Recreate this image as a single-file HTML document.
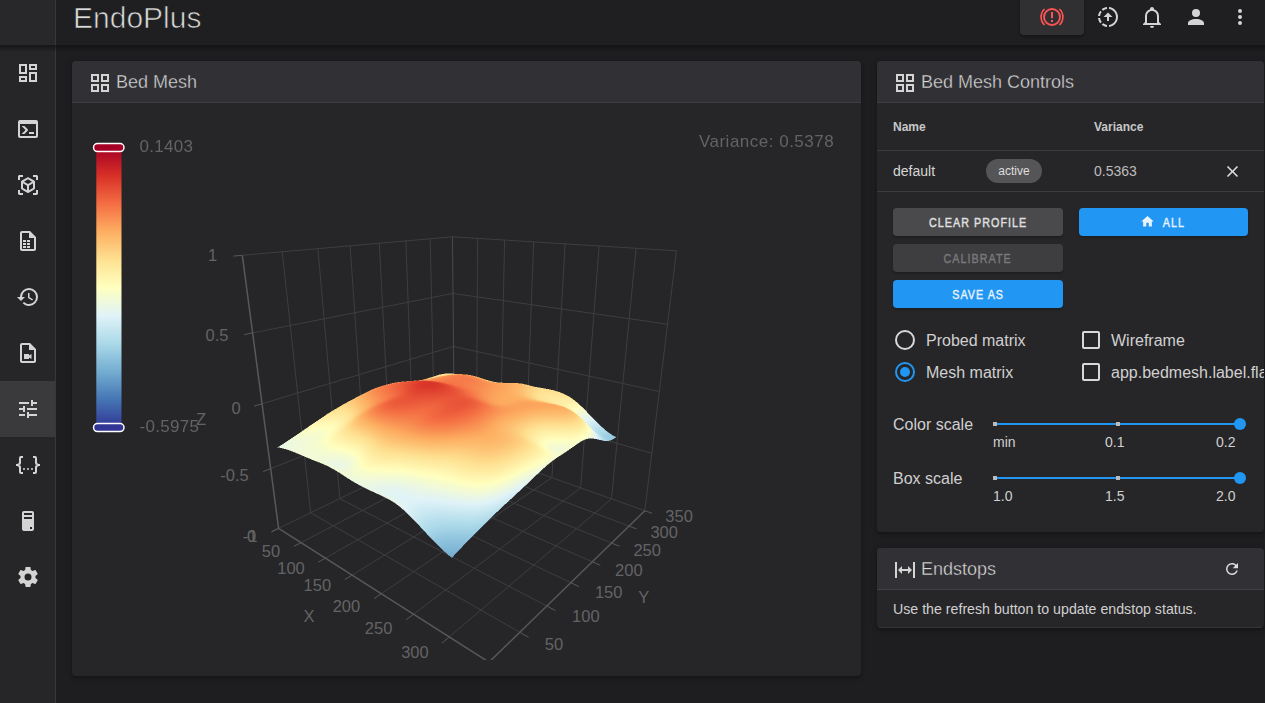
<!DOCTYPE html>
<html><head><meta charset="utf-8">
<style>
*{box-sizing:border-box;margin:0;padding:0}
html,body{width:1265px;height:703px;overflow:hidden;background:#1e1e20;font-family:"Liberation Sans",sans-serif;color:#d4d4d4}
.abs{position:absolute}
.ic{position:absolute;display:block}
#drawer{position:absolute;left:0;top:0;width:56px;height:703px;background:#262628;border-right:1px solid #38383b}
#drawertop{position:absolute;left:0;top:0;width:55px;height:45px;background:#28282a}
#appbar{position:absolute;left:56px;top:0;width:1209px;height:45px;background:#1f1f21}
#shadow{position:absolute;left:0;top:45px;width:1265px;height:7px;background:linear-gradient(rgba(16,16,18,.75),rgba(16,16,18,0))}
#active{position:absolute;left:0;top:381px;width:55px;height:56px;background:#3a3a3c}
.title{position:absolute;left:73px;top:1px;font-size:30px;line-height:34px;color:#dadada;letter-spacing:0px;-webkit-text-stroke:0.7px #1f1f21}
.estop{position:absolute;left:1020px;top:-6px;width:64px;height:41px;border-radius:4px;background:#303033;box-shadow:0 2px 3px rgba(0,0,0,.3)}
.card{position:absolute;background:#262628;border-radius:4px;overflow:hidden;box-shadow:0 2px 3px rgba(0,0,0,.25),0 1px 6px rgba(0,0,0,.15)}
.chead{position:absolute;left:0;top:0;right:0;height:42px;background:#313135;border-bottom:1px solid #404044}
.htxt{position:absolute;font-size:18px;line-height:20px;color:#dadada;-webkit-text-stroke:0.35px #313135}
.t12b{font-size:12px;font-weight:bold;color:#c8c8c8}
.btn{position:absolute;height:28px;border-radius:4px;font-size:12.5px;font-weight:normal;-webkit-text-stroke:0.4px currentColor;letter-spacing:0;text-align:center;line-height:28px;box-shadow:0 2px 2px rgba(0,0,0,.2)}
.btn span{display:inline-block;transform:scaleX(0.86);letter-spacing:1.2px;margin-top:1px}
.lbl16{position:absolute;font-size:16px;line-height:18px;color:#d0d0d0}
.lbl14{position:absolute;font-size:14px;line-height:16px;color:#d0d0d0}
.radio{position:absolute;width:20px;height:20px;border-radius:50%;border:2px solid #d8d8d8}
.cb{position:absolute;width:18px;height:18px;border-radius:2px;border:2px solid #d8d8d8}
.track{position:absolute;height:2px;background:#2196f3}
.tick{position:absolute;width:4px;height:4px;background:#bbb}
.thumb{position:absolute;width:12px;height:12px;border-radius:50%;background:#2196f3}
</style></head><body>
<div id="drawer"></div>
<div id="drawertop"></div>
<div id="appbar"></div>
<div id="shadow"></div>
<div id="active"></div>
<svg class="ic" style="left:16.0px;top:61.0px;width:24px;height:24px" viewBox="0 0 24 24"><path fill="#d4d4d4" d="M19,5V7H15V5H19M9,5V11H5V5H9M19,13V19H15V13H19M9,17V19H5V17H9M21,3H13V9H21V3M11,3H3V13H11V3M21,11H13V21H21V11M11,15H3V21H11V15Z"/></svg><svg class="ic" style="left:16.0px;top:117.0px;width:24px;height:24px" viewBox="0 0 24 24"><path fill="#d4d4d4" d="M20,19V7H4V19H20M20,3A2,2 0 0,1 22,5V19A2,2 0 0,1 20,21H4A2,2 0 0,1 2,19V5A2,2 0 0,1 4,3H20M13,17V15H18V17H13M9.58,13L5.57,9H8.4L11.7,12.3C12.09,12.69 12.09,13.33 11.7,13.72L8.42,17H5.59L9.58,13Z"/></svg><svg class="ic" style="left:16.0px;top:173.0px;width:24px;height:24px" viewBox="0 0 24 24"><path fill="#d4d4d4" d="M17,22V20H20V17H22V20.5C22,20.89 21.84,21.24 21.54,21.54C21.24,21.84 20.89,22 20.5,22H17M7,22H3.5C3.11,22 2.76,21.84 2.46,21.54C2.16,21.24 2,20.89 2,20.5V17H4V20H7V22M17,2H20.5C20.89,2 21.24,2.16 21.54,2.46C21.84,2.76 22,3.11 22,3.5V7H20V4H17V2M7,2V4H4V7H2V3.5C2,3.11 2.16,2.76 2.46,2.46C2.76,2.16 3.11,2 3.5,2H7M13,17.25L17,14.95V10.36L13,12.66V17.25M12,10.92L16,8.63L12,6.28L8,8.63L12,10.92M7,14.95L11,17.25V12.66L7,10.36V14.95M18.23,7.59C18.73,7.91 19,8.34 19,8.91V15.23C19,15.8 18.73,16.23 18.23,16.55L12.75,19.73C12.25,20.05 11.75,20.05 11.25,19.73L5.77,16.55C5.27,16.23 5,15.8 5,15.23V8.91C5,8.34 5.27,7.91 5.77,7.59L11.25,4.41C11.5,4.28 11.75,4.22 12,4.22C12.25,4.22 12.5,4.28 12.75,4.41L18.23,7.59Z"/></svg><svg class="ic" style="left:16.0px;top:229.0px;width:24px;height:24px" viewBox="0 0 24 24"><path fill="#d4d4d4" d="M14 2H6C4.89 2 4 2.89 4 4V20C4 21.11 4.89 22 6 22H18C19.11 22 20 21.11 20 20V8L14 2M18 20H6V4H13V9H18V20M7 11H10V13H7V11M11 11H14V13H11V11M7 14H10V16H7V14M11 14H14V16H11V14M7 17H10V19H7V17M11 17H14V19H11V17Z"/></svg><svg class="ic" style="left:16.0px;top:285.0px;width:24px;height:24px" viewBox="0 0 24 24"><path fill="#d4d4d4" d="M13.5,8H12V13L16.28,15.54L17,14.33L13.5,12.25V8M13,3A9,9 0 0,0 4,12H1L4.96,16.03L9,12H6A7,7 0 0,1 13,5A7,7 0 0,1 20,12A7,7 0 0,1 13,19C11.07,19 9.32,18.21 8.06,16.94L6.64,18.36C8.27,20 10.5,21 13,21A9,9 0 0,0 22,12A9,9 0 0,0 13,3"/></svg><svg class="ic" style="left:16.0px;top:341.0px;width:24px;height:24px" viewBox="0 0 24 24"><path fill="#d4d4d4" d="M14,2H6A2,2 0 0,0 4,4V20A2,2 0 0,0 6,22H18A2,2 0 0,0 20,20V8L14,2M18,20H6V4H13V9H18V20ZM8,13H13V14.5L15.5,13V18L13,16.5V18H8Z"/></svg><svg class="ic" style="left:16.0px;top:397.0px;width:24px;height:24px" viewBox="0 0 24 24"><path fill="#d4d4d4" d="M3,17V19H9V17H3M3,5V7H13V5H3M13,21V19H21V17H13V15H11V21H13M7,9V11H3V13H7V15H9V9H7M21,13V11H11V13H21M15,9H17V7H21V5H17V3H15V9Z"/></svg><svg class="ic" style="left:16.0px;top:453.0px;width:24px;height:24px" viewBox="0 0 24 24"><path fill="#d4d4d4" d="M5,3H7V5H5V10A2,2 0 0,1 3,12A2,2 0 0,1 5,14V19H7V21H5C3.93,20.73 3,20.1 3,19V15A2,2 0 0,0 1,13H0V11H1A2,2 0 0,0 3,9V5A2,2 0 0,1 5,3M19,3A2,2 0 0,1 21,5V9A2,2 0 0,0 23,11H24V13H23A2,2 0 0,0 21,15V19A2,2 0 0,1 19,21H17V19H19V14A2,2 0 0,1 21,12A2,2 0 0,1 19,10V5H17V3H19M12,15A1,1 0 0,1 13,16A1,1 0 0,1 12,17A1,1 0 0,1 11,16A1,1 0 0,1 12,15M8,15A1,1 0 0,1 9,16A1,1 0 0,1 8,17A1,1 0 0,1 7,16A1,1 0 0,1 8,15M16,15A1,1 0 0,1 17,16A1,1 0 0,1 16,17A1,1 0 0,1 15,16A1,1 0 0,1 16,15Z"/></svg><svg class="ic" style="left:16.0px;top:509.0px;width:24px;height:24px" viewBox="0 0 24 24"><path fill="#d4d4d4" d="M8,2H16A2,2 0 0,1 18,4V20A2,2 0 0,1 16,22H8A2,2 0 0,1 6,20V4A2,2 0 0,1 8,2M8,4V6H16V4H8M16,8H8V10H16V8M16,18H14V20H16V18Z"/></svg><svg class="ic" style="left:16.0px;top:565.0px;width:24px;height:24px" viewBox="0 0 24 24"><path fill="#d4d4d4" d="M12,15.5A3.5,3.5 0 0,1 8.5,12A3.5,3.5 0 0,1 12,8.5A3.5,3.5 0 0,1 15.5,12A3.5,3.5 0 0,1 12,15.5M19.43,12.97C19.47,12.65 19.5,12.33 19.5,12C19.5,11.67 19.47,11.34 19.43,11L21.54,9.37C21.73,9.22 21.78,8.95 21.66,8.73L19.66,5.27C19.54,5.05 19.27,4.96 19.05,5.05L16.56,6.05C16.04,5.66 15.5,5.32 14.87,5.07L14.5,2.42C14.46,2.18 14.25,2 14,2H10C9.75,2 9.54,2.18 9.5,2.42L9.13,5.07C8.5,5.32 7.96,5.66 7.44,6.05L4.95,5.05C4.73,4.96 4.46,5.05 4.34,5.27L2.34,8.73C2.21,8.95 2.27,9.22 2.46,9.37L4.57,11C4.53,11.34 4.5,11.67 4.5,12C4.5,12.33 4.53,12.65 4.57,12.97L2.46,14.63C2.27,14.78 2.21,15.05 2.34,15.27L4.34,18.73C4.46,18.95 4.73,19.03 4.95,18.95L7.44,17.94C7.96,18.34 8.5,18.68 9.13,18.93L9.5,21.58C9.54,21.82 9.75,22 10,22H14C14.25,22 14.46,21.82 14.5,21.58L14.87,18.93C15.5,18.67 16.04,18.34 16.56,17.94L19.05,18.95C19.27,19.03 19.54,18.95 19.66,18.73L21.66,15.27C21.78,15.05 21.73,14.78 21.54,14.63L19.43,12.97Z"/></svg>
<div class="title">EndoPlus</div>
<div class="estop"></div>
<svg class="ic" style="left:1040px;top:5px;width:24px;height:24px" viewBox="0 0 24 24"><g fill="none" stroke="#ff5252"><circle cx="12" cy="12" r="8" stroke-width="1.9"/><path stroke-width="1.7" d="M4.6 4A10.9 10.9 0 0 0 4.6 20M19.4 4A10.9 10.9 0 0 1 19.4 20"/></g><path fill="#ff5252" d="M11 7h2v6.3h-2zM11 15h2v2h-2z"/></svg>
<svg class="ic" style="left:1096px;top:5px;width:24px;height:24px" viewBox="0 0 24 24"><path fill="#d4d4d4" d="M13,2.03V4.05C17.39,4.59 20.5,8.58 19.96,12.97C19.5,16.61 16.64,19.5 13,19.93V21.93C18.5,21.38 22.5,16.5 21.95,11C21.5,6.25 17.73,2.5 13,2.03M11,2.06C9.05,2.25 7.19,3 5.67,4.26L7.1,5.74C8.22,4.84 9.57,4.26 11,4.06V2.06M4.26,5.67C3,7.19 2.25,9.04 2.05,11H4.05C4.24,9.58 4.8,8.23 5.69,7.1L4.26,5.67M2.06,13C2.26,14.96 3.03,16.81 4.27,18.33L5.69,16.9C4.81,15.77 4.24,14.42 4.06,13H2.06M7.1,18.37L5.67,19.74C7.18,21 9.04,21.79 11,22V20C9.58,19.82 8.24,19.25 7.1,18.37M12,7.5L7.5,12H11V16H13V12H16.5L12,7.5Z"/></svg>
<svg class="ic" style="left:1140.0px;top:5.0px;width:24px;height:24px" viewBox="0 0 24 24"><path fill="#d4d4d4" d="M10 21H14C14 22.1 13.1 23 12 23S10 22.1 10 21M21 19V20H3V19L5 17V11C5 7.9 7 5.2 10 4.3V4C10 2.9 10.9 2 12 2S14 2.9 14 4V4.3C17 5.2 19 7.9 19 11V17L21 19M17 11C17 8.2 14.8 6 12 6S7 8.2 7 11V18H17V11Z"/></svg>
<svg class="ic" style="left:1184.0px;top:5.0px;width:24px;height:24px" viewBox="0 0 24 24"><path fill="#d4d4d4" d="M12,4A4,4 0 0,1 16,8A4,4 0 0,1 12,12A4,4 0 0,1 8,8A4,4 0 0,1 12,4M12,14C16.42,14 20,15.79 20,18V20H4V18C4,15.79 7.58,14 12,14Z"/></svg>
<svg class="ic" style="left:1228.0px;top:5.0px;width:24px;height:24px" viewBox="0 0 24 24"><path fill="#d4d4d4" d="M12,16A2,2 0 0,1 14,18A2,2 0 0,1 12,20A2,2 0 0,1 10,18A2,2 0 0,1 12,16M12,10A2,2 0 0,1 14,12A2,2 0 0,1 12,14A2,2 0 0,1 10,12A2,2 0 0,1 12,10M12,4A2,2 0 0,1 14,6A2,2 0 0,1 12,8A2,2 0 0,1 10,6A2,2 0 0,1 12,4Z"/></svg>

<div class="card" style="left:72px;top:61px;width:789px;height:615px">
  <div class="chead"></div>
  <svg class="ic" style="left:16.0px;top:10.0px;width:24px;height:24px" viewBox="0 0 24 24"><path fill="#d4d4d4" d="M3 11H11V3H3M5 5H9V9H5M13 21H21V13H13M15 15H19V19H15M3 21H11V13H3M5 15H9V19H5M13 3V11H21V3M19 9H15V5H19Z"/></svg>
  <div class="htxt" style="left:44px;top:11px">Bed Mesh</div>
  <div class="abs" style="left:0;top:42px;width:789px;height:557px;overflow:hidden"><svg width="789" height="557" style="position:absolute;left:0;top:0;font-family:'Liberation Sans',sans-serif">
<line x1="229" y1="439.6" x2="404.5" y2="347.8" stroke="#3e3e41" stroke-width="1"/>
<line x1="238.7" y1="409.8" x2="447.8" y2="529.3" stroke="#3e3e41" stroke-width="1"/>
<line x1="238.7" y1="409.8" x2="210.2" y2="148.8" stroke="#3e3e41" stroke-width="1"/>
<line x1="404.5" y1="347.8" x2="405.6" y2="135.3" stroke="#3e3e41" stroke-width="1"/>
<line x1="253.4" y1="455.1" x2="428" y2="356.2" stroke="#3e3e41" stroke-width="1"/>
<line x1="267.9" y1="395.6" x2="474.8" y2="503" stroke="#3e3e41" stroke-width="1"/>
<line x1="267.9" y1="395.6" x2="245.9" y2="145.7" stroke="#3e3e41" stroke-width="1"/>
<line x1="428" y1="356.2" x2="432.6" y2="137" stroke="#3e3e41" stroke-width="1"/>
<line x1="280.1" y1="472.1" x2="453.1" y2="365.1" stroke="#3e3e41" stroke-width="1"/>
<line x1="294.7" y1="382.6" x2="498.8" y2="479.7" stroke="#3e3e41" stroke-width="1"/>
<line x1="294.7" y1="382.6" x2="278.1" y2="142.8" stroke="#3e3e41" stroke-width="1"/>
<line x1="453.1" y1="365.1" x2="461.7" y2="138.9" stroke="#3e3e41" stroke-width="1"/>
<line x1="309.3" y1="490.7" x2="479.9" y2="374.6" stroke="#3e3e41" stroke-width="1"/>
<line x1="319.3" y1="370.6" x2="520.3" y2="458.8" stroke="#3e3e41" stroke-width="1"/>
<line x1="319.3" y1="370.6" x2="307.3" y2="140.2" stroke="#3e3e41" stroke-width="1"/>
<line x1="479.9" y1="374.6" x2="493.1" y2="140.8" stroke="#3e3e41" stroke-width="1"/>
<line x1="341.6" y1="511.2" x2="508.6" y2="384.9" stroke="#3e3e41" stroke-width="1"/>
<line x1="342" y1="359.6" x2="539.5" y2="440" stroke="#3e3e41" stroke-width="1"/>
<line x1="342" y1="359.6" x2="333.9" y2="137.9" stroke="#3e3e41" stroke-width="1"/>
<line x1="508.6" y1="384.9" x2="527.1" y2="143" stroke="#3e3e41" stroke-width="1"/>
<line x1="377.3" y1="533.9" x2="539.5" y2="395.9" stroke="#3e3e41" stroke-width="1"/>
<line x1="363" y1="349.4" x2="557" y2="423.1" stroke="#3e3e41" stroke-width="1"/>
<line x1="363" y1="349.4" x2="358.2" y2="135.7" stroke="#3e3e41" stroke-width="1"/>
<line x1="539.5" y1="395.9" x2="564.1" y2="145.3" stroke="#3e3e41" stroke-width="1"/>
<line x1="198.7" y1="365.6" x2="382" y2="293.2" stroke="#3e3e41" stroke-width="1"/>
<line x1="382" y1="293.2" x2="579.8" y2="350.4" stroke="#3e3e41" stroke-width="1"/>
<line x1="190.1" y1="300.7" x2="381.5" y2="243.4" stroke="#3e3e41" stroke-width="1"/>
<line x1="381.5" y1="243.4" x2="587.3" y2="288.5" stroke="#3e3e41" stroke-width="1"/>
<line x1="180.6" y1="229.9" x2="381" y2="190.4" stroke="#3e3e41" stroke-width="1"/>
<line x1="381" y1="190.4" x2="595.5" y2="221.2" stroke="#3e3e41" stroke-width="1"/>
<line x1="170.3" y1="152.3" x2="380.5" y2="133.8" stroke="#3e3e41" stroke-width="1"/>
<line x1="380.5" y1="133.8" x2="604.5" y2="147.8" stroke="#3e3e41" stroke-width="1"/>
<line x1="382.4" y1="340" x2="380.5" y2="133.8" stroke="#4a4a4d" stroke-width="1"/>
<line x1="572.8" y1="407.7" x2="604.5" y2="147.8" stroke="#3e3e41" stroke-width="1"/>
<line x1="206.6" y1="425.3" x2="382.4" y2="340" stroke="#3e3e41" stroke-width="1"/>
<line x1="382.4" y1="340" x2="572.8" y2="407.7" stroke="#3e3e41" stroke-width="1"/>
<line x1="206.6" y1="425.3" x2="417" y2="559.2" stroke="#58585b" stroke-width="1.5"/>
<line x1="417" y1="559.2" x2="572.8" y2="407.7" stroke="#58585b" stroke-width="1.5"/>
<line x1="206.6" y1="425.3" x2="170.3" y2="152.3" stroke="#58585b" stroke-width="1.5"/>
<line x1="206.6" y1="425.3" x2="199.5" y2="428.8" stroke="#58585b" stroke-width="1"/>
<line x1="417" y1="559.2" x2="426" y2="564.9" stroke="#58585b" stroke-width="1"/>
<line x1="229" y1="439.6" x2="221.8" y2="443.4" stroke="#58585b" stroke-width="1"/>
<line x1="447.8" y1="529.3" x2="456.5" y2="534.3" stroke="#58585b" stroke-width="1"/>
<line x1="253.4" y1="455.1" x2="246.2" y2="459.2" stroke="#58585b" stroke-width="1"/>
<line x1="474.8" y1="503" x2="483.3" y2="507.4" stroke="#58585b" stroke-width="1"/>
<line x1="280.1" y1="472.1" x2="272.8" y2="476.6" stroke="#58585b" stroke-width="1"/>
<line x1="498.8" y1="479.7" x2="507" y2="483.6" stroke="#58585b" stroke-width="1"/>
<line x1="309.3" y1="490.7" x2="302.1" y2="495.6" stroke="#58585b" stroke-width="1"/>
<line x1="520.3" y1="458.8" x2="528.3" y2="462.3" stroke="#58585b" stroke-width="1"/>
<line x1="341.6" y1="511.2" x2="334.3" y2="516.6" stroke="#58585b" stroke-width="1"/>
<line x1="539.5" y1="440" x2="547.3" y2="443.2" stroke="#58585b" stroke-width="1"/>
<line x1="377.3" y1="533.9" x2="370.1" y2="540" stroke="#58585b" stroke-width="1"/>
<line x1="557" y1="423.1" x2="564.5" y2="425.9" stroke="#58585b" stroke-width="1"/>
<line x1="417" y1="559.2" x2="410.1" y2="566" stroke="#58585b" stroke-width="1"/>
<line x1="572.8" y1="407.7" x2="580.1" y2="410.3" stroke="#58585b" stroke-width="1"/>
<line x1="206.6" y1="425.3" x2="199.5" y2="428.8" stroke="#58585b" stroke-width="1"/>
<line x1="198.7" y1="365.6" x2="191.2" y2="368.6" stroke="#58585b" stroke-width="1"/>
<line x1="190.1" y1="300.7" x2="182.1" y2="303.1" stroke="#58585b" stroke-width="1"/>
<line x1="180.6" y1="229.9" x2="172.2" y2="231.6" stroke="#58585b" stroke-width="1"/>
<line x1="170.3" y1="152.3" x2="161.4" y2="153.1" stroke="#58585b" stroke-width="1"/>
<text x="198.9" y="447.8" font-size="16.5" text-anchor="middle" dominant-baseline="central" fill="#636365">50</text>
<text x="219" y="464.7" font-size="16.5" text-anchor="middle" dominant-baseline="central" fill="#636365">100</text>
<text x="245.3" y="482.2" font-size="16.5" text-anchor="middle" dominant-baseline="central" fill="#636365">150</text>
<text x="274.4" y="502.7" font-size="16.5" text-anchor="middle" dominant-baseline="central" fill="#636365">200</text>
<text x="306.6" y="524.5" font-size="16.5" text-anchor="middle" dominant-baseline="central" fill="#636365">250</text>
<text x="342.9" y="549" font-size="16.5" text-anchor="middle" dominant-baseline="central" fill="#636365">300</text>
<text x="236.9" y="513.1" font-size="16.5" text-anchor="middle" dominant-baseline="central" fill="#636365">X</text>
<text x="179.5" y="432.5" font-size="16.5" text-anchor="middle" dominant-baseline="central" fill="#636365">0</text>
<text x="607.1" y="413.1" font-size="16.5" text-anchor="middle" dominant-baseline="central" fill="#636365">350</text>
<text x="592.2" y="429.3" font-size="16.5" text-anchor="middle" dominant-baseline="central" fill="#636365">300</text>
<text x="575.2" y="446.7" font-size="16.5" text-anchor="middle" dominant-baseline="central" fill="#636365">250</text>
<text x="556.8" y="466.6" font-size="16.5" text-anchor="middle" dominant-baseline="central" fill="#636365">200</text>
<text x="536.7" y="488.5" font-size="16.5" text-anchor="middle" dominant-baseline="central" fill="#636365">150</text>
<text x="513.8" y="513.4" font-size="16.5" text-anchor="middle" dominant-baseline="central" fill="#636365">100</text>
<text x="481.9" y="541.3" font-size="16.5" text-anchor="middle" dominant-baseline="central" fill="#636365">50</text>
<text x="571.8" y="493.5" font-size="16.5" text-anchor="middle" dominant-baseline="central" fill="#636365">Y</text>
<text x="140.5" y="152" font-size="16.5" text-anchor="middle" dominant-baseline="central" fill="#636365">1</text>
<text x="145" y="231.5" font-size="16.5" text-anchor="middle" dominant-baseline="central" fill="#636365">0.5</text>
<text x="164" y="304.5" font-size="16.5" text-anchor="middle" dominant-baseline="central" fill="#636365">0</text>
<text x="162.5" y="371.5" font-size="16.5" text-anchor="middle" dominant-baseline="central" fill="#636365">-0.5</text>
<text x="178" y="432.5" font-size="16.5" text-anchor="middle" dominant-baseline="central" fill="#636365">-1</text>
<text x="129" y="316" font-size="16.5" text-anchor="middle" dominant-baseline="central" fill="#636365">Z</text>
<g id="fallback"><polygon points="381.3,271.2 385.6,271 390.2,272 385.8,273.2" fill="#fffab7" stroke="#fffab7" stroke-width="0.8"/>
<polygon points="385.6,271 390.1,271.2 394.6,271.8 390.2,272" fill="#fff4ae" stroke="#fff4ae" stroke-width="0.8"/>
<polygon points="376.6,270.5 381,270.8 385.6,271 381.3,271.2" fill="#feefa7" stroke="#feefa7" stroke-width="0.8"/>
<polygon points="390.1,271.2 394.6,271.8 399.1,272.4 394.6,271.8" fill="#fff0a9" stroke="#fff0a9" stroke-width="0.8"/>
<polygon points="381,270.8 385.5,271.1 390.1,271.2 385.6,271" fill="#feeba1" stroke="#feeba1" stroke-width="0.8"/>
<polygon points="371.9,270.8 376.3,271.2 381,270.8 376.6,270.5" fill="#fee89d" stroke="#fee89d" stroke-width="0.8"/>
<polygon points="394.6,271.8 399.2,272.7 403.7,273.6 399.1,272.4" fill="#feefa7" stroke="#feefa7" stroke-width="0.8"/>
<polygon points="385.5,271.1 390,271.5 394.6,271.8 390.1,271.2" fill="#fee89c" stroke="#fee89c" stroke-width="0.8"/>
<polygon points="399.2,272.7 403.8,273.8 408.3,275.1 403.7,273.6" fill="#feefa7" stroke="#feefa7" stroke-width="0.8"/>
<polygon points="376.3,271.2 380.8,271.4 385.5,271.1 381,270.8" fill="#fee598" stroke="#fee598" stroke-width="0.8"/>
<polygon points="367.1,271.8 371.6,272.1 376.3,271.2 371.9,270.8" fill="#fee497" stroke="#fee497" stroke-width="0.8"/>
<polygon points="390,271.5 394.6,272.1 399.2,272.7 394.6,271.8" fill="#fee699" stroke="#fee699" stroke-width="0.8"/>
<polygon points="403.8,273.8 408.5,275.1 412.9,276.7 408.3,275.1" fill="#fff0a8" stroke="#fff0a8" stroke-width="0.8"/>
<polygon points="380.8,271.4 385.4,271.5 390,271.5 385.5,271.1" fill="#fee292" stroke="#fee292" stroke-width="0.8"/>
<polygon points="371.6,272.1 376,272.1 380.8,271.4 376.3,271.2" fill="#fee191" stroke="#fee191" stroke-width="0.8"/>
<polygon points="394.6,272.1 399.3,272.8 403.8,273.8 399.2,272.7" fill="#fee597" stroke="#fee597" stroke-width="0.8"/>
<polygon points="362.3,273.3 366.7,273.3 371.6,272.1 367.1,271.8" fill="#fee294" stroke="#fee294" stroke-width="0.8"/>
<polygon points="408.5,275.1 413.3,276.5 417.7,278 412.9,276.7" fill="#fff1a9" stroke="#fff1a9" stroke-width="0.8"/>
<polygon points="385.4,271.5 390,271.7 394.6,272.1 390,271.5" fill="#fedd8d" stroke="#fedd8d" stroke-width="0.8"/>
<polygon points="399.3,272.8 404,273.7 408.5,275.1 403.8,273.8" fill="#fee496" stroke="#fee496" stroke-width="0.8"/>
<polygon points="376,272.1 380.6,271.8 385.4,271.5 380.8,271.4" fill="#feda8a" stroke="#feda8a" stroke-width="0.8"/>
<polygon points="413.3,276.5 418.1,278 422.5,279 417.7,278" fill="#fff1a9" stroke="#fff1a9" stroke-width="0.8"/>
<polygon points="366.7,273.3 371.2,272.9 376,272.1 371.6,272.1" fill="#fedc8c" stroke="#fedc8c" stroke-width="0.8"/>
<polygon points="390,271.7 394.6,272 399.3,272.8 394.6,272.1" fill="#fed889" stroke="#fed889" stroke-width="0.8"/>
<polygon points="357.3,274.9 361.7,274.6 366.7,273.3 362.3,273.3" fill="#fee192" stroke="#fee192" stroke-width="0.8"/>
<polygon points="404,273.7 408.8,275 413.3,276.5 408.5,275.1" fill="#fee496" stroke="#fee496" stroke-width="0.8"/>
<polygon points="380.6,271.8 385.2,271.6 390,271.7 385.4,271.5" fill="#fed283" stroke="#fed283" stroke-width="0.8"/>
<polygon points="418.1,278 423,279.3 427.3,279.5 422.5,279" fill="#fff0a8" stroke="#fff0a8" stroke-width="0.8"/>
<polygon points="371.2,272.9 375.7,272.4 380.6,271.8 376,272.1" fill="#fed384" stroke="#fed384" stroke-width="0.8"/>
<polygon points="394.6,272 399.4,272.6 404,273.7 399.3,272.8" fill="#fed585" stroke="#fed585" stroke-width="0.8"/>
<polygon points="361.7,274.6 366.2,273.9 371.2,272.9 366.7,273.3" fill="#fed889" stroke="#fed889" stroke-width="0.8"/>
<polygon points="408.8,275 413.6,276.6 418.1,278 413.3,276.5" fill="#fee597" stroke="#fee597" stroke-width="0.8"/>
<polygon points="352.3,276.4 356.7,275.8 361.7,274.6 357.3,274.9" fill="#fee090" stroke="#fee090" stroke-width="0.8"/>
<polygon points="385.2,271.6 389.9,271.5 394.6,272 390,271.7" fill="#fecb7c" stroke="#fecb7c" stroke-width="0.8"/>
<polygon points="423,279.3 427.9,280.4 432.3,279.8 427.3,279.5" fill="#feeea6" stroke="#feeea6" stroke-width="0.8"/>
<polygon points="375.7,272.4 380.4,271.8 385.2,271.6 380.6,271.8" fill="#fec97a" stroke="#fec97a" stroke-width="0.8"/>
<polygon points="399.4,272.6 404.2,273.6 408.8,275 404,273.7" fill="#fed384" stroke="#fed384" stroke-width="0.8"/>
<polygon points="413.6,276.6 418.5,278.4 423,279.3 418.1,278" fill="#fee699" stroke="#fee699" stroke-width="0.8"/>
<polygon points="366.2,273.9 370.8,273.1 375.7,272.4 371.2,272.9" fill="#fecd7e" stroke="#fecd7e" stroke-width="0.8"/>
<polygon points="356.7,275.8 361.2,274.9 366.2,273.9 361.7,274.6" fill="#fed585" stroke="#fed585" stroke-width="0.8"/>
<polygon points="389.9,271.5 394.7,271.7 399.4,272.6 394.6,272" fill="#fdc577" stroke="#fdc577" stroke-width="0.8"/>
<polygon points="427.9,280.4 433,281 437.3,280.1 432.3,279.8" fill="#feeca2" stroke="#feeca2" stroke-width="0.8"/>
<polygon points="347.1,277.4 351.5,276.7 356.7,275.8 352.3,276.4" fill="#fedc8c" stroke="#fedc8c" stroke-width="0.8"/>
<polygon points="404.2,273.6 409.1,275.1 413.6,276.6 408.8,275" fill="#fed485" stroke="#fed485" stroke-width="0.8"/>
<polygon points="380.4,271.8 385,271.4 389.9,271.5 385.2,271.6" fill="#fdc072" stroke="#fdc072" stroke-width="0.8"/>
<polygon points="418.5,278.4 423.5,279.9 427.9,280.4 423,279.3" fill="#fee79a" stroke="#fee79a" stroke-width="0.8"/>
<polygon points="370.8,273.1 375.4,272.3 380.4,271.8 375.7,272.4" fill="#fdc173" stroke="#fdc173" stroke-width="0.8"/>
<polygon points="394.7,271.7 399.5,272.4 404.2,273.6 399.4,272.6" fill="#fdc173" stroke="#fdc173" stroke-width="0.8"/>
<polygon points="433,281 438.1,281.1 442.4,280.6 437.3,280.1" fill="#fee89d" stroke="#fee89d" stroke-width="0.8"/>
<polygon points="361.2,274.9 365.7,274 370.8,273.1 366.2,273.9" fill="#fec87a" stroke="#fec87a" stroke-width="0.8"/>
<polygon points="409.1,275.1 414,277 418.5,278.4 413.6,276.6" fill="#fed787" stroke="#fed787" stroke-width="0.8"/>
<polygon points="351.5,276.7 356,275.9 361.2,274.9 356.7,275.8" fill="#fed081" stroke="#fed081" stroke-width="0.8"/>
<polygon points="385,271.4 389.8,271.2 394.7,271.7 389.9,271.5" fill="#fdb86a" stroke="#fdb86a" stroke-width="0.8"/>
<polygon points="423.5,279.9 428.5,280.9 433,281 427.9,280.4" fill="#fee699" stroke="#fee699" stroke-width="0.8"/>
<polygon points="341.8,277.9 346.2,277.4 351.5,276.7 347.1,277.4" fill="#fed687" stroke="#fed687" stroke-width="0.8"/>
<polygon points="375.4,272.3 380.1,271.6 385,271.4 380.4,271.8" fill="#fdb669" stroke="#fdb669" stroke-width="0.8"/>
<polygon points="399.5,272.4 404.4,273.7 409.1,275.1 404.2,273.6" fill="#fdc173" stroke="#fdc173" stroke-width="0.8"/>
<polygon points="438.1,281.1 443.3,280.9 447.5,281.4 442.4,280.6" fill="#fee597" stroke="#fee597" stroke-width="0.8"/>
<polygon points="414,277 419,278.8 423.5,279.9 418.5,278.4" fill="#feda8a" stroke="#feda8a" stroke-width="0.8"/>
<polygon points="365.7,274 370.3,273.1 375.4,272.3 370.8,273.1" fill="#fdbb6d" stroke="#fdbb6d" stroke-width="0.8"/>
<polygon points="356,275.9 360.6,275 365.7,274 361.2,274.9" fill="#fdc375" stroke="#fdc375" stroke-width="0.8"/>
<polygon points="389.8,271.2 394.7,271.6 399.5,272.4 394.7,271.7" fill="#fdb265" stroke="#fdb265" stroke-width="0.8"/>
<polygon points="428.5,280.9 433.7,280.9 438.1,281.1 433,281" fill="#fee294" stroke="#fee294" stroke-width="0.8"/>
<polygon points="346.2,277.4 350.7,276.8 356,275.9 351.5,276.7" fill="#fecb7c" stroke="#fecb7c" stroke-width="0.8"/>
<polygon points="404.4,273.7 409.3,275.5 414,277 409.1,275.1" fill="#fdc375" stroke="#fdc375" stroke-width="0.8"/>
<polygon points="380.1,271.6 384.9,271.2 389.8,271.2 385,271.4" fill="#fdac60" stroke="#fdac60" stroke-width="0.8"/>
<polygon points="419,278.8 424,280.1 428.5,280.9 423.5,279.9" fill="#feda8b" stroke="#feda8b" stroke-width="0.8"/>
<polygon points="336.4,278.2 340.8,277.9 346.2,277.4 341.8,277.9" fill="#fece7f" stroke="#fece7f" stroke-width="0.8"/>
<polygon points="443.3,280.9 448.5,280.8 452.8,282.3 447.5,281.4" fill="#fee192" stroke="#fee192" stroke-width="0.8"/>
<polygon points="370.3,273.1 375.1,272.3 380.1,271.6 375.4,272.3" fill="#fdaf62" stroke="#fdaf62" stroke-width="0.8"/>
<polygon points="394.7,271.6 399.6,272.6 404.4,273.7 399.5,272.4" fill="#fdaf62" stroke="#fdaf62" stroke-width="0.8"/>
<polygon points="433.7,280.9 438.9,280.4 443.3,280.9 438.1,281.1" fill="#fedb8b" stroke="#fedb8b" stroke-width="0.8"/>
<polygon points="360.6,275 365.2,274.2 370.3,273.1 365.7,274" fill="#fdb669" stroke="#fdb669" stroke-width="0.8"/>
<polygon points="409.3,275.5 414.3,277.4 419,278.8 414,277" fill="#fdc778" stroke="#fdc778" stroke-width="0.8"/>
<polygon points="350.7,276.8 355.3,276.1 360.6,275 356,275.9" fill="#fdbe70" stroke="#fdbe70" stroke-width="0.8"/>
<polygon points="384.9,271.2 389.7,271.3 394.7,271.6 389.8,271.2" fill="#fba25c" stroke="#fba25c" stroke-width="0.8"/>
<polygon points="424,280.1 429.2,280.3 433.7,280.9 428.5,280.9" fill="#fed687" stroke="#fed687" stroke-width="0.8"/>
<polygon points="448.5,280.8 453.9,281.5 458,283.2 452.8,282.3" fill="#fede8e" stroke="#fede8e" stroke-width="0.8"/>
<polygon points="340.8,277.9 345.4,277.5 350.7,276.8 346.2,277.4" fill="#fdc475" stroke="#fdc475" stroke-width="0.8"/>
<polygon points="399.6,272.6 404.6,274.2 409.3,275.5 404.4,273.7" fill="#fdb163" stroke="#fdb163" stroke-width="0.8"/>
<polygon points="375.1,272.3 379.8,271.8 384.9,271.2 380.1,271.6" fill="#fba15b" stroke="#fba15b" stroke-width="0.8"/>
<polygon points="330.9,278.6 335.3,278.4 340.8,277.9 336.4,278.2" fill="#fdc677" stroke="#fdc677" stroke-width="0.8"/>
<polygon points="414.3,277.4 419.4,278.9 424,280.1 419,278.8" fill="#fec97a" stroke="#fec97a" stroke-width="0.8"/>
<polygon points="438.9,280.4 444.2,280.1 448.5,280.8 443.3,280.9" fill="#fed283" stroke="#fed283" stroke-width="0.8"/>
<polygon points="365.2,274.2 369.9,273.5 375.1,272.3 370.3,273.1" fill="#fca95f" stroke="#fca95f" stroke-width="0.8"/>
<polygon points="355.3,276.1 359.9,275.4 365.2,274.2 360.6,275" fill="#fdb265" stroke="#fdb265" stroke-width="0.8"/>
<polygon points="389.7,271.3 394.7,272 399.6,272.6 394.7,271.6" fill="#fb9d59" stroke="#fb9d59" stroke-width="0.8"/>
<polygon points="453.9,281.5 459.3,283.2 463.4,284 458,283.2" fill="#fedc8c" stroke="#fedc8c" stroke-width="0.8"/>
<polygon points="429.2,280.3 434.4,280 438.9,280.4 433.7,280.9" fill="#fece7f" stroke="#fece7f" stroke-width="0.8"/>
<polygon points="345.4,277.5 349.9,277.1 355.3,276.1 350.7,276.8" fill="#fdb96b" stroke="#fdb96b" stroke-width="0.8"/>
<polygon points="404.6,274.2 409.6,276 414.3,277.4 409.3,275.5" fill="#fdb366" stroke="#fdb366" stroke-width="0.8"/>
<polygon points="379.8,271.8 384.7,271.7 389.7,271.3 384.9,271.2" fill="#fa9656" stroke="#fa9656" stroke-width="0.8"/>
<polygon points="419.4,278.9 424.6,279.6 429.2,280.3 424,280.1" fill="#fdc678" stroke="#fdc678" stroke-width="0.8"/>
<polygon points="335.3,278.4 339.9,278.1 345.4,277.5 340.8,277.9" fill="#fdbc6f" stroke="#fdbc6f" stroke-width="0.8"/>
<polygon points="444.2,280.1 449.6,280.8 453.9,281.5 448.5,280.8" fill="#fecb7d" stroke="#fecb7d" stroke-width="0.8"/>
<polygon points="369.9,273.5 374.7,273 379.8,271.8 375.1,272.3" fill="#fa9a58" stroke="#fa9a58" stroke-width="0.8"/>
<polygon points="325.3,279.2 329.7,279 335.3,278.4 330.9,278.6" fill="#fdbe70" stroke="#fdbe70" stroke-width="0.8"/>
<polygon points="394.7,272 399.7,273.3 404.6,274.2 399.6,272.6" fill="#fa9c59" stroke="#fa9c59" stroke-width="0.8"/>
<polygon points="459.3,283.2 464.7,285.7 468.9,284.8 463.4,284" fill="#fedc8d" stroke="#fedc8d" stroke-width="0.8"/>
<polygon points="359.9,275.4 364.7,274.9 369.9,273.5 365.2,274.2" fill="#fca45d" stroke="#fca45d" stroke-width="0.8"/>
<polygon points="434.4,280 439.8,279.9 444.2,280.1 438.9,280.4" fill="#fdc476" stroke="#fdc476" stroke-width="0.8"/>
<polygon points="409.6,276 414.7,277.7 419.4,278.9 414.3,277.4" fill="#fdb668" stroke="#fdb668" stroke-width="0.8"/>
<polygon points="349.9,277.1 354.6,276.7 359.9,275.4 355.3,276.1" fill="#fdae61" stroke="#fdae61" stroke-width="0.8"/>
<polygon points="384.7,271.7 389.7,272.1 394.7,272 389.7,271.3" fill="#f98e52" stroke="#f98e52" stroke-width="0.8"/>
<polygon points="424.6,279.6 429.9,279.8 434.4,280 429.2,280.3" fill="#fdc072" stroke="#fdc072" stroke-width="0.8"/>
<polygon points="449.6,280.8 455,283 459.3,283.2 453.9,281.5" fill="#fecb7d" stroke="#fecb7d" stroke-width="0.8"/>
<polygon points="339.9,278.1 344.4,277.9 349.9,277.1 345.4,277.5" fill="#fdb365" stroke="#fdb365" stroke-width="0.8"/>
<polygon points="399.7,273.3 404.8,275 409.6,276 404.6,274.2" fill="#fb9e5a" stroke="#fb9e5a" stroke-width="0.8"/>
<polygon points="374.7,273 379.6,272.9 384.7,271.7 379.8,271.8" fill="#f98e52" stroke="#f98e52" stroke-width="0.8"/>
<polygon points="464.7,285.7 470.1,288.4 474.4,285.8 468.9,284.8" fill="#fedf8f" stroke="#fedf8f" stroke-width="0.8"/>
<polygon points="329.7,279 334.2,278.7 339.9,278.1 335.3,278.4" fill="#fdb567" stroke="#fdb567" stroke-width="0.8"/>
<polygon points="414.7,277.7 419.9,278.9 424.6,279.6 419.4,278.9" fill="#fdb668" stroke="#fdb668" stroke-width="0.8"/>
<polygon points="364.7,274.9 369.5,274.6 374.7,273 369.9,273.5" fill="#fa9756" stroke="#fa9756" stroke-width="0.8"/>
<polygon points="439.8,279.9 445.2,280.8 449.6,280.8 444.2,280.1" fill="#fdbe70" stroke="#fdbe70" stroke-width="0.8"/>
<polygon points="319.5,280.3 324,279.8 329.7,279 325.3,279.2" fill="#fdb86a" stroke="#fdb86a" stroke-width="0.8"/>
<polygon points="354.6,276.7 359.3,276.4 364.7,274.9 359.9,275.4" fill="#fba15b" stroke="#fba15b" stroke-width="0.8"/>
<polygon points="455,283 460.4,286.4 464.7,285.7 459.3,283.2" fill="#fed283" stroke="#fed283" stroke-width="0.8"/>
<polygon points="389.7,272.1 394.7,273.2 399.7,273.3 394.7,272" fill="#f88b51" stroke="#f88b51" stroke-width="0.8"/>
<polygon points="429.9,279.8 435.2,280.2 439.8,279.9 434.4,280" fill="#fdb86b" stroke="#fdb86b" stroke-width="0.8"/>
<polygon points="344.4,277.9 349.1,277.7 354.6,276.7 349.9,277.1" fill="#fca85e" stroke="#fca85e" stroke-width="0.8"/>
<polygon points="404.8,275 409.9,276.8 414.7,277.7 409.6,276" fill="#fba15b" stroke="#fba15b" stroke-width="0.8"/>
<polygon points="470.1,288.4 475.7,290.9 480,286.9 474.4,285.8" fill="#fee191" stroke="#fee191" stroke-width="0.8"/>
<polygon points="379.6,272.9 384.6,273.2 389.7,272.1 384.7,271.7" fill="#f7864e" stroke="#f7864e" stroke-width="0.8"/>
<polygon points="334.2,278.7 338.8,278.4 344.4,277.9 339.9,278.1" fill="#fdab5f" stroke="#fdab5f" stroke-width="0.8"/>
<polygon points="445.2,280.8 450.6,283.3 455,283 449.6,280.8" fill="#fdbf71" stroke="#fdbf71" stroke-width="0.8"/>
<polygon points="419.9,278.9 425.2,279.8 429.9,279.8 424.6,279.6" fill="#fdb265" stroke="#fdb265" stroke-width="0.8"/>
<polygon points="369.5,274.6 374.4,274.6 379.6,272.9 374.7,273" fill="#f88b51" stroke="#f88b51" stroke-width="0.8"/>
<polygon points="460.4,286.4 465.8,290 470.1,288.4 464.7,285.7" fill="#fedc8c" stroke="#fedc8c" stroke-width="0.8"/>
<polygon points="394.7,273.2 399.8,274.6 404.8,275 399.7,273.3" fill="#f88c51" stroke="#f88c51" stroke-width="0.8"/>
<polygon points="324,279.8 328.5,279.3 334.2,278.7 329.7,279" fill="#fdad61" stroke="#fdad61" stroke-width="0.8"/>
<polygon points="359.3,276.4 364.1,276.3 369.5,274.6 364.7,274.9" fill="#f99555" stroke="#f99555" stroke-width="0.8"/>
<polygon points="435.2,280.2 440.6,281.4 445.2,280.8 439.8,279.9" fill="#fdb466" stroke="#fdb466" stroke-width="0.8"/>
<polygon points="409.9,276.8 415.1,278.5 419.9,278.9 414.7,277.7" fill="#fca35c" stroke="#fca35c" stroke-width="0.8"/>
<polygon points="475.7,290.9 481.3,292.9 485.6,288.5 480,286.9" fill="#fee293" stroke="#fee293" stroke-width="0.8"/>
<polygon points="313.7,281.8 318.1,280.9 324,279.8 319.5,280.3" fill="#fdb366" stroke="#fdb366" stroke-width="0.8"/>
<polygon points="349.1,277.7 353.9,277.5 359.3,276.4 354.6,276.7" fill="#fa9c59" stroke="#fa9c59" stroke-width="0.8"/>
<polygon points="384.6,273.2 389.6,274.1 394.7,273.2 389.7,272.1" fill="#f7814c" stroke="#f7814c" stroke-width="0.8"/>
<polygon points="450.6,283.3 456,287 460.4,286.4 455,283" fill="#fec87a" stroke="#fec87a" stroke-width="0.8"/>
<polygon points="465.8,290 471.4,293.2 475.7,290.9 470.1,288.4" fill="#fee395" stroke="#fee395" stroke-width="0.8"/>
<polygon points="425.2,279.8 430.5,280.9 435.2,280.2 429.9,279.8" fill="#fdae61" stroke="#fdae61" stroke-width="0.8"/>
<polygon points="338.8,278.4 343.5,278.1 349.1,277.7 344.4,277.9" fill="#fb9f5a" stroke="#fb9f5a" stroke-width="0.8"/>
<polygon points="374.4,274.6 379.3,275 384.6,273.2 379.6,272.9" fill="#f7834d" stroke="#f7834d" stroke-width="0.8"/>
<polygon points="399.8,274.6 405,276.5 409.9,276.8 404.8,275" fill="#f98e52" stroke="#f98e52" stroke-width="0.8"/>
<polygon points="328.5,279.3 333.1,278.8 338.8,278.4 334.2,278.7" fill="#fba05b" stroke="#fba05b" stroke-width="0.8"/>
<polygon points="364.1,276.3 369,276.5 374.4,274.6 369.5,274.6" fill="#f88a51" stroke="#f88a51" stroke-width="0.8"/>
<polygon points="440.6,281.4 446,284 450.6,283.3 445.2,280.8" fill="#fdb669" stroke="#fdb669" stroke-width="0.8"/>
<polygon points="481.3,292.9 487.1,295 491.3,290.6 485.6,288.5" fill="#fee496" stroke="#fee496" stroke-width="0.8"/>
<polygon points="415.1,278.5 420.4,280.2 425.2,279.8 419.9,278.9" fill="#fca45c" stroke="#fca45c" stroke-width="0.8"/>
<polygon points="456,287 461.5,290.9 465.8,290 460.4,286.4" fill="#fed586" stroke="#fed586" stroke-width="0.8"/>
<polygon points="318.1,280.9 322.6,280.1 328.5,279.3 324,279.8" fill="#fca55d" stroke="#fca55d" stroke-width="0.8"/>
<polygon points="389.6,274.1 394.7,275.4 399.8,274.6 394.7,273.2" fill="#f7804c" stroke="#f7804c" stroke-width="0.8"/>
<polygon points="353.9,277.5 358.7,277.6 364.1,276.3 359.3,276.4" fill="#f99154" stroke="#f99154" stroke-width="0.8"/>
<polygon points="471.4,293.2 477,295.5 481.3,292.9 475.7,290.9" fill="#fee79a" stroke="#fee79a" stroke-width="0.8"/>
<polygon points="430.5,280.9 436,282.6 440.6,281.4 435.2,280.2" fill="#fdac60" stroke="#fdac60" stroke-width="0.8"/>
<polygon points="307.8,283.8 312.2,282.3 318.1,280.9 313.7,281.8" fill="#fdb163" stroke="#fdb163" stroke-width="0.8"/>
<polygon points="405,276.5 410.2,278.6 415.1,278.5 409.9,276.8" fill="#f99254" stroke="#f99254" stroke-width="0.8"/>
<polygon points="343.5,278.1 348.2,278 353.9,277.5 349.1,277.7" fill="#f99355" stroke="#f99355" stroke-width="0.8"/>
<polygon points="379.3,275 384.4,275.9 389.6,274.1 384.6,273.2" fill="#f67d4b" stroke="#f67d4b" stroke-width="0.8"/>
<polygon points="446,284 451.5,287.6 456,287 450.6,283.3" fill="#fdc072" stroke="#fdc072" stroke-width="0.8"/>
<polygon points="461.5,290.9 467.1,294.3 471.4,293.2 465.8,290" fill="#fee191" stroke="#fee191" stroke-width="0.8"/>
<polygon points="487.1,295 492.8,297.6 497.1,293.6 491.3,290.6" fill="#fee89c" stroke="#fee89c" stroke-width="0.8"/>
<polygon points="420.4,280.2 425.8,281.9 430.5,280.9 425.2,279.8" fill="#fca45c" stroke="#fca45c" stroke-width="0.8"/>
<polygon points="369,276.5 374,277 379.3,275 374.4,274.6" fill="#f7824d" stroke="#f7824d" stroke-width="0.8"/>
<polygon points="333.1,278.8 337.7,278.3 343.5,278.1 338.8,278.4" fill="#f99355" stroke="#f99355" stroke-width="0.8"/>
<polygon points="394.7,275.4 399.9,277.2 405,276.5 399.8,274.6" fill="#f7824d" stroke="#f7824d" stroke-width="0.8"/>
<polygon points="477,295.5 482.8,297.5 487.1,295 481.3,292.9" fill="#fee99e" stroke="#fee99e" stroke-width="0.8"/>
<polygon points="358.7,277.6 363.6,277.8 369,276.5 364.1,276.3" fill="#f8884f" stroke="#f8884f" stroke-width="0.8"/>
<polygon points="322.6,280.1 327.2,279.3 333.1,278.8 328.5,279.3" fill="#fa9656" stroke="#fa9656" stroke-width="0.8"/>
<polygon points="436,282.6 441.4,285.1 446,284 440.6,281.4" fill="#fdb063" stroke="#fdb063" stroke-width="0.8"/>
<polygon points="410.2,278.6 415.5,280.8 420.4,280.2 415.1,278.5" fill="#fa9756" stroke="#fa9756" stroke-width="0.8"/>
<polygon points="451.5,287.6 457.1,291.3 461.5,290.9 456,287" fill="#fecd7e" stroke="#fecd7e" stroke-width="0.8"/>
<polygon points="384.4,275.9 389.5,277.1 394.7,275.4 389.6,274.1" fill="#f67c4a" stroke="#f67c4a" stroke-width="0.8"/>
<polygon points="492.8,297.6 498.6,301.4 502.8,297.6 497.1,293.6" fill="#feeea6" stroke="#feeea6" stroke-width="0.8"/>
<polygon points="312.2,282.3 316.7,281.2 322.6,280.1 318.1,280.9" fill="#fb9f5a" stroke="#fb9f5a" stroke-width="0.8"/>
<polygon points="467.1,294.3 472.7,296.7 477,295.5 471.4,293.2" fill="#fee699" stroke="#fee699" stroke-width="0.8"/>
<polygon points="348.2,278 353.1,278 358.7,277.6 353.9,277.5" fill="#f88950" stroke="#f88950" stroke-width="0.8"/>
<polygon points="301.8,286.1 306.1,284.2 312.2,282.3 307.8,283.8" fill="#fdb063" stroke="#fdb063" stroke-width="0.8"/>
<polygon points="425.8,281.9 431.2,284 436,282.6 430.5,280.9" fill="#fca65d" stroke="#fca65d" stroke-width="0.8"/>
<polygon points="374,277 379.1,277.8 384.4,275.9 379.3,275" fill="#f67d4b" stroke="#f67d4b" stroke-width="0.8"/>
<polygon points="399.9,277.2 405.2,279.4 410.2,278.6 405,276.5" fill="#f8874f" stroke="#f8874f" stroke-width="0.8"/>
<polygon points="482.8,297.5 488.6,299.9 492.8,297.6 487.1,295" fill="#feeca2" stroke="#feeca2" stroke-width="0.8"/>
<polygon points="337.7,278.3 342.5,278 348.2,278 343.5,278.1" fill="#f8874f" stroke="#f8874f" stroke-width="0.8"/>
<polygon points="441.4,285.1 446.9,288.2 451.5,287.6 446,284" fill="#fdb96b" stroke="#fdb96b" stroke-width="0.8"/>
<polygon points="457.1,291.3 462.7,294.5 467.1,294.3 461.5,290.9" fill="#fed98a" stroke="#fed98a" stroke-width="0.8"/>
<polygon points="498.6,301.4 504.4,306.3 508.5,302.6 502.8,297.6" fill="#fff9b5" stroke="#fff9b5" stroke-width="0.8"/>
<polygon points="363.6,277.8 368.6,278.4 374,277 369,276.5" fill="#f7804c" stroke="#f7804c" stroke-width="0.8"/>
<polygon points="415.5,280.8 420.9,283.2 425.8,281.9 420.4,280.2" fill="#fa9b58" stroke="#fa9b58" stroke-width="0.8"/>
<polygon points="327.2,279.3 331.9,278.7 337.7,278.3 333.1,278.8" fill="#f8884f" stroke="#f8884f" stroke-width="0.8"/>
<polygon points="472.7,296.7 478.5,298.7 482.8,297.5 477,295.5" fill="#fee89d" stroke="#fee89d" stroke-width="0.8"/>
<polygon points="389.5,277.1 394.7,278.8 399.9,277.2 394.7,275.4" fill="#f67d4a" stroke="#f67d4a" stroke-width="0.8"/>
<polygon points="353.1,278 358,278.1 363.6,277.8 358.7,277.6" fill="#f77f4c" stroke="#f77f4c" stroke-width="0.8"/>
<polygon points="431.2,284 436.7,286.5 441.4,285.1 436,282.6" fill="#fdac60" stroke="#fdac60" stroke-width="0.8"/>
<polygon points="316.7,281.2 321.2,280.2 327.2,279.3 322.6,280.1" fill="#f98e52" stroke="#f98e52" stroke-width="0.8"/>
<polygon points="488.6,299.9 494.5,303.2 498.6,301.4 492.8,297.6" fill="#fff1aa" stroke="#fff1aa" stroke-width="0.8"/>
<polygon points="405.2,279.4 410.5,281.9 415.5,280.8 410.2,278.6" fill="#f88d52" stroke="#f88d52" stroke-width="0.8"/>
<polygon points="379.1,277.8 384.2,279 389.5,277.1 384.4,275.9" fill="#f67b49" stroke="#f67b49" stroke-width="0.8"/>
<polygon points="504.4,306.3 510.1,312 514.2,308.2 508.5,302.6" fill="#f8fccc" stroke="#f8fccc" stroke-width="0.8"/>
<polygon points="446.9,288.2 452.5,291.5 457.1,291.3 451.5,287.6" fill="#fdc476" stroke="#fdc476" stroke-width="0.8"/>
<polygon points="306.1,284.2 310.6,282.8 316.7,281.2 312.2,282.3" fill="#fa9b58" stroke="#fa9b58" stroke-width="0.8"/>
<polygon points="462.7,294.5 468.4,296.9 472.7,296.7 467.1,294.3" fill="#fee191" stroke="#fee191" stroke-width="0.8"/>
<polygon points="295.7,288.8 300,286.5 306.1,284.2 301.8,286.1" fill="#fdb264" stroke="#fdb264" stroke-width="0.8"/>
<polygon points="342.5,278 347.3,277.8 353.1,278 348.2,278" fill="#f67c4a" stroke="#f67c4a" stroke-width="0.8"/>
<polygon points="420.9,283.2 426.3,285.6 431.2,284 425.8,281.9" fill="#fba15b" stroke="#fba15b" stroke-width="0.8"/>
<polygon points="368.6,278.4 373.7,279.2 379.1,277.8 374,277" fill="#f67b4a" stroke="#f67b4a" stroke-width="0.8"/>
<polygon points="478.5,298.7 484.4,300.7 488.6,299.9 482.8,297.5" fill="#feeaa0" stroke="#feeaa0" stroke-width="0.8"/>
<polygon points="394.7,278.8 400,280.9 405.2,279.4 399.9,277.2" fill="#f7814c" stroke="#f7814c" stroke-width="0.8"/>
<polygon points="510.1,312 515.9,318 520,314.2 514.2,308.2" fill="#e9f7e7" stroke="#e9f7e7" stroke-width="0.8"/>
<polygon points="331.9,278.7 336.6,278.2 342.5,278 337.7,278.3" fill="#f67a49" stroke="#f67a49" stroke-width="0.8"/>
<polygon points="436.7,286.5 442.3,289.1 446.9,288.2 441.4,285.1" fill="#fdb366" stroke="#fdb366" stroke-width="0.8"/>
<polygon points="494.5,303.2 500.3,307.5 504.4,306.3 498.6,301.4" fill="#fffab8" stroke="#fffab8" stroke-width="0.8"/>
<polygon points="358,278.1 363,278.6 368.6,278.4 363.6,277.8" fill="#f67848" stroke="#f67848" stroke-width="0.8"/>
<polygon points="452.5,291.5 458.2,294.4 462.7,294.5 457.1,291.3" fill="#fece7f" stroke="#fece7f" stroke-width="0.8"/>
<polygon points="410.5,281.9 415.9,284.6 420.9,283.2 415.5,280.8" fill="#fa9555" stroke="#fa9555" stroke-width="0.8"/>
<polygon points="321.2,280.2 325.9,279.6 331.9,278.7 327.2,279.3" fill="#f67e4b" stroke="#f67e4b" stroke-width="0.8"/>
<polygon points="384.2,279 389.4,280.6 394.7,278.8 389.5,277.1" fill="#f67b4a" stroke="#f67b4a" stroke-width="0.8"/>
<polygon points="468.4,296.9 474.2,298.8 478.5,298.7 472.7,296.7" fill="#fee395" stroke="#fee395" stroke-width="0.8"/>
<polygon points="426.3,285.6 431.9,288 436.7,286.5 431.2,284" fill="#fca85e" stroke="#fca85e" stroke-width="0.8"/>
<polygon points="515.9,318 521.8,323.9 525.8,320.1 520,314.2" fill="#d5eef5" stroke="#d5eef5" stroke-width="0.8"/>
<polygon points="310.6,282.8 315.1,281.9 321.2,280.2 316.7,281.2" fill="#f88950" stroke="#f88950" stroke-width="0.8"/>
<polygon points="347.3,277.8 352.3,277.8 358,278.1 353.1,278" fill="#f57245" stroke="#f57245" stroke-width="0.8"/>
<polygon points="500.3,307.5 506.2,312.7 510.1,312 504.4,306.3" fill="#f8fccc" stroke="#f8fccc" stroke-width="0.8"/>
<polygon points="484.4,300.7 490.3,303.4 494.5,303.2 488.6,299.9" fill="#feeea5" stroke="#feeea5" stroke-width="0.8"/>
<polygon points="373.7,279.2 378.8,280.3 384.2,279 379.1,277.8" fill="#f67948" stroke="#f67948" stroke-width="0.8"/>
<polygon points="400,280.9 405.4,283.3 410.5,281.9 405.2,279.4" fill="#f8884f" stroke="#f8884f" stroke-width="0.8"/>
<polygon points="300,286.5 304.4,285.1 310.6,282.8 306.1,284.2" fill="#fa9b58" stroke="#fa9b58" stroke-width="0.8"/>
<polygon points="289.5,291.8 293.7,289.7 300,286.5 295.7,288.8" fill="#fdb668" stroke="#fdb668" stroke-width="0.8"/>
<polygon points="442.3,289.1 447.9,291.8 452.5,291.5 446.9,288.2" fill="#fdbb6e" stroke="#fdbb6e" stroke-width="0.8"/>
<polygon points="458.2,294.4 464,296.6 468.4,296.9 462.7,294.5" fill="#fed586" stroke="#fed586" stroke-width="0.8"/>
<polygon points="415.9,284.6 421.4,287.2 426.3,285.6 420.9,283.2" fill="#fb9d59" stroke="#fb9d59" stroke-width="0.8"/>
<polygon points="336.6,278.2 341.5,277.8 347.3,277.8 342.5,278" fill="#f46e43" stroke="#f46e43" stroke-width="0.8"/>
<polygon points="521.8,323.9 527.8,329.3 531.7,325.7 525.8,320.1" fill="#bde2ee" stroke="#bde2ee" stroke-width="0.8"/>
<polygon points="363,278.6 368.1,279.3 373.7,279.2 368.6,278.4" fill="#f57346" stroke="#f57346" stroke-width="0.8"/>
<polygon points="389.4,280.6 394.7,282.4 400,280.9 394.7,278.8" fill="#f67e4b" stroke="#f67e4b" stroke-width="0.8"/>
<polygon points="506.2,312.7 512.1,318.3 515.9,318 510.1,312" fill="#eaf7e6" stroke="#eaf7e6" stroke-width="0.8"/>
<polygon points="474.2,298.8 480.2,300.6 484.4,300.7 478.5,298.7" fill="#fee497" stroke="#fee497" stroke-width="0.8"/>
<polygon points="431.9,288 437.5,290.3 442.3,289.1 436.7,286.5" fill="#fdaf62" stroke="#fdaf62" stroke-width="0.8"/>
<polygon points="325.9,279.6 330.6,279.1 336.6,278.2 331.9,278.7" fill="#f47044" stroke="#f47044" stroke-width="0.8"/>
<polygon points="490.3,303.4 496.3,307 500.3,307.5 494.5,303.2" fill="#fff5af" stroke="#fff5af" stroke-width="0.8"/>
<polygon points="405.4,283.3 410.8,285.9 415.9,284.6 410.5,281.9" fill="#f99053" stroke="#f99053" stroke-width="0.8"/>
<polygon points="352.3,277.8 357.3,278 363,278.6 358,278.1" fill="#f26941" stroke="#f26941" stroke-width="0.8"/>
<polygon points="378.8,280.3 384,281.8 389.4,280.6 384.2,279" fill="#f67848" stroke="#f67848" stroke-width="0.8"/>
<polygon points="447.9,291.8 453.6,294.2 458.2,294.4 452.5,291.5" fill="#fdc374" stroke="#fdc374" stroke-width="0.8"/>
<polygon points="315.1,281.9 319.8,281.4 325.9,279.6 321.2,280.2" fill="#f67949" stroke="#f67949" stroke-width="0.8"/>
<polygon points="527.8,329.3 533.9,333.7 537.8,330.5 531.7,325.7" fill="#a9d8e8" stroke="#a9d8e8" stroke-width="0.8"/>
<polygon points="304.4,285.1 309,284.4 315.1,281.9 310.6,282.8" fill="#f88950" stroke="#f88950" stroke-width="0.8"/>
<polygon points="421.4,287.2 426.9,289.7 431.9,288 426.3,285.6" fill="#fca45c" stroke="#fca45c" stroke-width="0.8"/>
<polygon points="512.1,318.3 518,324 521.8,323.9 515.9,318" fill="#d8eff6" stroke="#d8eff6" stroke-width="0.8"/>
<polygon points="464,296.6 469.9,298.4 474.2,298.8 468.4,296.9" fill="#fed889" stroke="#fed889" stroke-width="0.8"/>
<polygon points="293.7,289.7 298.2,288.4 304.4,285.1 300,286.5" fill="#fba15b" stroke="#fba15b" stroke-width="0.8"/>
<polygon points="283.1,295.1 287.4,293.7 293.7,289.7 289.5,291.8" fill="#fdbd6f" stroke="#fdbd6f" stroke-width="0.8"/>
<polygon points="394.7,282.4 400.1,284.6 405.4,283.3 400,280.9" fill="#f7834d" stroke="#f7834d" stroke-width="0.8"/>
<polygon points="341.5,277.8 346.4,277.6 352.3,277.8 347.3,277.8" fill="#ef633e" stroke="#ef633e" stroke-width="0.8"/>
<polygon points="368.1,279.3 373.3,280.3 378.8,280.3 373.7,279.2" fill="#f46f44" stroke="#f46f44" stroke-width="0.8"/>
<polygon points="496.3,307 502.3,311.3 506.2,312.7 500.3,307.5" fill="#fffebe" stroke="#fffebe" stroke-width="0.8"/>
<polygon points="480.2,300.6 486.2,302.7 490.3,303.4 484.4,300.7" fill="#fee69a" stroke="#fee69a" stroke-width="0.8"/>
<polygon points="437.5,290.3 443.1,292.5 447.9,291.8 442.3,289.1" fill="#fdb467" stroke="#fdb467" stroke-width="0.8"/>
<polygon points="410.8,285.9 416.3,288.6 421.4,287.2 415.9,284.6" fill="#fa9857" stroke="#fa9857" stroke-width="0.8"/>
<polygon points="330.6,279.1 335.5,278.7 341.5,277.8 336.6,278.2" fill="#ef633f" stroke="#ef633f" stroke-width="0.8"/>
<polygon points="518,324 524,329.3 527.8,329.3 521.8,323.9" fill="#c1e4ef" stroke="#c1e4ef" stroke-width="0.8"/>
<polygon points="453.6,294.2 459.4,296.2 464,296.6 458.2,294.4" fill="#fec779" stroke="#fec779" stroke-width="0.8"/>
<polygon points="533.9,333.7 540.2,336.7 544,334.1 537.8,330.5" fill="#9ccde2" stroke="#9ccde2" stroke-width="0.8"/>
<polygon points="384,281.8 389.4,283.5 394.7,282.4 389.4,280.6" fill="#f67949" stroke="#f67949" stroke-width="0.8"/>
<polygon points="357.3,278 362.4,278.5 368.1,279.3 363,278.6" fill="#ef633e" stroke="#ef633e" stroke-width="0.8"/>
<polygon points="426.9,289.7 432.5,291.9 437.5,290.3 431.9,288" fill="#fdaa5f" stroke="#fdaa5f" stroke-width="0.8"/>
<polygon points="319.8,281.4 324.6,281.2 330.6,279.1 325.9,279.6" fill="#f36c42" stroke="#f36c42" stroke-width="0.8"/>
<polygon points="469.9,298.4 475.8,299.9 480.2,300.6 474.2,298.8" fill="#fed98a" stroke="#fed98a" stroke-width="0.8"/>
<polygon points="502.3,311.3 508.3,316.1 512.1,318.3 506.2,312.7" fill="#f4fbd3" stroke="#f4fbd3" stroke-width="0.8"/>
<polygon points="400.1,284.6 405.6,287.1 410.8,285.9 405.4,283.3" fill="#f88a50" stroke="#f88a50" stroke-width="0.8"/>
<polygon points="309,284.4 313.7,284.2 319.8,281.4 315.1,281.9" fill="#f67b49" stroke="#f67b49" stroke-width="0.8"/>
<polygon points="486.2,302.7 492.2,305.3 496.3,307 490.3,303.4" fill="#feeaa0" stroke="#feeaa0" stroke-width="0.8"/>
<polygon points="373.3,280.3 378.5,281.7 384,281.8 378.8,280.3" fill="#f46e43" stroke="#f46e43" stroke-width="0.8"/>
<polygon points="298.2,288.4 302.7,288 309,284.4 304.4,285.1" fill="#f98f53" stroke="#f98f53" stroke-width="0.8"/>
<polygon points="443.1,292.5 448.9,294.4 453.6,294.2 447.9,291.8" fill="#fdb86b" stroke="#fdb86b" stroke-width="0.8"/>
<polygon points="346.4,277.6 351.4,277.6 357.3,278 352.3,277.8" fill="#eb5a3a" stroke="#eb5a3a" stroke-width="0.8"/>
<polygon points="287.4,293.7 291.9,293 298.2,288.4 293.7,289.7" fill="#fdac60" stroke="#fdac60" stroke-width="0.8"/>
<polygon points="524,329.3 530.2,334.1 533.9,333.7 527.8,329.3" fill="#aedaea" stroke="#aedaea" stroke-width="0.8"/>
<polygon points="276.7,298.5 281.1,298.6 287.4,293.7 283.1,295.1" fill="#fdc678" stroke="#fdc678" stroke-width="0.8"/>
<polygon points="416.3,288.6 421.9,291.3 426.9,289.7 421.4,287.2" fill="#fba05b" stroke="#fba05b" stroke-width="0.8"/>
<polygon points="459.4,296.2 465.4,297.8 469.9,298.4 464,296.6" fill="#feca7b" stroke="#feca7b" stroke-width="0.8"/>
<polygon points="389.4,283.5 394.8,285.4 400.1,284.6 394.7,282.4" fill="#f67d4a" stroke="#f67d4a" stroke-width="0.8"/>
<polygon points="508.3,316.1 514.3,321.4 518,324 512.1,318.3" fill="#e8f6ea" stroke="#e8f6ea" stroke-width="0.8"/>
<polygon points="335.5,278.7 340.4,278.5 346.4,277.6 341.5,277.8" fill="#ea5839" stroke="#ea5839" stroke-width="0.8"/>
<polygon points="432.5,291.9 438.3,293.9 443.1,292.5 437.5,290.3" fill="#fdaf62" stroke="#fdaf62" stroke-width="0.8"/>
<polygon points="362.4,278.5 367.6,279.4 373.3,280.3 368.1,279.3" fill="#ed5f3d" stroke="#ed5f3d" stroke-width="0.8"/>
<polygon points="475.8,299.9 481.9,301.4 486.2,302.7 480.2,300.6" fill="#feda8a" stroke="#feda8a" stroke-width="0.8"/>
<polygon points="405.6,287.1 411.1,289.8 416.3,288.6 410.8,285.9" fill="#f99254" stroke="#f99254" stroke-width="0.8"/>
<polygon points="492.2,305.3 498.3,308.5 502.3,311.3 496.3,307" fill="#fff1a9" stroke="#fff1a9" stroke-width="0.8"/>
<polygon points="324.6,281.2 329.4,281.1 335.5,278.7 330.6,279.1" fill="#ee603d" stroke="#ee603d" stroke-width="0.8"/>
<polygon points="530.2,334.1 536.5,337.8 540.2,336.7 533.9,333.7" fill="#a1d1e4" stroke="#a1d1e4" stroke-width="0.8"/>
<polygon points="378.5,281.7 383.9,283.4 389.4,283.5 384,281.8" fill="#f46f44" stroke="#f46f44" stroke-width="0.8"/>
<polygon points="448.9,294.4 454.8,296.1 459.4,296.2 453.6,294.2" fill="#fdbb6d" stroke="#fdbb6d" stroke-width="0.8"/>
<polygon points="313.7,284.2 318.4,284.4 324.6,281.2 319.8,281.4" fill="#f46f44" stroke="#f46f44" stroke-width="0.8"/>
<polygon points="421.9,291.3 427.5,293.8 432.5,291.9 426.9,289.7" fill="#fca75e" stroke="#fca75e" stroke-width="0.8"/>
<polygon points="514.3,321.4 520.4,326.8 524,329.3 518,324" fill="#d7eff6" stroke="#d7eff6" stroke-width="0.8"/>
<polygon points="351.4,277.6 356.5,277.9 362.4,278.5 357.3,278" fill="#e75237" stroke="#e75237" stroke-width="0.8"/>
<polygon points="302.7,288 307.4,288.1 313.7,284.2 309,284.4" fill="#f7834d" stroke="#f7834d" stroke-width="0.8"/>
<polygon points="291.9,293 296.5,292.8 302.7,288 298.2,288.4" fill="#fb9d59" stroke="#fb9d59" stroke-width="0.8"/>
<polygon points="281.1,298.6 285.6,298.7 291.9,293 287.4,293.7" fill="#fdbb6d" stroke="#fdbb6d" stroke-width="0.8"/>
<polygon points="270.1,302.1 274.7,304 281.1,298.6 276.7,298.5" fill="#fed283" stroke="#fed283" stroke-width="0.8"/>
<polygon points="394.8,285.4 400.2,287.8 405.6,287.1 400.1,284.6" fill="#f7824d" stroke="#f7824d" stroke-width="0.8"/>
<polygon points="465.4,297.8 471.4,299.2 475.8,299.9 469.9,298.4" fill="#feca7b" stroke="#feca7b" stroke-width="0.8"/>
<polygon points="438.3,293.9 444.1,295.6 448.9,294.4 443.1,292.5" fill="#fdb164" stroke="#fdb164" stroke-width="0.8"/>
<polygon points="498.3,308.5 504.5,312.5 508.3,316.1 502.3,311.3" fill="#fff9b6" stroke="#fff9b6" stroke-width="0.8"/>
<polygon points="367.6,279.4 372.8,280.8 378.5,281.7 373.3,280.3" fill="#ec5d3c" stroke="#ec5d3c" stroke-width="0.8"/>
<polygon points="340.4,278.5 345.4,278.4 351.4,277.6 346.4,277.6" fill="#e54e35" stroke="#e54e35" stroke-width="0.8"/>
<polygon points="411.1,289.8 416.7,292.7 421.9,291.3 416.3,288.6" fill="#fa9b58" stroke="#fa9b58" stroke-width="0.8"/>
<polygon points="481.9,301.4 488.1,303.2 492.2,305.3 486.2,302.7" fill="#fedc8c" stroke="#fedc8c" stroke-width="0.8"/>
<polygon points="520.4,326.8 526.6,332.4 530.2,334.1 524,329.3" fill="#c3e5f0" stroke="#c3e5f0" stroke-width="0.8"/>
<polygon points="329.4,281.1 334.3,281.1 340.4,278.5 335.5,278.7" fill="#e95638" stroke="#e95638" stroke-width="0.8"/>
<polygon points="383.9,283.4 389.3,285.5 394.8,285.4 389.4,283.5" fill="#f57145" stroke="#f57145" stroke-width="0.8"/>
<polygon points="454.8,296.1 460.8,297.6 465.4,297.8 459.4,296.2" fill="#fdbc6e" stroke="#fdbc6e" stroke-width="0.8"/>
<polygon points="427.5,293.8 433.3,295.9 438.3,293.9 432.5,291.9" fill="#fdac60" stroke="#fdac60" stroke-width="0.8"/>
<polygon points="318.4,284.4 323.3,284.7 329.4,281.1 324.6,281.2" fill="#f06540" stroke="#f06540" stroke-width="0.8"/>
<polygon points="356.5,277.9 361.7,278.7 367.6,279.4 362.4,278.5" fill="#e54c34" stroke="#e54c34" stroke-width="0.8"/>
<polygon points="400.2,287.8 405.8,290.5 411.1,289.8 405.6,287.1" fill="#f88950" stroke="#f88950" stroke-width="0.8"/>
<polygon points="307.4,288.1 312.2,288.5 318.4,284.4 313.7,284.2" fill="#f67948" stroke="#f67948" stroke-width="0.8"/>
<polygon points="504.5,312.5 510.6,317.3 514.3,321.4 508.3,316.1" fill="#fbfdc7" stroke="#fbfdc7" stroke-width="0.8"/>
<polygon points="471.4,299.2 477.5,300.3 481.9,301.4 475.8,299.9" fill="#fec87a" stroke="#fec87a" stroke-width="0.8"/>
<polygon points="274.7,304 279.2,305.1 285.6,298.7 281.1,298.6" fill="#fecd7e" stroke="#fecd7e" stroke-width="0.8"/>
<polygon points="296.5,292.8 301.1,293 307.4,288.1 302.7,288" fill="#f99254" stroke="#f99254" stroke-width="0.8"/>
<polygon points="285.6,298.7 290.1,298.8 296.5,292.8 291.9,293" fill="#fdb164" stroke="#fdb164" stroke-width="0.8"/>
<polygon points="416.7,292.7 422.4,295.5 427.5,293.8 421.9,291.3" fill="#fca35c" stroke="#fca35c" stroke-width="0.8"/>
<polygon points="444.1,295.6 450,297 454.8,296.1 448.9,294.4" fill="#fdb264" stroke="#fdb264" stroke-width="0.8"/>
<polygon points="263.4,306 268.1,309.6 274.7,304 270.1,302.1" fill="#fede8f" stroke="#fede8f" stroke-width="0.8"/>
<polygon points="526.6,332.4 532.8,337.9 536.5,337.8 530.2,334.1" fill="#b1dceb" stroke="#b1dceb" stroke-width="0.8"/>
<polygon points="488.1,303.2 494.3,305.5 498.3,308.5 492.2,305.3" fill="#fee191" stroke="#fee191" stroke-width="0.8"/>
<polygon points="372.8,280.8 378.2,282.7 383.9,283.4 378.5,281.7" fill="#ed5e3c" stroke="#ed5e3c" stroke-width="0.8"/>
<polygon points="345.4,278.4 350.5,278.5 356.5,277.9 351.4,277.6" fill="#e14531" stroke="#e14531" stroke-width="0.8"/>
<polygon points="389.3,285.5 394.8,287.9 400.2,287.8 394.8,285.4" fill="#f57647" stroke="#f57647" stroke-width="0.8"/>
<polygon points="460.8,297.6 466.8,298.8 471.4,299.2 465.4,297.8" fill="#fdbb6d" stroke="#fdbb6d" stroke-width="0.8"/>
<polygon points="433.3,295.9 439.1,297.5 444.1,295.6 438.3,293.9" fill="#fdae61" stroke="#fdae61" stroke-width="0.8"/>
<polygon points="510.6,317.3 516.8,323 520.4,326.8 514.3,321.4" fill="#eff9dd" stroke="#eff9dd" stroke-width="0.8"/>
<polygon points="334.3,281.1 339.4,281 345.4,278.4 340.4,278.5" fill="#e44c34" stroke="#e44c34" stroke-width="0.8"/>
<polygon points="405.8,290.5 411.4,293.5 416.7,292.7 411.1,289.8" fill="#f99354" stroke="#f99354" stroke-width="0.8"/>
<polygon points="323.3,284.7 328.2,285 334.3,281.1 329.4,281.1" fill="#ec5d3b" stroke="#ec5d3b" stroke-width="0.8"/>
<polygon points="361.7,278.7 367,280 372.8,280.8 367.6,279.4" fill="#e34a33" stroke="#e34a33" stroke-width="0.8"/>
<polygon points="477.5,300.3 483.8,301.5 488.1,303.2 481.9,301.4" fill="#fec779" stroke="#fec779" stroke-width="0.8"/>
<polygon points="312.2,288.5 317.1,289.1 323.3,284.7 318.4,284.4" fill="#f57145" stroke="#f57145" stroke-width="0.8"/>
<polygon points="494.3,305.5 500.5,308.7 504.5,312.5 498.3,308.5" fill="#fee699" stroke="#fee699" stroke-width="0.8"/>
<polygon points="422.4,295.5 428.1,297.9 433.3,295.9 427.5,293.8" fill="#fca95f" stroke="#fca95f" stroke-width="0.8"/>
<polygon points="268.1,309.6 272.7,311.6 279.2,305.1 274.7,304" fill="#fee191" stroke="#fee191" stroke-width="0.8"/>
<polygon points="279.2,305.1 283.8,305.4 290.1,298.8 285.6,298.7" fill="#fdc778" stroke="#fdc778" stroke-width="0.8"/>
<polygon points="301.1,293 305.9,293.4 312.2,288.5 307.4,288.1" fill="#f88950" stroke="#f88950" stroke-width="0.8"/>
<polygon points="450,297 456,298.2 460.8,297.6 454.8,296.1" fill="#fdb164" stroke="#fdb164" stroke-width="0.8"/>
<polygon points="290.1,298.8 294.8,298.8 301.1,293 296.5,292.8" fill="#fca85e" stroke="#fca85e" stroke-width="0.8"/>
<polygon points="378.2,282.7 383.7,285.1 389.3,285.5 383.9,283.4" fill="#ee613e" stroke="#ee613e" stroke-width="0.8"/>
<polygon points="516.8,323 522.9,329.6 526.6,332.4 520.4,326.8" fill="#e1f3f6" stroke="#e1f3f6" stroke-width="0.8"/>
<polygon points="256.7,310.2 261.4,315 268.1,309.6 263.4,306" fill="#fee79b" stroke="#fee79b" stroke-width="0.8"/>
<polygon points="394.8,287.9 400.4,290.6 405.8,290.5 400.2,287.8" fill="#f67d4a" stroke="#f67d4a" stroke-width="0.8"/>
<polygon points="350.5,278.5 355.7,279.1 361.7,278.7 356.5,277.9" fill="#de3e2e" stroke="#de3e2e" stroke-width="0.8"/>
<polygon points="439.1,297.5 445,298.6 450,297 444.1,295.6" fill="#fdad60" stroke="#fdad60" stroke-width="0.8"/>
<polygon points="466.8,298.8 473,299.9 477.5,300.3 471.4,299.2" fill="#fdb96b" stroke="#fdb96b" stroke-width="0.8"/>
<polygon points="411.4,293.5 417.1,296.6 422.4,295.5 416.7,292.7" fill="#fb9c59" stroke="#fb9c59" stroke-width="0.8"/>
<polygon points="339.4,281 344.5,281 350.5,278.5 345.4,278.4" fill="#e0422f" stroke="#e0422f" stroke-width="0.8"/>
<polygon points="367,280 372.4,282.2 378.2,282.7 372.8,280.8" fill="#e44c34" stroke="#e44c34" stroke-width="0.8"/>
<polygon points="500.5,308.7 506.8,313 510.6,317.3 504.5,312.5" fill="#feeea5" stroke="#feeea5" stroke-width="0.8"/>
<polygon points="522.9,329.6 529,337.2 532.8,337.9 526.6,332.4" fill="#c8e7f1" stroke="#c8e7f1" stroke-width="0.8"/>
<polygon points="328.2,285 333.2,285 339.4,281 334.3,281.1" fill="#e85337" stroke="#e85337" stroke-width="0.8"/>
<polygon points="483.8,301.5 490.1,303.2 494.3,305.5 488.1,303.2" fill="#fec879" stroke="#fec879" stroke-width="0.8"/>
<polygon points="428.1,297.9 434,299.7 439.1,297.5 433.3,295.9" fill="#fdac60" stroke="#fdac60" stroke-width="0.8"/>
<polygon points="383.7,285.1 389.2,287.7 394.8,287.9 389.3,285.5" fill="#f16740" stroke="#f16740" stroke-width="0.8"/>
<polygon points="317.1,289.1 322,289.5 328.2,285 323.3,284.7" fill="#f26941" stroke="#f26941" stroke-width="0.8"/>
<polygon points="272.7,311.6 277.3,312.2 283.8,305.4 279.2,305.1" fill="#fedd8d" stroke="#fedd8d" stroke-width="0.8"/>
<polygon points="456,298.2 462.1,299.4 466.8,298.8 460.8,297.6" fill="#fdaf62" stroke="#fdaf62" stroke-width="0.8"/>
<polygon points="305.9,293.4 310.7,293.8 317.1,289.1 312.2,288.5" fill="#f7814c" stroke="#f7814c" stroke-width="0.8"/>
<polygon points="261.4,315 266.1,317.6 272.7,311.6 268.1,309.6" fill="#feeca2" stroke="#feeca2" stroke-width="0.8"/>
<polygon points="283.8,305.4 288.4,305.2 294.8,298.8 290.1,298.8" fill="#fdbe70" stroke="#fdbe70" stroke-width="0.8"/>
<polygon points="294.8,298.8 299.5,298.8 305.9,293.4 301.1,293" fill="#fb9e59" stroke="#fb9e59" stroke-width="0.8"/>
<polygon points="400.4,290.6 406,293.7 411.4,293.5 405.8,290.5" fill="#f8864f" stroke="#f8864f" stroke-width="0.8"/>
<polygon points="355.7,279.1 361.1,280.4 367,280 361.7,278.7" fill="#dc3b2c" stroke="#dc3b2c" stroke-width="0.8"/>
<polygon points="417.1,296.6 422.9,299.4 428.1,297.9 422.4,295.5" fill="#fca55d" stroke="#fca55d" stroke-width="0.8"/>
<polygon points="249.8,314.7 254.6,320 261.4,315 256.7,310.2" fill="#feefa7" stroke="#feefa7" stroke-width="0.8"/>
<polygon points="506.8,313 513,318.9 516.8,323 510.6,317.3" fill="#fff9b6" stroke="#fff9b6" stroke-width="0.8"/>
<polygon points="445,298.6 451.1,299.6 456,298.2 450,297" fill="#fcaa5f" stroke="#fcaa5f" stroke-width="0.8"/>
<polygon points="473,299.9 479.3,301 483.8,301.5 477.5,300.3" fill="#fdb668" stroke="#fdb668" stroke-width="0.8"/>
<polygon points="372.4,282.2 377.9,284.9 383.7,285.1 378.2,282.7" fill="#e65036" stroke="#e65036" stroke-width="0.8"/>
<polygon points="344.5,281 349.7,281.4 355.7,279.1 350.5,278.5" fill="#dc3a2c" stroke="#dc3a2c" stroke-width="0.8"/>
<polygon points="490.1,303.2 496.4,305.9 500.5,308.7 494.3,305.5" fill="#fecc7d" stroke="#fecc7d" stroke-width="0.8"/>
<polygon points="389.2,287.7 394.8,290.5 400.4,290.6 394.8,287.9" fill="#f46e44" stroke="#f46e44" stroke-width="0.8"/>
<polygon points="434,299.7 440,300.7 445,298.6 439.1,297.5" fill="#fcaa5f" stroke="#fcaa5f" stroke-width="0.8"/>
<polygon points="333.2,285 338.3,284.9 344.5,281 339.4,281" fill="#e34933" stroke="#e34933" stroke-width="0.8"/>
<polygon points="406,293.7 411.8,296.8 417.1,296.6 411.4,293.5" fill="#f99153" stroke="#f99153" stroke-width="0.8"/>
<polygon points="513,318.9 519.2,326.5 522.9,329.6 516.8,323" fill="#f6fbd0" stroke="#f6fbd0" stroke-width="0.8"/>
<polygon points="322,289.5 327,289.6 333.2,285 328.2,285" fill="#ee613d" stroke="#ee613d" stroke-width="0.8"/>
<polygon points="462.1,299.4 468.3,300.8 473,299.9 466.8,298.8" fill="#fdad60" stroke="#fdad60" stroke-width="0.8"/>
<polygon points="266.1,317.6 270.6,318.4 277.3,312.2 272.7,311.6" fill="#feeba1" stroke="#feeba1" stroke-width="0.8"/>
<polygon points="277.3,312.2 281.8,311.7 288.4,305.2 283.8,305.4" fill="#fed485" stroke="#fed485" stroke-width="0.8"/>
<polygon points="310.7,293.8 315.7,294 322,289.5 317.1,289.1" fill="#f67949" stroke="#f67949" stroke-width="0.8"/>
<polygon points="254.6,320 259.2,322.9 266.1,317.6 261.4,315" fill="#fff6b1" stroke="#fff6b1" stroke-width="0.8"/>
<polygon points="288.4,305.2 293,304.5 299.5,298.8 294.8,298.8" fill="#fdb467" stroke="#fdb467" stroke-width="0.8"/>
<polygon points="299.5,298.8 304.3,298.5 310.7,293.8 305.9,293.4" fill="#f99355" stroke="#f99355" stroke-width="0.8"/>
<polygon points="361.1,280.4 366.5,282.6 372.4,282.2 367,280" fill="#dd3d2d" stroke="#dd3d2d" stroke-width="0.8"/>
<polygon points="422.9,299.4 428.8,301.4 434,299.7 428.1,297.9" fill="#fca95f" stroke="#fca95f" stroke-width="0.8"/>
<polygon points="377.9,284.9 383.5,287.8 389.2,287.7 383.7,285.1" fill="#ea5839" stroke="#ea5839" stroke-width="0.8"/>
<polygon points="519.2,326.5 525.2,336.3 529,337.2 522.9,329.6" fill="#e1f4f5" stroke="#e1f4f5" stroke-width="0.8"/>
<polygon points="479.3,301 485.7,302.7 490.1,303.2 483.8,301.5" fill="#fdb567" stroke="#fdb567" stroke-width="0.8"/>
<polygon points="451.1,299.6 457.2,301 462.1,299.4 456,298.2" fill="#fca75e" stroke="#fca75e" stroke-width="0.8"/>
<polygon points="496.4,305.9 502.8,310 506.8,313 500.5,308.7" fill="#fed687" stroke="#fed687" stroke-width="0.8"/>
<polygon points="242.7,319.5 247.5,324.6 254.6,320 249.8,314.7" fill="#fff6b2" stroke="#fff6b2" stroke-width="0.8"/>
<polygon points="394.8,290.5 400.5,293.4 406,293.7 400.4,290.6" fill="#f57748" stroke="#f57748" stroke-width="0.8"/>
<polygon points="349.7,281.4 355,282.6 361.1,280.4 355.7,279.1" fill="#da362a" stroke="#da362a" stroke-width="0.8"/>
<polygon points="411.8,296.8 417.6,299.6 422.9,299.4 417.1,296.6" fill="#fa9a58" stroke="#fa9a58" stroke-width="0.8"/>
<polygon points="440,300.7 446.1,301.7 451.1,299.6 445,298.6" fill="#fca65d" stroke="#fca65d" stroke-width="0.8"/>
<polygon points="338.3,284.9 343.5,285.2 349.7,281.4 344.5,281" fill="#df412f" stroke="#df412f" stroke-width="0.8"/>
<polygon points="468.3,300.8 474.6,302.6 479.3,301 473,299.9" fill="#fdab5f" stroke="#fdab5f" stroke-width="0.8"/>
<polygon points="327,289.6 332.1,289.4 338.3,284.9 333.2,285" fill="#e95639" stroke="#e95639" stroke-width="0.8"/>
<polygon points="366.5,282.6 372,285.6 377.9,284.9 372.4,282.2" fill="#e04330" stroke="#e04330" stroke-width="0.8"/>
<polygon points="270.6,318.4 275.1,317.9 281.8,311.7 277.3,312.2" fill="#fee699" stroke="#fee699" stroke-width="0.8"/>
<polygon points="259.2,322.9 263.8,324 270.6,318.4 266.1,317.6" fill="#fff6b1" stroke="#fff6b1" stroke-width="0.8"/>
<polygon points="315.7,294 320.7,293.8 327,289.6 322,289.5" fill="#f46f44" stroke="#f46f44" stroke-width="0.8"/>
<polygon points="502.8,310 509.1,316 513,318.9 506.8,313" fill="#fee597" stroke="#fee597" stroke-width="0.8"/>
<polygon points="428.8,301.4 434.8,302.6 440,300.7 434,299.7" fill="#fca85e" stroke="#fca85e" stroke-width="0.8"/>
<polygon points="281.8,311.7 286.4,310.4 293,304.5 288.4,305.2" fill="#fec879" stroke="#fec879" stroke-width="0.8"/>
<polygon points="304.3,298.5 309.2,298.1 315.7,294 310.7,293.8" fill="#f88850" stroke="#f88850" stroke-width="0.8"/>
<polygon points="293,304.5 297.7,303.5 304.3,298.5 299.5,298.8" fill="#fca75e" stroke="#fca75e" stroke-width="0.8"/>
<polygon points="383.5,287.8 389.1,290.7 394.8,290.5 389.2,287.7" fill="#ee603d" stroke="#ee603d" stroke-width="0.8"/>
<polygon points="247.5,324.6 252.2,327.6 259.2,322.9 254.6,320" fill="#fffebd" stroke="#fffebd" stroke-width="0.8"/>
<polygon points="485.7,302.7 492.1,305.3 496.4,305.9 490.1,303.2" fill="#fdb769" stroke="#fdb769" stroke-width="0.8"/>
<polygon points="457.2,301 463.5,303.1 468.3,300.8 462.1,299.4" fill="#fca65d" stroke="#fca65d" stroke-width="0.8"/>
<polygon points="400.5,293.4 406.3,296.2 411.8,296.8 406,293.7" fill="#f7804c" stroke="#f7804c" stroke-width="0.8"/>
<polygon points="355,282.6 360.4,284.8 366.5,282.6 361.1,280.4" fill="#db382a" stroke="#db382a" stroke-width="0.8"/>
<polygon points="417.6,299.6 423.5,302 428.8,301.4 422.9,299.4" fill="#fba05a" stroke="#fba05a" stroke-width="0.8"/>
<polygon points="235.6,324.4 240.3,329 247.5,324.6 242.7,319.5" fill="#fffdbc" stroke="#fffdbc" stroke-width="0.8"/>
<polygon points="509.1,316 515.2,324.4 519.2,326.5 513,318.9" fill="#fff6b1" stroke="#fff6b1" stroke-width="0.8"/>
<polygon points="446.1,301.7 452.2,303.3 457.2,301 451.1,299.6" fill="#fba35c" stroke="#fba35c" stroke-width="0.8"/>
<polygon points="474.6,302.6 481,305 485.7,302.7 479.3,301" fill="#fdab60" stroke="#fdab60" stroke-width="0.8"/>
<polygon points="372,285.6 377.6,288.8 383.5,287.8 377.9,284.9" fill="#e44c34" stroke="#e44c34" stroke-width="0.8"/>
<polygon points="343.5,285.2 348.9,286.1 355,282.6 349.7,281.4" fill="#dc3b2c" stroke="#dc3b2c" stroke-width="0.8"/>
<polygon points="332.1,289.4 337.3,289.4 343.5,285.2 338.3,284.9" fill="#e54d34" stroke="#e54d34" stroke-width="0.8"/>
<polygon points="515.2,324.4 521.2,335.6 525.2,336.3 519.2,326.5" fill="#f0f9da" stroke="#f0f9da" stroke-width="0.8"/>
<polygon points="389.1,290.7 394.8,293.3 400.5,293.4 394.8,290.5" fill="#f16740" stroke="#f16740" stroke-width="0.8"/>
<polygon points="263.8,324 268.3,323.7 275.1,317.9 270.6,318.4" fill="#fff1aa" stroke="#fff1aa" stroke-width="0.8"/>
<polygon points="492.1,305.3 498.5,309.5 502.8,310 496.4,305.9" fill="#fdc072" stroke="#fdc072" stroke-width="0.8"/>
<polygon points="434.8,302.6 440.9,303.9 446.1,301.7 440,300.7" fill="#fca45c" stroke="#fca45c" stroke-width="0.8"/>
<polygon points="320.7,293.8 325.7,293.4 332.1,289.4 327,289.6" fill="#ef643f" stroke="#ef643f" stroke-width="0.8"/>
<polygon points="252.2,327.6 256.7,328.9 263.8,324 259.2,322.9" fill="#fffebe" stroke="#fffebe" stroke-width="0.8"/>
<polygon points="275.1,317.9 279.7,316.5 286.4,310.4 281.8,311.7" fill="#fedb8b" stroke="#fedb8b" stroke-width="0.8"/>
<polygon points="463.5,303.1 469.7,306.1 474.6,302.6 468.3,300.8" fill="#fca85e" stroke="#fca85e" stroke-width="0.8"/>
<polygon points="406.3,296.2 412.1,299.1 417.6,299.6 411.8,296.8" fill="#f88950" stroke="#f88950" stroke-width="0.8"/>
<polygon points="309.2,298.1 314.1,297.4 320.7,293.8 315.7,294" fill="#f67b4a" stroke="#f67b4a" stroke-width="0.8"/>
<polygon points="286.4,310.4 291.1,308.8 297.7,303.5 293,304.5" fill="#fdb96b" stroke="#fdb96b" stroke-width="0.8"/>
<polygon points="297.7,303.5 302.5,302.2 309.2,298.1 304.3,298.5" fill="#fa9756" stroke="#fa9756" stroke-width="0.8"/>
<polygon points="360.4,284.8 366,287.9 372,285.6 366.5,282.6" fill="#de3e2e" stroke="#de3e2e" stroke-width="0.8"/>
<polygon points="240.3,329 245,331.8 252.2,327.6 247.5,324.6" fill="#fafdc7" stroke="#fafdc7" stroke-width="0.8"/>
<polygon points="423.5,302 429.5,303.9 434.8,302.6 428.8,301.4" fill="#fba15b" stroke="#fba15b" stroke-width="0.8"/>
<polygon points="452.2,303.3 458.4,306.2 463.5,303.1 457.2,301" fill="#fca55d" stroke="#fca55d" stroke-width="0.8"/>
<polygon points="377.6,288.8 383.3,291.7 389.1,290.7 383.5,287.8" fill="#e95538" stroke="#e95538" stroke-width="0.8"/>
<polygon points="481,305 487.4,308.4 492.1,305.3 485.7,302.7" fill="#fdb063" stroke="#fdb063" stroke-width="0.8"/>
<polygon points="498.5,309.5 504.8,315.6 509.1,316 502.8,310" fill="#fed182" stroke="#fed182" stroke-width="0.8"/>
<polygon points="348.9,286.1 354.3,288.3 360.4,284.8 355,282.6" fill="#dd3c2c" stroke="#dd3c2c" stroke-width="0.8"/>
<polygon points="228.3,329.5 233,333.2 240.3,329 235.6,324.4" fill="#fbfdc7" stroke="#fbfdc7" stroke-width="0.8"/>
<polygon points="394.8,293.3 400.6,295.7 406.3,296.2 400.5,293.4" fill="#f46e43" stroke="#f46e43" stroke-width="0.8"/>
<polygon points="337.3,289.4 342.6,290.2 348.9,286.1 343.5,285.2" fill="#e14631" stroke="#e14631" stroke-width="0.8"/>
<polygon points="440.9,303.9 447.1,306 452.2,303.3 446.1,301.7" fill="#fba25c" stroke="#fba25c" stroke-width="0.8"/>
<polygon points="469.7,306.1 476,310 481,305 474.6,302.6" fill="#fdaf62" stroke="#fdaf62" stroke-width="0.8"/>
<polygon points="412.1,299.1 418.1,301.8 423.5,302 417.6,299.6" fill="#f99053" stroke="#f99053" stroke-width="0.8"/>
<polygon points="256.7,328.9 261.3,329 268.3,323.7 263.8,324" fill="#fffab7" stroke="#fffab7" stroke-width="0.8"/>
<polygon points="366,287.9 371.6,291.1 377.6,288.8 372,285.6" fill="#e24832" stroke="#e24832" stroke-width="0.8"/>
<polygon points="325.7,293.4 330.9,293.3 337.3,289.4 332.1,289.4" fill="#ea5839" stroke="#ea5839" stroke-width="0.8"/>
<polygon points="268.3,323.7 272.8,322.5 279.7,316.5 275.1,317.9" fill="#fee89c" stroke="#fee89c" stroke-width="0.8"/>
<polygon points="504.8,315.6 511.1,324.1 515.2,324.4 509.1,316" fill="#fee89d" stroke="#fee89d" stroke-width="0.8"/>
<polygon points="245,331.8 249.5,333.3 256.7,328.9 252.2,327.6" fill="#fafdc9" stroke="#fafdc9" stroke-width="0.8"/>
<polygon points="314.1,297.4 319.2,296.7 325.7,293.4 320.7,293.8" fill="#f46d43" stroke="#f46d43" stroke-width="0.8"/>
<polygon points="279.7,316.5 284.3,314.6 291.1,308.8 286.4,310.4" fill="#feca7b" stroke="#feca7b" stroke-width="0.8"/>
<polygon points="302.5,302.2 307.4,301 314.1,297.4 309.2,298.1" fill="#f7854e" stroke="#f7854e" stroke-width="0.8"/>
<polygon points="291.1,308.8 295.8,306.9 302.5,302.2 297.7,303.5" fill="#fca65d" stroke="#fca65d" stroke-width="0.8"/>
<polygon points="429.5,303.9 435.6,306 440.9,303.9 434.8,302.6" fill="#fba05b" stroke="#fba05b" stroke-width="0.8"/>
<polygon points="458.4,306.2 464.7,310.7 469.7,306.1 463.5,303.1" fill="#fdae61" stroke="#fdae61" stroke-width="0.8"/>
<polygon points="487.4,308.4 493.8,313 498.5,309.5 492.1,305.3" fill="#fdba6c" stroke="#fdba6c" stroke-width="0.8"/>
<polygon points="383.3,291.7 389,293.9 394.8,293.3 389.1,290.7" fill="#ec5c3b" stroke="#ec5c3b" stroke-width="0.8"/>
<polygon points="233,333.2 237.5,335.7 245,331.8 240.3,329" fill="#f6fbd0" stroke="#f6fbd0" stroke-width="0.8"/>
<polygon points="511.1,324.1 517.1,335.6 521.2,335.6 515.2,324.4" fill="#fcfec5" stroke="#fcfec5" stroke-width="0.8"/>
<polygon points="354.3,288.3 359.9,291.2 366,287.9 360.4,284.8" fill="#e0422f" stroke="#e0422f" stroke-width="0.8"/>
<polygon points="400.6,295.7 406.5,298.3 412.1,299.1 406.3,296.2" fill="#f57547" stroke="#f57547" stroke-width="0.8"/>
<polygon points="476,310 482.4,314.7 487.4,308.4 481,305" fill="#fdb96b" stroke="#fdb96b" stroke-width="0.8"/>
<polygon points="447.1,306 453.3,309.8 458.4,306.2 452.2,303.3" fill="#fca85e" stroke="#fca85e" stroke-width="0.8"/>
<polygon points="220.9,334.5 225.4,337.2 233,333.2 228.3,329.5" fill="#f5fbd2" stroke="#f5fbd2" stroke-width="0.8"/>
<polygon points="418.1,301.8 424.1,304.7 429.5,303.9 423.5,302" fill="#fa9555" stroke="#fa9555" stroke-width="0.8"/>
<polygon points="342.6,290.2 348.1,292.2 354.3,288.3 348.9,286.1" fill="#e14531" stroke="#e14531" stroke-width="0.8"/>
<polygon points="371.6,291.1 377.3,293.9 383.3,291.7 377.6,288.8" fill="#e75136" stroke="#e75136" stroke-width="0.8"/>
<polygon points="493.8,313 500.2,319 504.8,315.6 498.5,309.5" fill="#fecc7d" stroke="#fecc7d" stroke-width="0.8"/>
<polygon points="464.7,310.7 470.9,316.3 476,310 469.7,306.1" fill="#fdbb6d" stroke="#fdbb6d" stroke-width="0.8"/>
<polygon points="330.9,293.3 336.2,294 342.6,290.2 337.3,289.4" fill="#e65036" stroke="#e65036" stroke-width="0.8"/>
<polygon points="261.3,329 265.8,328.4 272.8,322.5 268.3,323.7" fill="#fff2ab" stroke="#fff2ab" stroke-width="0.8"/>
<polygon points="249.5,333.3 254.1,333.9 261.3,329 256.7,328.9" fill="#fdfec2" stroke="#fdfec2" stroke-width="0.8"/>
<polygon points="435.6,306 441.8,308.9 447.1,306 440.9,303.9" fill="#fba25c" stroke="#fba25c" stroke-width="0.8"/>
<polygon points="389,293.9 394.8,295.9 400.6,295.7 394.8,293.3" fill="#ee603d" stroke="#ee603d" stroke-width="0.8"/>
<polygon points="272.8,322.5 277.4,320.9 284.3,314.6 279.7,316.5" fill="#fedc8c" stroke="#fedc8c" stroke-width="0.8"/>
<polygon points="319.2,296.7 324.3,296.4 330.9,293.3 325.7,293.4" fill="#ee603d" stroke="#ee603d" stroke-width="0.8"/>
<polygon points="359.9,291.2 365.5,294.4 371.6,291.1 366,287.9" fill="#e44b33" stroke="#e44b33" stroke-width="0.8"/>
<polygon points="237.5,335.7 242.1,337.3 249.5,333.3 245,331.8" fill="#f5fbd1" stroke="#f5fbd1" stroke-width="0.8"/>
<polygon points="284.3,314.6 289,312.7 295.8,306.9 291.1,308.8" fill="#fdb769" stroke="#fdb769" stroke-width="0.8"/>
<polygon points="307.4,301 312.5,300 319.2,296.7 314.1,297.4" fill="#f57446" stroke="#f57446" stroke-width="0.8"/>
<polygon points="482.4,314.7 488.8,320.1 493.8,313 487.4,308.4" fill="#fdc778" stroke="#fdc778" stroke-width="0.8"/>
<polygon points="406.5,298.3 412.5,301.4 418.1,301.8 412.1,299.1" fill="#f67c4a" stroke="#f67c4a" stroke-width="0.8"/>
<polygon points="295.8,306.9 300.7,305.4 307.4,301 302.5,302.2" fill="#f99154" stroke="#f99154" stroke-width="0.8"/>
<polygon points="453.3,309.8 459.5,315.5 464.7,310.7 458.4,306.2" fill="#fdb669" stroke="#fdb669" stroke-width="0.8"/>
<polygon points="500.2,319 506.5,326.9 511.1,324.1 504.8,315.6" fill="#fee496" stroke="#fee496" stroke-width="0.8"/>
<polygon points="225.4,337.2 229.9,339.3 237.5,335.7 233,333.2" fill="#f2fad6" stroke="#f2fad6" stroke-width="0.8"/>
<polygon points="424.1,304.7 430.2,307.9 435.6,306 429.5,303.9" fill="#fa9a58" stroke="#fa9a58" stroke-width="0.8"/>
<polygon points="348.1,292.2 353.6,295.1 359.9,291.2 354.3,288.3" fill="#e34a33" stroke="#e34a33" stroke-width="0.8"/>
<polygon points="377.3,293.9 383,295.8 389,293.9 383.3,291.7" fill="#e95638" stroke="#e95638" stroke-width="0.8"/>
<polygon points="470.9,316.3 477.2,322.4 482.4,314.7 476,310" fill="#fecc7d" stroke="#fecc7d" stroke-width="0.8"/>
<polygon points="506.5,326.9 512.8,336.7 517.1,335.6 511.1,324.1" fill="#fffcbb" stroke="#fffcbb" stroke-width="0.8"/>
<polygon points="213.3,339.5 217.6,341.2 225.4,337.2 220.9,334.5" fill="#eff9dc" stroke="#eff9dc" stroke-width="0.8"/>
<polygon points="336.2,294 341.7,295.9 348.1,292.2 342.6,290.2" fill="#e54e35" stroke="#e54e35" stroke-width="0.8"/>
<polygon points="441.8,308.9 448,313.3 453.3,309.8 447.1,306" fill="#fdad60" stroke="#fdad60" stroke-width="0.8"/>
<polygon points="488.8,320.1 495.2,326 500.2,319 493.8,313" fill="#fed98a" stroke="#fed98a" stroke-width="0.8"/>
<polygon points="394.8,295.9 400.8,298.2 406.5,298.3 400.6,295.7" fill="#f0643f" stroke="#f0643f" stroke-width="0.8"/>
<polygon points="365.5,294.4 371.2,297 377.3,293.9 371.6,291.1" fill="#e85337" stroke="#e85337" stroke-width="0.8"/>
<polygon points="459.5,315.5 465.8,322.2 470.9,316.3 464.7,310.7" fill="#feca7b" stroke="#feca7b" stroke-width="0.8"/>
<polygon points="254.1,333.9 258.6,334 265.8,328.4 261.3,329" fill="#fffbb8" stroke="#fffbb8" stroke-width="0.8"/>
<polygon points="412.5,301.4 418.6,305.3 424.1,304.7 418.1,301.8" fill="#f7864e" stroke="#f7864e" stroke-width="0.8"/>
<polygon points="265.8,328.4 270.4,327.5 277.4,320.9 272.8,322.5" fill="#fee89d" stroke="#fee89d" stroke-width="0.8"/>
<polygon points="324.3,296.4 329.6,297 336.2,294 330.9,293.3" fill="#ea5739" stroke="#ea5739" stroke-width="0.8"/>
<polygon points="242.1,337.3 246.7,338.4 254.1,333.9 249.5,333.3" fill="#f8fccc" stroke="#f8fccc" stroke-width="0.8"/>
<polygon points="477.2,322.4 483.6,328.5 488.8,320.1 482.4,314.7" fill="#fedf8f" stroke="#fedf8f" stroke-width="0.8"/>
<polygon points="277.4,320.9 282.1,319.5 289,312.7 284.3,314.6" fill="#fec97b" stroke="#fec97b" stroke-width="0.8"/>
<polygon points="312.5,300 317.6,299.6 324.3,296.4 319.2,296.7" fill="#f0653f" stroke="#f0653f" stroke-width="0.8"/>
<polygon points="353.6,295.1 359.2,298.2 365.5,294.4 359.9,291.2" fill="#e75337" stroke="#e75337" stroke-width="0.8"/>
<polygon points="430.2,307.9 436.4,311.7 441.8,308.9 435.6,306" fill="#fba25b" stroke="#fba25b" stroke-width="0.8"/>
<polygon points="289,312.7 293.8,311.3 300.7,305.4 295.8,306.9" fill="#fba35c" stroke="#fba35c" stroke-width="0.8"/>
<polygon points="229.9,339.3 234.4,341 242.1,337.3 237.5,335.7" fill="#f2fad6" stroke="#f2fad6" stroke-width="0.8"/>
<polygon points="300.7,305.4 305.7,304.3 312.5,300 307.4,301" fill="#f67d4a" stroke="#f67d4a" stroke-width="0.8"/>
<polygon points="383,295.8 388.9,297.3 394.8,295.9 389,293.9" fill="#ea5739" stroke="#ea5739" stroke-width="0.8"/>
<polygon points="495.2,326 501.7,332.4 506.5,326.9 500.2,319" fill="#feeaa0" stroke="#feeaa0" stroke-width="0.8"/>
<polygon points="448,313.3 454.3,319.4 459.5,315.5 453.3,309.8" fill="#fdbd6f" stroke="#fdbd6f" stroke-width="0.8"/>
<polygon points="465.8,322.2 472.1,329.2 477.2,322.4 470.9,316.3" fill="#fee090" stroke="#fee090" stroke-width="0.8"/>
<polygon points="341.7,295.9 347.2,298.8 353.6,295.1 348.1,292.2" fill="#e85337" stroke="#e85337" stroke-width="0.8"/>
<polygon points="217.6,341.2 222.1,342.8 229.9,339.3 225.4,337.2" fill="#eff9dc" stroke="#eff9dc" stroke-width="0.8"/>
<polygon points="400.8,298.2 406.8,301.5 412.5,301.4 406.5,298.3" fill="#f36a42" stroke="#f36a42" stroke-width="0.8"/>
<polygon points="371.2,297 377,298.6 383,295.8 377.3,293.9" fill="#e95639" stroke="#e95639" stroke-width="0.8"/>
<polygon points="483.6,328.5 490.1,334.2 495.2,326 488.8,320.1" fill="#feeba1" stroke="#feeba1" stroke-width="0.8"/>
<polygon points="418.6,305.3 424.7,309.6 430.2,307.9 424.1,304.7" fill="#f99154" stroke="#f99154" stroke-width="0.8"/>
<polygon points="205.5,344.3 209.7,345.1 217.6,341.2 213.3,339.5" fill="#eaf7e5" stroke="#eaf7e5" stroke-width="0.8"/>
<polygon points="501.7,332.4 508.3,339 512.8,336.7 506.5,326.9" fill="#fffdbb" stroke="#fffdbb" stroke-width="0.8"/>
<polygon points="329.6,297 335.1,299.1 341.7,295.9 336.2,294" fill="#e85538" stroke="#e85538" stroke-width="0.8"/>
<polygon points="436.4,311.7 442.7,316.5 448,313.3 441.8,308.9" fill="#fdb063" stroke="#fdb063" stroke-width="0.8"/>
<polygon points="454.3,319.4 460.6,326.3 465.8,322.2 459.5,315.5" fill="#fed484" stroke="#fed484" stroke-width="0.8"/>
<polygon points="258.6,334 263.3,334.1 270.4,327.5 265.8,328.4" fill="#fff3ad" stroke="#fff3ad" stroke-width="0.8"/>
<polygon points="472.1,329.2 478.5,335.8 483.6,328.5 477.2,322.4" fill="#feefa6" stroke="#feefa6" stroke-width="0.8"/>
<polygon points="359.2,298.2 365,300.7 371.2,297 365.5,294.4" fill="#eb593a" stroke="#eb593a" stroke-width="0.8"/>
<polygon points="246.7,338.4 251.3,339.2 258.6,334 254.1,333.9" fill="#fcfec4" stroke="#fcfec4" stroke-width="0.8"/>
<polygon points="270.4,327.5 275.2,327 282.1,319.5 277.4,320.9" fill="#fede8e" stroke="#fede8e" stroke-width="0.8"/>
<polygon points="317.6,299.6 322.9,300.4 329.6,297 324.3,296.4" fill="#ec5c3b" stroke="#ec5c3b" stroke-width="0.8"/>
<polygon points="388.9,297.3 394.9,299.4 400.8,298.2 394.8,295.9" fill="#ea593a" stroke="#ea593a" stroke-width="0.8"/>
<polygon points="234.4,341 239,342.5 246.7,338.4 242.1,337.3" fill="#f4fbd3" stroke="#f4fbd3" stroke-width="0.8"/>
<polygon points="282.1,319.5 287,318.8 293.8,311.3 289,312.7" fill="#fdb96b" stroke="#fdb96b" stroke-width="0.8"/>
<polygon points="490.1,334.2 496.8,338.9 501.7,332.4 495.2,326" fill="#fff7b3" stroke="#fff7b3" stroke-width="0.8"/>
<polygon points="305.7,304.3 310.8,304.1 317.6,299.6 312.5,300" fill="#f46d43" stroke="#f46d43" stroke-width="0.8"/>
<polygon points="293.8,311.3 298.8,310.6 305.7,304.3 300.7,305.4" fill="#f98f53" stroke="#f98f53" stroke-width="0.8"/>
<polygon points="347.2,298.8 352.9,301.9 359.2,298.2 353.6,295.1" fill="#eb5b3b" stroke="#eb5b3b" stroke-width="0.8"/>
<polygon points="406.8,301.5 412.9,306 418.6,305.3 412.5,301.4" fill="#f57748" stroke="#f57748" stroke-width="0.8"/>
<polygon points="424.7,309.6 430.9,314.4 436.4,311.7 430.2,307.9" fill="#fba05a" stroke="#fba05a" stroke-width="0.8"/>
<polygon points="222.1,342.8 226.6,344.4 234.4,341 229.9,339.3" fill="#f0f9da" stroke="#f0f9da" stroke-width="0.8"/>
<polygon points="460.6,326.3 466.9,333.4 472.1,329.2 465.8,322.2" fill="#fee89c" stroke="#fee89c" stroke-width="0.8"/>
<polygon points="377,298.6 382.8,299.9 388.9,297.3 383,295.8" fill="#e95638" stroke="#e95638" stroke-width="0.8"/>
<polygon points="442.7,316.5 449,322.3 454.3,319.4 448,313.3" fill="#fdc173" stroke="#fdc173" stroke-width="0.8"/>
<polygon points="478.5,335.8 485,341.3 490.1,334.2 483.6,328.5" fill="#fffbb9" stroke="#fffbb9" stroke-width="0.8"/>
<polygon points="335.1,299.1 340.7,302.2 347.2,298.8 341.7,295.9" fill="#eb593a" stroke="#eb593a" stroke-width="0.8"/>
<polygon points="209.7,345.1 214.1,346.3 222.1,342.8 217.6,341.2" fill="#edf8e0" stroke="#edf8e0" stroke-width="0.8"/>
<polygon points="365,300.7 370.7,302.1 377,298.6 371.2,297" fill="#ec5b3b" stroke="#ec5b3b" stroke-width="0.8"/>
<polygon points="496.8,338.9 503.6,342.1 508.3,339 501.7,332.4" fill="#fdfec3" stroke="#fdfec3" stroke-width="0.8"/>
<polygon points="394.9,299.4 400.9,302.6 406.8,301.5 400.8,298.2" fill="#ed5f3c" stroke="#ed5f3c" stroke-width="0.8"/>
<polygon points="251.3,339.2 256,340.2 263.3,334.1 258.6,334" fill="#fffdbb" stroke="#fffdbb" stroke-width="0.8"/>
<polygon points="263.3,334.1 268.1,334.6 275.2,327 270.4,327.5" fill="#feeca2" stroke="#feeca2" stroke-width="0.8"/>
<polygon points="466.9,333.4 473.4,339.9 478.5,335.8 472.1,329.2" fill="#fff7b3" stroke="#fff7b3" stroke-width="0.8"/>
<polygon points="412.9,306 419.1,311.3 424.7,309.6 418.6,305.3" fill="#f88850" stroke="#f88850" stroke-width="0.8"/>
<polygon points="322.9,300.4 328.4,302.6 335.1,299.1 329.6,297" fill="#eb5a3a" stroke="#eb5a3a" stroke-width="0.8"/>
<polygon points="275.2,327 280.1,327.3 287,318.8 282.1,319.5" fill="#fed182" stroke="#fed182" stroke-width="0.8"/>
<polygon points="239,342.5 243.7,344 251.3,339.2 246.7,338.4" fill="#f7fcce" stroke="#f7fcce" stroke-width="0.8"/>
<polygon points="430.9,314.4 437.2,319.4 442.7,316.5 436.4,311.7" fill="#fdb164" stroke="#fdb164" stroke-width="0.8"/>
<polygon points="352.9,301.9 358.6,304.4 365,300.7 359.2,298.2" fill="#ee613e" stroke="#ee613e" stroke-width="0.8"/>
<polygon points="449,322.3 455.4,328.5 460.6,326.3 454.3,319.4" fill="#fed687" stroke="#fed687" stroke-width="0.8"/>
<polygon points="287,318.8 292,319 298.8,310.6 293.8,311.3" fill="#fdac60" stroke="#fdac60" stroke-width="0.8"/>
<polygon points="485,341.3 491.7,344.8 496.8,338.9 490.1,334.2" fill="#fafdc8" stroke="#fafdc8" stroke-width="0.8"/>
<polygon points="310.8,304.1 316.1,305 322.9,300.4 317.6,299.6" fill="#f0643f" stroke="#f0643f" stroke-width="0.8"/>
<polygon points="298.8,310.6 304,310.8 310.8,304.1 305.7,304.3" fill="#f7804c" stroke="#f7804c" stroke-width="0.8"/>
<polygon points="226.6,344.4 231.2,346.2 239,342.5 234.4,341" fill="#f2fad7" stroke="#f2fad7" stroke-width="0.8"/>
<polygon points="382.8,299.9 388.8,301.6 394.9,299.4 388.9,297.3" fill="#e95538" stroke="#e95538" stroke-width="0.8"/>
<polygon points="340.7,302.2 346.3,305.5 352.9,301.9 347.2,298.8" fill="#ee613e" stroke="#ee613e" stroke-width="0.8"/>
<polygon points="473.4,339.9 480,345.1 485,341.3 478.5,335.8" fill="#fbfdc7" stroke="#fbfdc7" stroke-width="0.8"/>
<polygon points="214.1,346.3 218.5,347.8 226.6,344.4 222.1,342.8" fill="#eff9dc" stroke="#eff9dc" stroke-width="0.8"/>
<polygon points="400.9,302.6 407.1,307.4 412.9,306 406.8,301.5" fill="#f36c42" stroke="#f36c42" stroke-width="0.8"/>
<polygon points="455.4,328.5 461.8,334.9 466.9,333.4 460.6,326.3" fill="#fee89d" stroke="#fee89d" stroke-width="0.8"/>
<polygon points="419.1,311.3 425.3,316.7 430.9,314.4 424.7,309.6" fill="#fb9c59" stroke="#fb9c59" stroke-width="0.8"/>
<polygon points="370.7,302.1 376.6,303.2 382.8,299.9 377,298.6" fill="#ea593a" stroke="#ea593a" stroke-width="0.8"/>
<polygon points="437.2,319.4 443.6,324.5 449,322.3 442.7,316.5" fill="#fdc173" stroke="#fdc173" stroke-width="0.8"/>
<polygon points="328.4,302.6 334,305.8 340.7,302.2 335.1,299.1" fill="#ed5f3c" stroke="#ed5f3c" stroke-width="0.8"/>
<polygon points="256,340.2 260.9,341.7 268.1,334.6 263.3,334.1" fill="#fff9b5" stroke="#fff9b5" stroke-width="0.8"/>
<polygon points="268.1,334.6 273.1,336 280.1,327.3 275.2,327" fill="#fee79b" stroke="#fee79b" stroke-width="0.8"/>
<polygon points="358.6,304.4 364.4,305.8 370.7,302.1 365,300.7" fill="#ef623e" stroke="#ef623e" stroke-width="0.8"/>
<polygon points="243.7,344 248.5,345.7 256,340.2 251.3,339.2" fill="#fafdc9" stroke="#fafdc9" stroke-width="0.8"/>
<polygon points="491.7,344.8 498.8,345.6 503.6,342.1 496.8,338.9" fill="#f7fccd" stroke="#f7fccd" stroke-width="0.8"/>
<polygon points="280.1,327.3 285.2,328.5 292,319 287,318.8" fill="#fec97a" stroke="#fec97a" stroke-width="0.8"/>
<polygon points="316.1,305 321.6,307.2 328.4,302.6 322.9,300.4" fill="#ef623e" stroke="#ef623e" stroke-width="0.8"/>
<polygon points="292,319 297.2,319.9 304,310.8 298.8,310.6" fill="#fba05b" stroke="#fba05b" stroke-width="0.8"/>
<polygon points="388.8,301.6 394.9,304.7 400.9,302.6 394.9,299.4" fill="#eb593a" stroke="#eb593a" stroke-width="0.8"/>
<polygon points="461.8,334.9 468.3,340.8 473.4,339.9 466.9,333.4" fill="#fff6b2" stroke="#fff6b2" stroke-width="0.8"/>
<polygon points="231.2,346.2 235.9,348.1 243.7,344 239,342.5" fill="#f3fbd4" stroke="#f3fbd4" stroke-width="0.8"/>
<polygon points="346.3,305.5 352.1,308.1 358.6,304.4 352.9,301.9" fill="#f26841" stroke="#f26841" stroke-width="0.8"/>
<polygon points="304,310.8 309.3,312 316.1,305 310.8,304.1" fill="#f57848" stroke="#f57848" stroke-width="0.8"/>
<polygon points="480,345.1 486.8,348.4 491.7,344.8 485,341.3" fill="#f4fbd4" stroke="#f4fbd4" stroke-width="0.8"/>
<polygon points="407.1,307.4 413.3,313 419.1,311.3 412.9,306" fill="#f7804c" stroke="#f7804c" stroke-width="0.8"/>
<polygon points="425.3,316.7 431.6,321.7 437.2,319.4 430.9,314.4" fill="#fdb063" stroke="#fdb063" stroke-width="0.8"/>
<polygon points="443.6,324.5 450.1,329.6 455.4,328.5 449,322.3" fill="#fed384" stroke="#fed384" stroke-width="0.8"/>
<polygon points="218.5,347.8 223.1,349.6 231.2,346.2 226.6,344.4" fill="#f1f9da" stroke="#f1f9da" stroke-width="0.8"/>
<polygon points="376.6,303.2 382.6,304.7 388.8,301.6 382.8,299.9" fill="#e95639" stroke="#e95639" stroke-width="0.8"/>
<polygon points="334,305.8 339.7,309.3 346.3,305.5 340.7,302.2" fill="#f16740" stroke="#f16740" stroke-width="0.8"/>
<polygon points="260.9,341.7 265.9,344.1 273.1,336 268.1,334.6" fill="#fff6b2" stroke="#fff6b2" stroke-width="0.8"/>
<polygon points="468.3,340.8 475,346 480,345.1 473.4,339.9" fill="#fdfec4" stroke="#fdfec4" stroke-width="0.8"/>
<polygon points="273.1,336 278.2,338.2 285.2,328.5 280.1,327.3" fill="#fee597" stroke="#fee597" stroke-width="0.8"/>
<polygon points="364.4,305.8 370.3,306.8 376.6,303.2 370.7,302.1" fill="#ed5f3c" stroke="#ed5f3c" stroke-width="0.8"/>
<polygon points="248.5,345.7 253.4,348 260.9,341.7 256,340.2" fill="#fbfec6" stroke="#fbfec6" stroke-width="0.8"/>
<polygon points="413.3,313 419.5,318.7 425.3,316.7 419.1,311.3" fill="#fa9757" stroke="#fa9757" stroke-width="0.8"/>
<polygon points="394.9,304.7 401.1,309.4 407.1,307.4 400.9,302.6" fill="#f16640" stroke="#f16640" stroke-width="0.8"/>
<polygon points="321.6,307.2 327.2,310.5 334,305.8 328.4,302.6" fill="#f26841" stroke="#f26841" stroke-width="0.8"/>
<polygon points="285.2,328.5 290.4,330.2 297.2,319.9 292,319" fill="#fdc475" stroke="#fdc475" stroke-width="0.8"/>
<polygon points="450.1,329.6 456.6,334.9 461.8,334.9 455.4,328.5" fill="#fee395" stroke="#fee395" stroke-width="0.8"/>
<polygon points="431.6,321.7 438.1,326.1 443.6,324.5 437.2,319.4" fill="#fdbe70" stroke="#fdbe70" stroke-width="0.8"/>
<polygon points="352.1,308.1 357.9,309.6 364.4,305.8 358.6,304.4" fill="#f26941" stroke="#f26941" stroke-width="0.8"/>
<polygon points="235.9,348.1 240.7,350.3 248.5,345.7 243.7,344" fill="#f4fbd2" stroke="#f4fbd2" stroke-width="0.8"/>
<polygon points="297.2,319.9 302.5,321.3 309.3,312 304,310.8" fill="#fa9a58" stroke="#fa9a58" stroke-width="0.8"/>
<polygon points="309.3,312 314.7,314.1 321.6,307.2 316.1,305" fill="#f57647" stroke="#f57647" stroke-width="0.8"/>
<polygon points="486.8,348.4 493.9,348.9 498.8,345.6 491.7,344.8" fill="#f4fbd3" stroke="#f4fbd3" stroke-width="0.8"/>
<polygon points="339.7,309.3 345.4,312.1 352.1,308.1 346.3,305.5" fill="#f46f44" stroke="#f46f44" stroke-width="0.8"/>
<polygon points="223.1,349.6 227.8,351.5 235.9,348.1 231.2,346.2" fill="#f2fad7" stroke="#f2fad7" stroke-width="0.8"/>
<polygon points="382.6,304.7 388.7,307.5 394.9,304.7 388.8,301.6" fill="#ea593a" stroke="#ea593a" stroke-width="0.8"/>
<polygon points="475,346 481.8,349.9 486.8,348.4 480,345.1" fill="#f6fbd0" stroke="#f6fbd0" stroke-width="0.8"/>
<polygon points="419.5,318.7 425.9,323.6 431.6,321.7 425.3,316.7" fill="#fdac60" stroke="#fdac60" stroke-width="0.8"/>
<polygon points="401.1,309.4 407.3,315 413.3,313 407.1,307.4" fill="#f67b49" stroke="#f67b49" stroke-width="0.8"/>
<polygon points="456.6,334.9 463.2,340.1 468.3,340.8 461.8,334.9" fill="#feeea6" stroke="#feeea6" stroke-width="0.8"/>
<polygon points="265.9,344.1 271.1,347.2 278.2,338.2 273.1,336" fill="#fff7b3" stroke="#fff7b3" stroke-width="0.8"/>
<polygon points="438.1,326.1 444.6,330.3 450.1,329.6 443.6,324.5" fill="#fecc7d" stroke="#fecc7d" stroke-width="0.8"/>
<polygon points="327.2,310.5 332.9,313.9 339.7,309.3 334,305.8" fill="#f57145" stroke="#f57145" stroke-width="0.8"/>
<polygon points="278.2,338.2 283.4,340.7 290.4,330.2 285.2,328.5" fill="#fee496" stroke="#fee496" stroke-width="0.8"/>
<polygon points="370.3,306.8 376.3,308.1 382.6,304.7 376.6,303.2" fill="#eb5b3b" stroke="#eb5b3b" stroke-width="0.8"/>
<polygon points="253.4,348 258.5,350.9 265.9,344.1 260.9,341.7" fill="#fbfdc6" stroke="#fbfdc6" stroke-width="0.8"/>
<polygon points="290.4,330.2 295.6,331.9 302.5,321.3 297.2,319.9" fill="#fdc173" stroke="#fdc173" stroke-width="0.8"/>
<polygon points="314.7,314.1 320.3,316.9 327.2,310.5 321.6,307.2" fill="#f67a49" stroke="#f67a49" stroke-width="0.8"/>
<polygon points="240.7,350.3 245.6,352.8 253.4,348 248.5,345.7" fill="#f5fbd2" stroke="#f5fbd2" stroke-width="0.8"/>
<polygon points="357.9,309.6 363.8,310.6 370.3,306.8 364.4,305.8" fill="#f0653f" stroke="#f0653f" stroke-width="0.8"/>
<polygon points="302.5,321.3 307.9,323.1 314.7,314.1 309.3,312" fill="#fa9857" stroke="#fa9857" stroke-width="0.8"/>
<polygon points="388.7,307.5 394.9,312 401.1,309.4 394.9,304.7" fill="#f0643f" stroke="#f0643f" stroke-width="0.8"/>
<polygon points="407.3,315 413.6,320.7 419.5,318.7 413.3,313" fill="#f99254" stroke="#f99254" stroke-width="0.8"/>
<polygon points="345.4,312.1 351.2,313.8 357.9,309.6 352.1,308.1" fill="#f47145" stroke="#f47145" stroke-width="0.8"/>
<polygon points="463.2,340.1 469.9,345.4 475,346 468.3,340.8" fill="#fff8b5" stroke="#fff8b5" stroke-width="0.8"/>
<polygon points="425.9,323.6 432.4,327.6 438.1,326.1 431.6,321.7" fill="#fdb96c" stroke="#fdb96c" stroke-width="0.8"/>
<polygon points="227.8,351.5 232.6,353.5 240.7,350.3 235.9,348.1" fill="#f2fad6" stroke="#f2fad6" stroke-width="0.8"/>
<polygon points="444.6,330.3 451.2,334.6 456.6,334.9 450.1,329.6" fill="#fed989" stroke="#fed989" stroke-width="0.8"/>
<polygon points="481.8,349.9 488.8,352.2 493.9,348.9 486.8,348.4" fill="#f5fbd2" stroke="#f5fbd2" stroke-width="0.8"/>
<polygon points="332.9,313.9 338.6,316.9 345.4,312.1 339.7,309.3" fill="#f67948" stroke="#f67948" stroke-width="0.8"/>
<polygon points="271.1,347.2 276.3,350.2 283.4,340.7 278.2,338.2" fill="#fff8b5" stroke="#fff8b5" stroke-width="0.8"/>
<polygon points="258.5,350.9 263.6,354.4 271.1,347.2 265.9,344.1" fill="#f9fdca" stroke="#f9fdca" stroke-width="0.8"/>
<polygon points="283.4,340.7 288.7,342.7 295.6,331.9 290.4,330.2" fill="#fee496" stroke="#fee496" stroke-width="0.8"/>
<polygon points="376.3,308.1 382.4,310.9 388.7,307.5 382.6,304.7" fill="#ec5c3b" stroke="#ec5c3b" stroke-width="0.8"/>
<polygon points="320.3,316.9 326,319.9 332.9,313.9 327.2,310.5" fill="#f7824d" stroke="#f7824d" stroke-width="0.8"/>
<polygon points="295.6,331.9 301,333.3 307.9,323.1 302.5,321.3" fill="#fdbe70" stroke="#fdbe70" stroke-width="0.8"/>
<polygon points="245.6,352.8 250.6,355.7 258.5,350.9 253.4,348" fill="#f3fbd4" stroke="#f3fbd4" stroke-width="0.8"/>
<polygon points="394.9,312 401.2,317.5 407.3,315 401.1,309.4" fill="#f57848" stroke="#f57848" stroke-width="0.8"/>
<polygon points="413.6,320.7 420.1,325.5 425.9,323.6 419.5,318.7" fill="#fca75e" stroke="#fca75e" stroke-width="0.8"/>
<polygon points="307.9,323.1 313.4,325.1 320.3,316.9 314.7,314.1" fill="#fa9957" stroke="#fa9957" stroke-width="0.8"/>
<polygon points="363.8,310.6 369.8,311.9 376.3,308.1 370.3,306.8" fill="#ee613d" stroke="#ee613d" stroke-width="0.8"/>
<polygon points="469.9,345.4 476.8,350.5 481.8,349.9 475,346" fill="#fefec2" stroke="#fefec2" stroke-width="0.8"/>
<polygon points="432.4,327.6 439,331.3 444.6,330.3 438.1,326.1" fill="#fdc375" stroke="#fdc375" stroke-width="0.8"/>
<polygon points="451.2,334.6 458,339.3 463.2,340.1 456.6,334.9" fill="#fee496" stroke="#fee496" stroke-width="0.8"/>
<polygon points="351.2,313.8 357.1,314.9 363.8,310.6 357.9,309.6" fill="#f46d43" stroke="#f46d43" stroke-width="0.8"/>
<polygon points="232.6,353.5 237.4,355.6 245.6,352.8 240.7,350.3" fill="#f3fad6" stroke="#f3fad6" stroke-width="0.8"/>
<polygon points="338.6,316.9 344.5,318.8 351.2,313.8 345.4,312.1" fill="#f67b4a" stroke="#f67b4a" stroke-width="0.8"/>
<polygon points="276.3,350.2 281.6,352.5 288.7,342.7 283.4,340.7" fill="#fff9b6" stroke="#fff9b6" stroke-width="0.8"/>
<polygon points="382.4,310.9 388.6,315.3 394.9,312 388.7,307.5" fill="#f16640" stroke="#f16640" stroke-width="0.8"/>
<polygon points="263.6,354.4 268.9,357.6 276.3,350.2 271.1,347.2" fill="#f6fccf" stroke="#f6fccf" stroke-width="0.8"/>
<polygon points="401.2,317.5 407.6,323.1 413.6,320.7 407.3,315" fill="#f98e52" stroke="#f98e52" stroke-width="0.8"/>
<polygon points="288.7,342.7 294,343.7 301,333.3 295.6,331.9" fill="#fee293" stroke="#fee293" stroke-width="0.8"/>
<polygon points="326,319.9 331.8,322.8 338.6,316.9 332.9,313.9" fill="#f88950" stroke="#f88950" stroke-width="0.8"/>
<polygon points="420.1,325.5 426.6,329.3 432.4,327.6 425.9,323.6" fill="#fdb466" stroke="#fdb466" stroke-width="0.8"/>
<polygon points="250.6,355.7 255.8,358.9 263.6,354.4 258.5,350.9" fill="#f1fad9" stroke="#f1fad9" stroke-width="0.8"/>
<polygon points="301,333.3 306.4,334.4 313.4,325.1 307.9,323.1" fill="#fdbc6e" stroke="#fdbc6e" stroke-width="0.8"/>
<polygon points="476.8,350.5 483.7,355.6 488.8,352.2 481.8,349.9" fill="#f8fccc" stroke="#f8fccc" stroke-width="0.8"/>
<polygon points="313.4,325.1 319,327.4 326,319.9 320.3,316.9" fill="#fb9c59" stroke="#fb9c59" stroke-width="0.8"/>
<polygon points="458,339.3 464.7,344.8 469.9,345.4 463.2,340.1" fill="#feeda3" stroke="#feeda3" stroke-width="0.8"/>
<polygon points="439,331.3 445.7,335.1 451.2,334.6 444.6,330.3" fill="#fecc7e" stroke="#fecc7e" stroke-width="0.8"/>
<polygon points="369.8,311.9 375.9,314.8 382.4,310.9 376.3,308.1" fill="#ee613e" stroke="#ee613e" stroke-width="0.8"/>
<polygon points="237.4,355.6 242.4,357.6 250.6,355.7 245.6,352.8" fill="#f3fad6" stroke="#f3fad6" stroke-width="0.8"/>
<polygon points="388.6,315.3 395,320.8 401.2,317.5 394.9,312" fill="#f67848" stroke="#f67848" stroke-width="0.8"/>
<polygon points="357.1,314.9 363.2,316.5 369.8,311.9 363.8,310.6" fill="#f26941" stroke="#f26941" stroke-width="0.8"/>
<polygon points="407.6,323.1 414,327.8 420.1,325.5 413.6,320.7" fill="#fba25b" stroke="#fba25b" stroke-width="0.8"/>
<polygon points="268.9,357.6 274.1,360.1 281.6,352.5 276.3,350.2" fill="#f5fbd2" stroke="#f5fbd2" stroke-width="0.8"/>
<polygon points="344.5,318.8 350.4,320.4 357.1,314.9 351.2,313.8" fill="#f67948" stroke="#f67948" stroke-width="0.8"/>
<polygon points="281.6,352.5 286.8,353.3 294,343.7 288.7,342.7" fill="#fff7b3" stroke="#fff7b3" stroke-width="0.8"/>
<polygon points="426.6,329.3 433.2,332.8 439,331.3 432.4,327.6" fill="#fdbc6e" stroke="#fdbc6e" stroke-width="0.8"/>
<polygon points="464.7,344.8 471.5,351.5 476.8,350.5 469.9,345.4" fill="#fff7b3" stroke="#fff7b3" stroke-width="0.8"/>
<polygon points="331.8,322.8 337.6,325.1 344.5,318.8 338.6,316.9" fill="#f88c51" stroke="#f88c51" stroke-width="0.8"/>
<polygon points="255.8,358.9 261,361.9 268.9,357.6 263.6,354.4" fill="#eef9de" stroke="#eef9de" stroke-width="0.8"/>
<polygon points="294,343.7 299.4,344.1 306.4,334.4 301,333.3" fill="#fedd8d" stroke="#fedd8d" stroke-width="0.8"/>
<polygon points="445.7,335.1 452.5,339.8 458,339.3 451.2,334.6" fill="#fed788" stroke="#fed788" stroke-width="0.8"/>
<polygon points="319,327.4 324.8,329.9 331.8,322.8 326,319.9" fill="#fba05a" stroke="#fba05a" stroke-width="0.8"/>
<polygon points="375.9,314.8 382.2,319.4 388.6,315.3 382.4,310.9" fill="#f36b42" stroke="#f36b42" stroke-width="0.8"/>
<polygon points="306.4,334.4 312,335.8 319,327.4 313.4,325.1" fill="#fdba6c" stroke="#fdba6c" stroke-width="0.8"/>
<polygon points="395,320.8 401.4,326.3 407.6,323.1 401.2,317.5" fill="#f98e52" stroke="#f98e52" stroke-width="0.8"/>
<polygon points="414,327.8 420.6,331.6 426.6,329.3 420.1,325.5" fill="#fdaf62" stroke="#fdaf62" stroke-width="0.8"/>
<polygon points="242.4,357.6 247.4,359.6 255.8,358.9 250.6,355.7" fill="#f2fad7" stroke="#f2fad7" stroke-width="0.8"/>
<polygon points="363.2,316.5 369.3,319.6 375.9,314.8 369.8,311.9" fill="#f36a42" stroke="#f36a42" stroke-width="0.8"/>
<polygon points="471.5,351.5 478.4,359.5 483.7,355.6 476.8,350.5" fill="#fbfec6" stroke="#fbfec6" stroke-width="0.8"/>
<polygon points="433.2,332.8 440,336.6 445.7,335.1 439,331.3" fill="#fdc375" stroke="#fdc375" stroke-width="0.8"/>
<polygon points="350.4,320.4 356.4,322.4 363.2,316.5 357.1,314.9" fill="#f57647" stroke="#f57647" stroke-width="0.8"/>
<polygon points="274.1,360.1 279.4,361.2 286.8,353.3 281.6,352.5" fill="#f7fcce" stroke="#f7fcce" stroke-width="0.8"/>
<polygon points="452.5,339.8 459.3,345.7 464.7,344.8 458,339.3" fill="#fee395" stroke="#fee395" stroke-width="0.8"/>
<polygon points="382.2,319.4 388.5,325 395,320.8 388.6,315.3" fill="#f67e4b" stroke="#f67e4b" stroke-width="0.8"/>
<polygon points="286.8,353.3 292.1,353.3 299.4,344.1 294,343.7" fill="#fff2ab" stroke="#fff2ab" stroke-width="0.8"/>
<polygon points="337.6,325.1 343.5,327.3 350.4,320.4 344.5,318.8" fill="#f88b51" stroke="#f88b51" stroke-width="0.8"/>
<polygon points="261,361.9 266.3,364.4 274.1,360.1 268.9,357.6" fill="#edf8e0" stroke="#edf8e0" stroke-width="0.8"/>
<polygon points="401.4,326.3 407.9,331 414,327.8 407.6,323.1" fill="#fba15b" stroke="#fba15b" stroke-width="0.8"/>
<polygon points="324.8,329.9 330.6,332.6 337.6,325.1 331.8,322.8" fill="#fba35c" stroke="#fba35c" stroke-width="0.8"/>
<polygon points="299.4,344.1 304.8,344.6 312,335.8 306.4,334.4" fill="#fed787" stroke="#fed787" stroke-width="0.8"/>
<polygon points="312,335.8 317.7,337.9 324.8,329.9 319,327.4" fill="#fdba6c" stroke="#fdba6c" stroke-width="0.8"/>
<polygon points="420.6,331.6 427.3,335.1 433.2,332.8 426.6,329.3" fill="#fdb669" stroke="#fdb669" stroke-width="0.8"/>
<polygon points="369.3,319.6 375.6,324.6 382.2,319.4 375.9,314.8" fill="#f57547" stroke="#f57547" stroke-width="0.8"/>
<polygon points="247.4,359.6 252.5,361.7 261,361.9 255.8,358.9" fill="#f2fad8" stroke="#f2fad8" stroke-width="0.8"/>
<polygon points="459.3,345.7 466.1,353.7 471.5,351.5 464.7,344.8" fill="#fff0a8" stroke="#fff0a8" stroke-width="0.8"/>
<polygon points="440,336.6 446.8,341.5 452.5,339.8 445.7,335.1" fill="#fecd7e" stroke="#fecd7e" stroke-width="0.8"/>
<polygon points="388.5,325 395,330.7 401.4,326.3 395,320.8" fill="#f99355" stroke="#f99355" stroke-width="0.8"/>
<polygon points="356.4,322.4 362.6,325.9 369.3,319.6 363.2,316.5" fill="#f67949" stroke="#f67949" stroke-width="0.8"/>
<polygon points="407.9,331 414.5,334.8 420.6,331.6 414,327.8" fill="#fdae61" stroke="#fdae61" stroke-width="0.8"/>
<polygon points="343.5,327.3 349.6,330.1 356.4,322.4 350.4,320.4" fill="#f88c51" stroke="#f88c51" stroke-width="0.8"/>
<polygon points="279.4,361.2 284.6,361.3 292.1,353.3 286.8,353.3" fill="#fcfec4" stroke="#fcfec4" stroke-width="0.8"/>
<polygon points="266.3,364.4 271.5,366.2 279.4,361.2 274.1,360.1" fill="#eef9dd" stroke="#eef9dd" stroke-width="0.8"/>
<polygon points="330.6,332.6 336.6,335.8 343.5,327.3 337.6,325.1" fill="#fca65d" stroke="#fca65d" stroke-width="0.8"/>
<polygon points="466.1,353.7 472.9,364.1 478.4,359.5 471.5,351.5" fill="#fdfec3" stroke="#fdfec3" stroke-width="0.8"/>
<polygon points="292.1,353.3 297.5,353.5 304.8,344.6 299.4,344.1" fill="#feeca2" stroke="#feeca2" stroke-width="0.8"/>
<polygon points="317.7,337.9 323.5,341 330.6,332.6 324.8,329.9" fill="#fdbc6e" stroke="#fdbc6e" stroke-width="0.8"/>
<polygon points="375.6,324.6 382,330.5 388.5,325 382.2,319.4" fill="#f88950" stroke="#f88950" stroke-width="0.8"/>
<polygon points="304.8,344.6 310.5,346.4 317.7,337.9 312,335.8" fill="#fed383" stroke="#fed383" stroke-width="0.8"/>
<polygon points="427.3,335.1 434.1,339.1 440,336.6 433.2,332.8" fill="#fdbe70" stroke="#fdbe70" stroke-width="0.8"/>
<polygon points="446.8,341.5 453.7,348.1 459.3,345.7 452.5,339.8" fill="#fedc8d" stroke="#fedc8d" stroke-width="0.8"/>
<polygon points="395,330.7 401.5,335.5 407.9,331 401.4,326.3" fill="#fca65d" stroke="#fca65d" stroke-width="0.8"/>
<polygon points="252.5,361.7 257.7,364.2 266.3,364.4 261,361.9" fill="#f1fad8" stroke="#f1fad8" stroke-width="0.8"/>
<polygon points="362.6,325.9 368.9,331.2 375.6,324.6 369.3,319.6" fill="#f7864e" stroke="#f7864e" stroke-width="0.8"/>
<polygon points="414.5,334.8 421.2,338.4 427.3,335.1 420.6,331.6" fill="#fdb567" stroke="#fdb567" stroke-width="0.8"/>
<polygon points="349.6,330.1 355.8,334.1 362.6,325.9 356.4,322.4" fill="#f99254" stroke="#f99254" stroke-width="0.8"/>
<polygon points="382,330.5 388.5,336.4 395,330.7 388.5,325" fill="#fb9f5a" stroke="#fb9f5a" stroke-width="0.8"/>
<polygon points="336.6,335.8 342.7,339.5 349.6,330.1 343.5,327.3" fill="#fdab5f" stroke="#fdab5f" stroke-width="0.8"/>
<polygon points="453.7,348.1 460.5,357.1 466.1,353.7 459.3,345.7" fill="#feeda3" stroke="#feeda3" stroke-width="0.8"/>
<polygon points="323.5,341 329.5,345.1 336.6,335.8 330.6,332.6" fill="#fdc072" stroke="#fdc072" stroke-width="0.8"/>
<polygon points="434.1,339.1 441,344.3 446.8,341.5 440,336.6" fill="#fec879" stroke="#fec879" stroke-width="0.8"/>
<polygon points="271.5,366.2 276.9,367.4 284.6,361.3 279.4,361.2" fill="#f3fad6" stroke="#f3fad6" stroke-width="0.8"/>
<polygon points="284.6,361.3 290,361.7 297.5,353.5 292.1,353.3" fill="#fffbb9" stroke="#fffbb9" stroke-width="0.8"/>
<polygon points="310.5,346.4 316.3,349.9 323.5,341 317.7,337.9" fill="#fed485" stroke="#fed485" stroke-width="0.8"/>
<polygon points="297.5,353.5 303.2,355 310.5,346.4 304.8,344.6" fill="#fee89c" stroke="#fee89c" stroke-width="0.8"/>
<polygon points="401.5,335.5 408.2,339.3 414.5,334.8 407.9,331" fill="#fdb164" stroke="#fdb164" stroke-width="0.8"/>
<polygon points="368.9,331.2 375.3,337.3 382,330.5 375.6,324.6" fill="#fa9a58" stroke="#fa9a58" stroke-width="0.8"/>
<polygon points="460.5,357.1 467.3,369.3 472.9,364.1 466.1,353.7" fill="#fbfec6" stroke="#fbfec6" stroke-width="0.8"/>
<polygon points="257.7,364.2 263.1,367.2 271.5,366.2 266.3,364.4" fill="#f1fad8" stroke="#f1fad8" stroke-width="0.8"/>
<polygon points="388.5,336.4 395,341.3 401.5,335.5 395,330.7" fill="#fdb164" stroke="#fdb164" stroke-width="0.8"/>
<polygon points="421.2,338.4 428,342.5 434.1,339.1 427.3,335.1" fill="#fdbc6e" stroke="#fdbc6e" stroke-width="0.8"/>
<polygon points="355.8,334.1 362.1,339.5 368.9,331.2 362.6,325.9" fill="#fba05a" stroke="#fba05a" stroke-width="0.8"/>
<polygon points="441,344.3 447.8,351.5 453.7,348.1 446.8,341.5" fill="#fed98a" stroke="#fed98a" stroke-width="0.8"/>
<polygon points="342.7,339.5 348.9,344.1 355.8,334.1 349.6,330.1" fill="#fdb365" stroke="#fdb365" stroke-width="0.8"/>
<polygon points="329.5,345.1 335.6,349.8 342.7,339.5 336.6,335.8" fill="#fec87a" stroke="#fec87a" stroke-width="0.8"/>
<polygon points="316.3,349.9 322.4,354.8 329.5,345.1 323.5,341" fill="#fedc8c" stroke="#fedc8c" stroke-width="0.8"/>
<polygon points="375.3,337.3 381.8,343.3 388.5,336.4 382,330.5" fill="#fdb063" stroke="#fdb063" stroke-width="0.8"/>
<polygon points="408.2,339.3 414.9,342.8 421.2,338.4 414.5,334.8" fill="#fdb86a" stroke="#fdb86a" stroke-width="0.8"/>
<polygon points="303.2,355 309,358.8 316.3,349.9 310.5,346.4" fill="#fee89d" stroke="#fee89d" stroke-width="0.8"/>
<polygon points="290,361.7 295.7,363.4 303.2,355 297.5,353.5" fill="#fff7b2" stroke="#fff7b2" stroke-width="0.8"/>
<polygon points="276.9,367.4 282.3,368.8 290,361.7 284.6,361.3" fill="#f8fccc" stroke="#f8fccc" stroke-width="0.8"/>
<polygon points="447.8,351.5 454.7,361.5 460.5,357.1 453.7,348.1" fill="#feeda3" stroke="#feeda3" stroke-width="0.8"/>
<polygon points="362.1,339.5 368.5,345.6 375.3,337.3 368.9,331.2" fill="#fdb366" stroke="#fdb366" stroke-width="0.8"/>
<polygon points="263.1,367.2 268.6,370.7 276.9,367.4 271.5,366.2" fill="#f2fad7" stroke="#f2fad7" stroke-width="0.8"/>
<polygon points="428,342.5 434.9,348 441,344.3 434.1,339.1" fill="#fec779" stroke="#fec779" stroke-width="0.8"/>
<polygon points="395,341.3 401.7,345.1 408.2,339.3 401.5,335.5" fill="#fdba6c" stroke="#fdba6c" stroke-width="0.8"/>
<polygon points="348.9,344.1 355.2,349.5 362.1,339.5 355.8,334.1" fill="#fdbe70" stroke="#fdbe70" stroke-width="0.8"/>
<polygon points="454.7,361.5 461.5,374.8 467.3,369.3 460.5,357.1" fill="#f8fccb" stroke="#f8fccb" stroke-width="0.8"/>
<polygon points="335.6,349.8 341.9,354.9 348.9,344.1 342.7,339.5" fill="#fed283" stroke="#fed283" stroke-width="0.8"/>
<polygon points="381.8,343.3 388.4,348.3 395,341.3 388.5,336.4" fill="#fdbf71" stroke="#fdbf71" stroke-width="0.8"/>
<polygon points="322.4,354.8 328.5,360.3 335.6,349.8 329.5,345.1" fill="#fee496" stroke="#fee496" stroke-width="0.8"/>
<polygon points="309,358.8 315.1,364.1 322.4,354.8 316.3,349.9" fill="#feeea5" stroke="#feeea5" stroke-width="0.8"/>
<polygon points="414.9,342.8 421.8,347 428,342.5 421.2,338.4" fill="#fdbf71" stroke="#fdbf71" stroke-width="0.8"/>
<polygon points="368.5,345.6 375,351.5 381.8,343.3 375.3,337.3" fill="#fdc476" stroke="#fdc476" stroke-width="0.8"/>
<polygon points="295.7,363.4 301.5,367.3 309,358.8 303.2,355" fill="#fff7b3" stroke="#fff7b3" stroke-width="0.8"/>
<polygon points="434.9,348 441.9,355.7 447.8,351.5 441,344.3" fill="#feda8a" stroke="#feda8a" stroke-width="0.8"/>
<polygon points="282.3,368.8 287.9,371.2 295.7,363.4 290,361.7" fill="#fbfdc6" stroke="#fbfdc6" stroke-width="0.8"/>
<polygon points="401.7,345.1 408.5,348.5 414.9,342.8 408.2,339.3" fill="#fdc072" stroke="#fdc072" stroke-width="0.8"/>
<polygon points="355.2,349.5 361.6,355.1 368.5,345.6 362.1,339.5" fill="#fecd7f" stroke="#fecd7f" stroke-width="0.8"/>
<polygon points="268.6,370.7 274.3,374.3 282.3,368.8 276.9,367.4" fill="#f2fad6" stroke="#f2fad6" stroke-width="0.8"/>
<polygon points="341.9,354.9 348.2,360.1 355.2,349.5 348.9,344.1" fill="#fede8f" stroke="#fede8f" stroke-width="0.8"/>
<polygon points="328.5,360.3 334.7,365.7 341.9,354.9 335.6,349.8" fill="#feeca2" stroke="#feeca2" stroke-width="0.8"/>
<polygon points="388.4,348.3 395.1,352 401.7,345.1 395,341.3" fill="#fec87a" stroke="#fec87a" stroke-width="0.8"/>
<polygon points="441.9,355.7 448.8,366.2 454.7,361.5 447.8,351.5" fill="#feefa6" stroke="#feefa6" stroke-width="0.8"/>
<polygon points="315.1,364.1 321.2,370 328.5,360.3 322.4,354.8" fill="#fff6b2" stroke="#fff6b2" stroke-width="0.8"/>
<polygon points="421.8,347 428.7,352.5 434.9,348 428,342.5" fill="#feca7c" stroke="#feca7c" stroke-width="0.8"/>
<polygon points="375,351.5 381.6,356.3 388.4,348.3 381.8,343.3" fill="#fed283" stroke="#fed283" stroke-width="0.8"/>
<polygon points="301.5,367.3 307.5,372.6 315.1,364.1 309,358.8" fill="#fffdbc" stroke="#fffdbc" stroke-width="0.8"/>
<polygon points="448.8,366.2 455.6,380.5 461.5,374.8 454.7,361.5" fill="#f4fbd3" stroke="#f4fbd3" stroke-width="0.8"/>
<polygon points="361.6,355.1 368.1,360.5 375,351.5 368.5,345.6" fill="#fedd8d" stroke="#fedd8d" stroke-width="0.8"/>
<polygon points="287.9,371.2 293.8,374.9 301.5,367.3 295.7,363.4" fill="#fafdc8" stroke="#fafdc8" stroke-width="0.8"/>
<polygon points="408.5,348.5 415.3,352.5 421.8,347 414.9,342.8" fill="#fdc678" stroke="#fdc678" stroke-width="0.8"/>
<polygon points="348.2,360.1 354.6,365.1 361.6,355.1 355.2,349.5" fill="#fee79b" stroke="#fee79b" stroke-width="0.8"/>
<polygon points="334.7,365.7 341,370.5 348.2,360.1 341.9,354.9" fill="#fff3ad" stroke="#fff3ad" stroke-width="0.8"/>
<polygon points="274.3,374.3 280,377.9 287.9,371.2 282.3,368.8" fill="#f2fad7" stroke="#f2fad7" stroke-width="0.8"/>
<polygon points="428.7,352.5 435.7,360.3 441.9,355.7 434.9,348" fill="#fedd8e" stroke="#fedd8e" stroke-width="0.8"/>
<polygon points="321.2,370 327.4,375.5 334.7,365.7 328.5,360.3" fill="#ffffbf" stroke="#ffffbf" stroke-width="0.8"/>
<polygon points="395.1,352 401.8,355.4 408.5,348.5 401.7,345.1" fill="#fecd7f" stroke="#fecd7f" stroke-width="0.8"/>
<polygon points="381.6,356.3 388.3,360.1 395.1,352 388.4,348.3" fill="#fedb8b" stroke="#fedb8b" stroke-width="0.8"/>
<polygon points="307.5,372.6 313.7,378.4 321.2,370 315.1,364.1" fill="#f8fccb" stroke="#f8fccb" stroke-width="0.8"/>
<polygon points="368.1,360.5 374.7,365.2 381.6,356.3 375,351.5" fill="#fee699" stroke="#fee699" stroke-width="0.8"/>
<polygon points="435.7,360.3 442.7,371.3 448.8,366.2 441.9,355.7" fill="#fff2ab" stroke="#fff2ab" stroke-width="0.8"/>
<polygon points="293.8,374.9 299.8,379.6 307.5,372.6 301.5,367.3" fill="#f5fbd1" stroke="#f5fbd1" stroke-width="0.8"/>
<polygon points="415.3,352.5 422.3,357.9 428.7,352.5 421.8,347" fill="#fed182" stroke="#fed182" stroke-width="0.8"/>
<polygon points="354.6,365.1 361.1,370 368.1,360.5 361.6,355.1" fill="#feefa7" stroke="#feefa7" stroke-width="0.8"/>
<polygon points="341,370.5 347.4,374.9 354.6,365.1 348.2,360.1" fill="#fffab7" stroke="#fffab7" stroke-width="0.8"/>
<polygon points="442.7,371.3 449.6,386.1 455.6,380.5 448.8,366.2" fill="#f0f9db" stroke="#f0f9db" stroke-width="0.8"/>
<polygon points="327.4,375.5 333.7,379.9 341,370.5 334.7,365.7" fill="#f8fccb" stroke="#f8fccb" stroke-width="0.8"/>
<polygon points="280,377.9 285.8,381.2 293.8,374.9 287.9,371.2" fill="#f0f9da" stroke="#f0f9da" stroke-width="0.8"/>
<polygon points="401.8,355.4 408.8,359.3 415.3,352.5 408.5,348.5" fill="#fed384" stroke="#fed384" stroke-width="0.8"/>
<polygon points="313.7,378.4 319.9,383.5 327.4,375.5 321.2,370" fill="#f0f9da" stroke="#f0f9da" stroke-width="0.8"/>
<polygon points="388.3,360.1 395.1,363.5 401.8,355.4 395.1,352" fill="#fee090" stroke="#fee090" stroke-width="0.8"/>
<polygon points="422.3,357.9 429.4,365.7 435.7,360.3 428.7,352.5" fill="#fee294" stroke="#fee294" stroke-width="0.8"/>
<polygon points="374.7,365.2 381.4,369 388.3,360.1 381.6,356.3" fill="#feeba0" stroke="#feeba0" stroke-width="0.8"/>
<polygon points="299.8,379.6 305.9,384.4 313.7,378.4 307.5,372.6" fill="#eef8de" stroke="#eef8de" stroke-width="0.8"/>
<polygon points="361.1,370 367.7,374.3 374.7,365.2 368.1,360.5" fill="#fff5b0" stroke="#fff5b0" stroke-width="0.8"/>
<polygon points="347.4,374.9 353.9,379.1 361.1,370 354.6,365.1" fill="#feffc0" stroke="#feffc0" stroke-width="0.8"/>
<polygon points="333.7,379.9 340.1,383.7 347.4,374.9 341,370.5" fill="#f4fbd4" stroke="#f4fbd4" stroke-width="0.8"/>
<polygon points="285.8,381.2 291.7,384.4 299.8,379.6 293.8,374.9" fill="#eef8df" stroke="#eef8df" stroke-width="0.8"/>
<polygon points="429.4,365.7 436.4,376.8 442.7,371.3 435.7,360.3" fill="#fff6b1" stroke="#fff6b1" stroke-width="0.8"/>
<polygon points="408.8,359.3 415.8,364.6 422.3,357.9 415.3,352.5" fill="#fedd8d" stroke="#fedd8d" stroke-width="0.8"/>
<polygon points="319.9,383.5 326.1,387.4 333.7,379.9 327.4,375.5" fill="#ebf7e5" stroke="#ebf7e5" stroke-width="0.8"/>
<polygon points="436.4,376.8 443.4,391.9 449.6,386.1 442.7,371.3" fill="#ebf7e3" stroke="#ebf7e3" stroke-width="0.8"/>
<polygon points="395.1,363.5 402,367.4 408.8,359.3 401.8,355.4" fill="#fee394" stroke="#fee394" stroke-width="0.8"/>
<polygon points="381.4,369 388.2,372.7 395.1,363.5 388.3,360.1" fill="#feeea5" stroke="#feeea5" stroke-width="0.8"/>
<polygon points="305.9,384.4 312,388.7 319.9,383.5 313.7,378.4" fill="#e8f6ea" stroke="#e8f6ea" stroke-width="0.8"/>
<polygon points="367.7,374.3 374.4,378.3 381.4,369 374.7,365.2" fill="#fff9b7" stroke="#fff9b7" stroke-width="0.8"/>
<polygon points="353.9,379.1 360.5,383.2 367.7,374.3 361.1,370" fill="#fafdc8" stroke="#fafdc8" stroke-width="0.8"/>
<polygon points="415.8,364.6 422.9,372.2 429.4,365.7 422.3,357.9" fill="#fee99d" stroke="#fee99d" stroke-width="0.8"/>
<polygon points="340.1,383.7 346.5,387.3 353.9,379.1 347.4,374.9" fill="#f0f9da" stroke="#f0f9da" stroke-width="0.8"/>
<polygon points="291.7,384.4 297.6,387.3 305.9,384.4 299.8,379.6" fill="#ebf7e5" stroke="#ebf7e5" stroke-width="0.8"/>
<polygon points="326.1,387.4 332.5,390.7 340.1,383.7 333.7,379.9" fill="#e8f6ea" stroke="#e8f6ea" stroke-width="0.8"/>
<polygon points="402,367.4 409.1,372.6 415.8,364.6 408.8,359.3" fill="#fee89c" stroke="#fee89c" stroke-width="0.8"/>
<polygon points="422.9,372.2 430,382.9 436.4,376.8 429.4,365.7" fill="#fffbb9" stroke="#fffbb9" stroke-width="0.8"/>
<polygon points="312,388.7 318.3,392.1 326.1,387.4 319.9,383.5" fill="#e4f5f1" stroke="#e4f5f1" stroke-width="0.8"/>
<polygon points="388.2,372.7 395.1,376.8 402,367.4 395.1,363.5" fill="#fff1a9" stroke="#fff1a9" stroke-width="0.8"/>
<polygon points="374.4,378.3 381.2,382.3 388.2,372.7 381.4,369" fill="#fffdbb" stroke="#fffdbb" stroke-width="0.8"/>
<polygon points="430,382.9 437,397.8 443.4,391.9 436.4,376.8" fill="#e6f5ec" stroke="#e6f5ec" stroke-width="0.8"/>
<polygon points="360.5,383.2 367.2,387.4 374.4,378.3 367.7,374.3" fill="#f6fcd0" stroke="#f6fcd0" stroke-width="0.8"/>
<polygon points="346.5,387.3 353.1,391.3 360.5,383.2 353.9,379.1" fill="#edf8e0" stroke="#edf8e0" stroke-width="0.8"/>
<polygon points="297.6,387.3 303.7,390.1 312,388.7 305.9,384.4" fill="#e8f6e9" stroke="#e8f6e9" stroke-width="0.8"/>
<polygon points="409.1,372.6 416.2,379.9 422.9,372.2 415.8,364.6" fill="#fff2ac" stroke="#fff2ac" stroke-width="0.8"/>
<polygon points="332.5,390.7 338.9,394 346.5,387.3 340.1,383.7" fill="#e6f5ed" stroke="#e6f5ed" stroke-width="0.8"/>
<polygon points="395.1,376.8 402.2,381.9 409.1,372.6 402,367.4" fill="#fff6b1" stroke="#fff6b1" stroke-width="0.8"/>
<polygon points="318.3,392.1 324.6,395.1 332.5,390.7 326.1,387.4" fill="#e3f4f3" stroke="#e3f4f3" stroke-width="0.8"/>
<polygon points="381.2,382.3 388.1,386.8 395.1,376.8 388.2,372.7" fill="#feffc1" stroke="#feffc1" stroke-width="0.8"/>
<polygon points="416.2,379.9 423.3,390 430,382.9 422.9,372.2" fill="#fbfdc7" stroke="#fbfdc7" stroke-width="0.8"/>
<polygon points="367.2,387.4 374,391.9 381.2,382.3 374.4,378.3" fill="#f2fad6" stroke="#f2fad6" stroke-width="0.8"/>
<polygon points="353.1,391.3 359.8,395.8 367.2,387.4 360.5,383.2" fill="#e9f7e7" stroke="#e9f7e7" stroke-width="0.8"/>
<polygon points="423.3,390 430.5,403.9 437,397.8 430,382.9" fill="#e0f3f8" stroke="#e0f3f8" stroke-width="0.8"/>
<polygon points="303.7,390.1 309.9,392.9 318.3,392.1 312,388.7" fill="#e7f6eb" stroke="#e7f6eb" stroke-width="0.8"/>
<polygon points="338.9,394 345.5,398 353.1,391.3 346.5,387.3" fill="#e4f4f1" stroke="#e4f4f1" stroke-width="0.8"/>
<polygon points="402.2,381.9 409.3,388.8 416.2,379.9 409.1,372.6" fill="#ffffbf" stroke="#ffffbf" stroke-width="0.8"/>
<polygon points="388.1,386.8 395.2,392 402.2,381.9 395.1,376.8" fill="#f9fdcb" stroke="#f9fdcb" stroke-width="0.8"/>
<polygon points="324.6,395.1 331,398.5 338.9,394 332.5,390.7" fill="#e2f4f5" stroke="#e2f4f5" stroke-width="0.8"/>
<polygon points="374,391.9 380.9,396.8 388.1,386.8 381.2,382.3" fill="#eef8de" stroke="#eef8de" stroke-width="0.8"/>
<polygon points="359.8,395.8 366.7,400.9 374,391.9 367.2,387.4" fill="#e5f5ef" stroke="#e5f5ef" stroke-width="0.8"/>
<polygon points="409.3,388.8 416.6,398 423.3,390 416.2,379.9" fill="#f0f9da" stroke="#f0f9da" stroke-width="0.8"/>
<polygon points="309.9,392.9 316.3,396.1 324.6,395.1 318.3,392.1" fill="#e7f6ec" stroke="#e7f6ec" stroke-width="0.8"/>
<polygon points="345.5,398 352.3,403 359.8,395.8 353.1,391.3" fill="#e0f3f8" stroke="#e0f3f8" stroke-width="0.8"/>
<polygon points="395.2,392 402.4,398.5 409.3,388.8 402.2,381.9" fill="#f0f9da" stroke="#f0f9da" stroke-width="0.8"/>
<polygon points="416.6,398 423.8,410.2 430.5,403.9 423.3,390" fill="#d4edf5" stroke="#d4edf5" stroke-width="0.8"/>
<polygon points="380.9,396.8 388,402.3 395.2,392 388.1,386.8" fill="#e8f6e8" stroke="#e8f6e8" stroke-width="0.8"/>
<polygon points="331,398.5 337.6,402.8 345.5,398 338.9,394" fill="#e0f3f8" stroke="#e0f3f8" stroke-width="0.8"/>
<polygon points="366.7,400.9 373.6,406.3 380.9,396.8 374,391.9" fill="#dff3f8" stroke="#dff3f8" stroke-width="0.8"/>
<polygon points="352.3,403 359.1,408.7 366.7,400.9 359.8,395.8" fill="#d7eef5" stroke="#d7eef5" stroke-width="0.8"/>
<polygon points="402.4,398.5 409.6,406.6 416.6,398 409.3,388.8" fill="#e4f4f1" stroke="#e4f4f1" stroke-width="0.8"/>
<polygon points="316.3,396.1 322.8,400 331,398.5 324.6,395.1" fill="#e6f5ed" stroke="#e6f5ed" stroke-width="0.8"/>
<polygon points="388,402.3 395.2,408.5 402.4,398.5 395.2,392" fill="#e1f3f6" stroke="#e1f3f6" stroke-width="0.8"/>
<polygon points="337.6,402.8 344.4,408.4 352.3,403 345.5,398" fill="#d8eff6" stroke="#d8eff6" stroke-width="0.8"/>
<polygon points="409.6,406.6 417,416.8 423.8,410.2 416.6,398" fill="#c6e6f1" stroke="#c6e6f1" stroke-width="0.8"/>
<polygon points="373.6,406.3 380.7,412.1 388,402.3 380.9,396.8" fill="#d4edf5" stroke="#d4edf5" stroke-width="0.8"/>
<polygon points="359.1,408.7 366.1,414.8 373.6,406.3 366.7,400.9" fill="#cbe9f2" stroke="#cbe9f2" stroke-width="0.8"/>
<polygon points="322.8,400 329.4,405.1 337.6,402.8 331,398.5" fill="#e3f4f3" stroke="#e3f4f3" stroke-width="0.8"/>
<polygon points="395.2,408.5 402.5,415.5 409.6,406.6 402.4,398.5" fill="#d0ebf3" stroke="#d0ebf3" stroke-width="0.8"/>
<polygon points="344.4,408.4 351.4,414.7 359.1,408.7 352.3,403" fill="#cdeaf3" stroke="#cdeaf3" stroke-width="0.8"/>
<polygon points="380.7,412.1 387.9,418.2 395.2,408.5 388,402.3" fill="#c8e7f1" stroke="#c8e7f1" stroke-width="0.8"/>
<polygon points="366.1,414.8 373.2,421.1 380.7,412.1 373.6,406.3" fill="#bfe3ef" stroke="#bfe3ef" stroke-width="0.8"/>
<polygon points="402.5,415.5 409.9,423.7 417,416.8 409.6,406.6" fill="#b8dfed" stroke="#b8dfed" stroke-width="0.8"/>
<polygon points="329.4,405.1 336.3,411.3 344.4,408.4 337.6,402.8" fill="#dbf1f7" stroke="#dbf1f7" stroke-width="0.8"/>
<polygon points="351.4,414.7 358.4,421.6 366.1,414.8 359.1,408.7" fill="#bfe3ef" stroke="#bfe3ef" stroke-width="0.8"/>
<polygon points="387.9,418.2 395.3,424.5 402.5,415.5 395.2,408.5" fill="#b9e0ed" stroke="#b9e0ed" stroke-width="0.8"/>
<polygon points="373.2,421.1 380.5,427.3 387.9,418.2 380.7,412.1" fill="#b2dceb" stroke="#b2dceb" stroke-width="0.8"/>
<polygon points="336.3,411.3 343.3,418.4 351.4,414.7 344.4,408.4" fill="#cdeaf3" stroke="#cdeaf3" stroke-width="0.8"/>
<polygon points="358.4,421.6 365.6,428.5 373.2,421.1 366.1,414.8" fill="#b0dbea" stroke="#b0dbea" stroke-width="0.8"/>
<polygon points="395.3,424.5 402.7,430.9 409.9,423.7 402.5,415.5" fill="#a9d7e8" stroke="#a9d7e8" stroke-width="0.8"/>
<polygon points="380.5,427.3 387.8,433.2 395.3,424.5 387.9,418.2" fill="#a5d4e6" stroke="#a5d4e6" stroke-width="0.8"/>
<polygon points="343.3,418.4 350.4,426 358.4,421.6 351.4,414.7" fill="#bde2ee" stroke="#bde2ee" stroke-width="0.8"/>
<polygon points="365.6,428.5 372.8,435.2 380.5,427.3 373.2,421.1" fill="#a1d1e5" stroke="#a1d1e5" stroke-width="0.8"/>
<polygon points="387.8,433.2 395.3,438.4 402.7,430.9 395.3,424.5" fill="#99cbe1" stroke="#99cbe1" stroke-width="0.8"/>
<polygon points="350.4,426 357.6,433.8 365.6,428.5 358.4,421.6" fill="#abd9e9" stroke="#abd9e9" stroke-width="0.8"/>
<polygon points="372.8,435.2 380.2,441.3 387.8,433.2 380.5,427.3" fill="#95c7df" stroke="#95c7df" stroke-width="0.8"/>
<polygon points="357.6,433.8 364.9,441.4 372.8,435.2 365.6,428.5" fill="#99cbe1" stroke="#99cbe1" stroke-width="0.8"/>
<polygon points="380.2,441.3 387.7,446.4 395.3,438.4 387.8,433.2" fill="#8bc0db" stroke="#8bc0db" stroke-width="0.8"/>
<polygon points="364.9,441.4 372.4,448.5 380.2,441.3 372.8,435.2" fill="#8abfdb" stroke="#8abfdb" stroke-width="0.8"/>
<polygon points="372.4,448.5 379.9,454.7 387.7,446.4 380.2,441.3" fill="#7fb6d6" stroke="#7fb6d6" stroke-width="0.8"/></g>
</svg>
<canvas id="surf" width="1578" height="1114" style="position:absolute;left:0;top:0;width:789px;height:557px"></canvas>
<svg width="789" height="557" style="position:absolute;left:0;top:0;font-family:'Liberation Sans',sans-serif"><defs><linearGradient id="vmg" x1="0" y1="0" x2="0" y2="1"><stop offset="0.0" stop-color="#a50026"/><stop offset="0.1" stop-color="#d73027"/><stop offset="0.2" stop-color="#f46d43"/><stop offset="0.3" stop-color="#fdae61"/><stop offset="0.4" stop-color="#fee090"/><stop offset="0.5" stop-color="#ffffbf"/><stop offset="0.6" stop-color="#e0f3f8"/><stop offset="0.7" stop-color="#abd9e9"/><stop offset="0.8" stop-color="#74add1"/><stop offset="0.9" stop-color="#4575b4"/><stop offset="1.0" stop-color="#313695"/></linearGradient></defs>
<rect x="24.3" y="44.5" width="25.2" height="280" fill="url(#vmg)"/>
<rect x="21.5" y="40.6" width="30.5" height="8" rx="4" fill="#a50026" stroke="#fff" stroke-width="1.5"/>
<rect x="21.5" y="320.6" width="30.5" height="8" rx="4" fill="#313695" stroke="#fff" stroke-width="1.5"/>
<text x="67.5" y="43.4" font-size="17" dominant-baseline="central" fill="#636365" letter-spacing="0.3">0.1403</text>
<text x="67.5" y="323.4" font-size="17" dominant-baseline="central" fill="#636365" letter-spacing="0.3">-0.5975</text>
<text x="762.2" y="38.0" font-size="17" text-anchor="end" dominant-baseline="central" fill="#636365" letter-spacing="0.5">Variance: 0.5378</text></svg>
<script>var ZG=[-288,-282,-275,-267,-259,-251,-243,-234,-226,-217,-209,-200,-192,-184,-176,-168,-161,-155,-149,-143,-137,-132,-127,-123,-118,-114,-110,-107,-103,-101,-98,-97,-96,-95,-96,-97,-99,-101,-105,-109,-114,-119,-125,-132,-138,-144,-150,-155,-158,-161,-162,-163,-164,-164,-165,-165,-167,-170,-174,-180,-187,-197,-209,-224,-242,-283,-278,-273,-268,-262,-256,-250,-243,-237,-230,-223,-215,-207,-199,-191,-182,-173,-164,-155,-146,-136,-128,-119,-112,-105,-99,-95,-91,-88,-86,-84,-84,-84,-85,-86,-88,-91,-94,-98,-103,-108,-113,-119,-125,-131,-137,-142,-147,-151,-153,-155,-157,-158,-159,-160,-162,-164,-167,-171,-176,-183,-192,-202,-215,-230,-279,-275,-271,-267,-263,-259,-255,-250,-244,-239,-232,-226,-218,-210,-201,-192,-181,-170,-158,-146,-134,-123,-112,-102,-94,-87,-81,-77,-74,-72,-72,-72,-73,-75,-77,-80,-83,-87,-91,-96,-101,-107,-112,-118,-124,-129,-134,-138,-142,-145,-148,-150,-152,-153,-155,-157,-160,-163,-168,-173,-179,-187,-196,-208,-221,-275,-272,-269,-267,-264,-261,-257,-254,-249,-244,-239,-232,-225,-217,-208,-197,-186,-173,-160,-146,-132,-118,-105,-94,-84,-76,-69,-65,-62,-61,-60,-61,-63,-65,-68,-72,-76,-80,-85,-90,-95,-100,-106,-111,-116,-121,-126,-130,-134,-137,-140,-142,-144,-147,-149,-152,-155,-159,-164,-169,-175,-183,-192,-202,-213,-271,-270,-268,-266,-264,-261,-258,-255,-251,-247,-241,-235,-228,-220,-210,-199,-187,-173,-159,-143,-128,-113,-99,-86,-75,-66,-59,-55,-51,-50,-50,-51,-53,-56,-59,-63,-68,-73,-78,-83,-89,-94,-99,-104,-109,-113,-117,-121,-125,-128,-131,-134,-137,-140,-143,-146,-150,-155,-160,-165,-172,-179,-188,-197,-208,-269,-267,-266,-264,-263,-261,-258,-255,-251,-247,-241,-235,-228,-219,-209,-198,-185,-171,-156,-140,-123,-108,-93,-79,-67,-58,-51,-46,-42,-40,-40,-41,-43,-47,-51,-55,-60,-66,-71,-77,-82,-87,-92,-97,-101,-105,-109,-112,-116,-119,-122,-125,-129,-132,-136,-140,-145,-150,-155,-161,-168,-176,-185,-194,-204,-266,-265,-264,-263,-261,-259,-256,-253,-249,-245,-239,-232,-225,-216,-205,-194,-181,-166,-151,-134,-118,-102,-87,-73,-61,-51,-43,-38,-34,-32,-31,-32,-34,-38,-42,-47,-53,-59,-65,-71,-76,-81,-85,-89,-93,-97,-100,-103,-106,-110,-113,-117,-120,-125,-129,-134,-139,-145,-151,-158,-165,-173,-182,-192,-202,-265,-264,-263,-261,-259,-257,-254,-250,-246,-240,-234,-227,-219,-210,-199,-187,-174,-160,-144,-128,-112,-96,-81,-68,-55,-45,-37,-31,-27,-24,-23,-24,-26,-29,-34,-39,-45,-52,-58,-64,-70,-75,-79,-82,-86,-89,-91,-94,-97,-100,-104,-108,-112,-117,-122,-127,-133,-140,-147,-154,-162,-171,-180,-191,-201,-263,-262,-261,-260,-257,-254,-251,-246,-241,-235,-228,-220,-211,-202,-191,-179,-166,-151,-136,-121,-105,-90,-76,-62,-50,-40,-32,-25,-20,-17,-16,-16,-18,-21,-26,-32,-38,-45,-52,-58,-64,-68,-72,-75,-78,-81,-83,-85,-88,-91,-95,-99,-104,-109,-115,-121,-127,-135,-142,-151,-160,-169,-179,-190,-201,-262,-261,-260,-258,-255,-251,-247,-241,-235,-228,-220,-212,-202,-192,-180,-168,-155,-142,-127,-113,-98,-84,-70,-58,-46,-36,-27,-20,-15,-11,-9,-9,-10,-14,-19,-25,-31,-38,-45,-52,-58,-62,-66,-69,-71,-73,-75,-77,-79,-83,-86,-91,-96,-101,-108,-114,-122,-130,-139,-148,-158,-168,-179,-190,-202,-261,-260,-259,-257,-253,-249,-243,-236,-229,-221,-212,-202,-192,-181,-169,-157,-144,-131,-117,-104,-90,-77,-65,-53,-42,-32,-23,-16,-10,-5,-3,-2,-3,-6,-11,-17,-24,-32,-39,-46,-52,-56,-60,-62,-64,-65,-67,-69,-71,-74,-78,-83,-88,-94,-101,-108,-117,-126,-135,-145,-156,-167,-179,-191,-204,-260,-260,-258,-256,-251,-246,-239,-231,-223,-213,-203,-192,-180,-169,-156,-144,-131,-119,-107,-94,-82,-71,-59,-48,-38,-28,-19,-11,-5,0,3,5,4,1,-4,-11,-18,-26,-33,-40,-46,-51,-54,-56,-57,-58,-59,-61,-63,-66,-70,-75,-81,-87,-95,-103,-112,-122,-132,-143,-154,-166,-179,-192,-205,-259,-260,-258,-255,-250,-244,-236,-227,-216,-205,-194,-181,-169,-156,-143,-131,-118,-106,-95,-84,-74,-63,-53,-44,-34,-25,-16,-7,0,5,9,11,11,8,3,-4,-12,-20,-28,-35,-41,-45,-48,-50,-51,-52,-52,-54,-56,-59,-63,-68,-74,-81,-89,-98,-108,-118,-129,-141,-153,-166,-179,-193,-207,-258,-259,-258,-255,-249,-242,-233,-222,-211,-198,-185,-171,-157,-143,-130,-117,-105,-94,-83,-74,-65,-56,-47,-39,-30,-21,-12,-3,4,10,15,17,17,14,9,2,-6,-14,-22,-30,-36,-40,-43,-44,-45,-46,-46,-47,-49,-52,-56,-62,-68,-76,-85,-94,-105,-116,-128,-140,-153,-166,-180,-194,-209,-257,-260,-259,-255,-249,-241,-231,-219,-206,-191,-177,-161,-146,-131,-117,-104,-92,-81,-71,-63,-55,-48,-41,-33,-25,-17,-8,1,9,15,20,23,23,21,15,8,0,-9,-18,-25,-32,-36,-38,-40,-40,-40,-40,-41,-43,-46,-51,-57,-64,-72,-81,-91,-102,-114,-127,-140,-153,-167,-181,-195,-210,-256,-260,-260,-257,-250,-241,-230,-216,-202,-186,-169,-153,-136,-120,-105,-91,-78,-68,-60,-52,-46,-40,-34,-27,-20,-12,-3,5,13,21,26,29,29,27,21,14,5,-4,-13,-21,-27,-32,-34,-35,-35,-35,-35,-36,-38,-41,-46,-52,-60,-69,-79,-89,-101,-113,-126,-140,-154,-168,-182,-196,-210,-255,-261,-262,-259,-252,-242,-230,-216,-199,-182,-164,-145,-127,-110,-93,-79,-66,-56,-48,-41,-36,-31,-26,-21,-14,-7,2,10,19,26,32,35,35,32,27,19,10,0,-9,-17,-24,-28,-31,-31,-31,-31,-31,-32,-34,-37,-42,-49,-57,-67,-77,-89,-101,-114,-127,-141,-155,-169,-183,-196,-209,-254,-261,-264,-262,-255,-245,-232,-216,-199,-180,-160,-140,-120,-101,-83,-68,-55,-44,-37,-31,-26,-22,-18,-14,-8,-1,7,16,24,32,37,41,41,38,32,24,14,4,-5,-14,-21,-25,-28,-28,-28,-28,-28,-28,-30,-34,-40,-48,-56,-66,-78,-90,-102,-116,-129,-143,-157,-170,-183,-196,-208,-252,-262,-266,-265,-259,-249,-235,-218,-199,-179,-157,-136,-114,-94,-75,-58,-44,-34,-26,-21,-16,-13,-10,-6,-1,6,14,22,30,37,43,46,46,43,36,28,18,8,-2,-11,-18,-23,-25,-26,-26,-25,-25,-26,-28,-33,-39,-47,-56,-67,-79,-91,-105,-118,-132,-145,-159,-172,-184,-195,-205,-251,-263,-269,-268,-263,-252,-238,-221,-201,-179,-156,-133,-110,-88,-68,-50,-35,-24,-17,-11,-7,-4,-2,2,6,12,20,28,36,43,48,51,51,47,41,32,21,11,0,-9,-16,-21,-23,-24,-24,-24,-24,-25,-27,-32,-39,-47,-57,-68,-81,-94,-107,-121,-135,-148,-161,-173,-184,-194,-202,-249,-264,-271,-272,-267,-256,-242,-223,-203,-180,-155,-131,-107,-83,-62,-43,-28,-16,-8,-3,1,4,6,9,13,19,26,34,41,48,53,56,55,51,44,35,24,13,2,-7,-15,-20,-22,-23,-23,-23,-23,-24,-27,-32,-39,-48,-59,-70,-83,-96,-110,-124,-137,-150,-163,-174,-183,-192,-198,-248,-265,-273,-274,-270,-259,-244,-226,-204,-180,-155,-129,-104,-80,-57,-38,-22,-10,-1,4,8,10,12,15,19,24,31,39,46,52,57,59,58,54,46,37,26,14,4,-6,-14,-19,-21,-23,-23,-23,-23,-24,-27,-33,-40,-50,-61,-72,-85,-99,-112,-126,-139,-152,-163,-174,-182,-189,-194,-248,-265,-274,-276,-271,-261,-246,-227,-205,-180,-155,-128,-102,-77,-54,-34,-17,-5,4,10,13,16,18,20,24,29,35,42,49,55,59,61,60,55,48,38,27,15,4,-6,-13,-18,-21,-23,-23,-23,-24,-25,-29,-34,-42,-52,-62,-74,-87,-101,-114,-127,-140,-152,-163,-173,-180,-186,-189,-248,-265,-275,-276,-272,-261,-246,-227,-204,-180,-153,-127,-100,-75,-52,-31,-15,-2,7,13,17,19,21,23,27,32,38,45,51,57,60,62,61,56,48,38,27,16,5,-5,-13,-19,-22,-23,-24,-25,-25,-27,-31,-37,-44,-54,-64,-76,-89,-101,-115,-127,-140,-151,-162,-170,-178,-183,-185,-249,-265,-274,-275,-270,-259,-243,-224,-202,-177,-152,-125,-99,-74,-51,-30,-14,-1,8,14,18,20,22,25,28,33,39,45,51,56,60,61,60,55,47,37,27,15,4,-6,-14,-19,-23,-25,-26,-27,-28,-30,-34,-39,-47,-55,-66,-77,-89,-101,-113,-126,-137,-148,-158,-167,-174,-179,-182,-250,-265,-271,-271,-265,-254,-238,-219,-197,-174,-148,-123,-97,-73,-51,-31,-15,-3,6,12,16,19,21,24,27,32,37,43,49,54,57,58,57,52,45,35,25,14,3,-6,-14,-20,-24,-26,-28,-29,-31,-33,-37,-42,-49,-57,-67,-77,-88,-99,-110,-122,-133,-143,-153,-161,-169,-174,-178,-253,-264,-268,-266,-259,-247,-231,-213,-191,-168,-144,-120,-96,-73,-52,-33,-18,-6,3,9,13,16,19,21,24,29,34,40,45,50,53,54,53,48,41,32,22,12,2,-8,-16,-22,-26,-29,-31,-33,-35,-37,-40,-45,-51,-59,-67,-76,-85,-95,-106,-116,-126,-136,-146,-155,-163,-170,-176,-255,-262,-264,-260,-251,-239,-223,-205,-185,-163,-140,-117,-95,-73,-53,-36,-21,-10,-2,4,8,12,14,17,20,25,30,36,41,45,48,49,48,43,37,29,19,9,0,-10,-17,-24,-28,-32,-34,-36,-39,-41,-45,-49,-54,-60,-67,-75,-83,-91,-100,-110,-119,-129,-138,-147,-156,-165,-173,-258,-262,-260,-254,-244,-231,-215,-197,-177,-157,-136,-114,-93,-74,-55,-39,-26,-15,-7,-1,3,6,9,12,16,20,25,30,35,39,42,43,42,38,32,24,16,6,-3,-12,-20,-26,-31,-35,-38,-41,-43,-46,-49,-52,-57,-62,-67,-73,-80,-87,-95,-103,-112,-121,-130,-140,-150,-161,-171,-262,-261,-256,-248,-237,-223,-207,-190,-171,-151,-132,-112,-93,-75,-58,-43,-30,-20,-13,-7,-2,1,4,7,11,15,20,25,30,34,36,37,36,33,27,20,11,3,-6,-15,-23,-29,-34,-39,-42,-45,-48,-50,-53,-56,-60,-63,-68,-73,-78,-84,-90,-97,-105,-114,-123,-134,-145,-157,-170,-265,-261,-253,-243,-231,-217,-201,-184,-166,-147,-129,-110,-92,-76,-60,-46,-35,-25,-18,-12,-7,-4,0,3,7,11,16,21,25,29,31,32,31,27,22,15,7,-1,-10,-18,-26,-33,-38,-43,-46,-50,-53,-55,-58,-60,-63,-66,-69,-72,-76,-81,-87,-93,-100,-108,-118,-128,-140,-153,-168,-268,-261,-252,-240,-227,-212,-196,-180,-162,-145,-127,-109,-93,-77,-62,-49,-38,-29,-22,-16,-11,-7,-4,0,4,8,12,17,21,24,26,27,26,22,17,10,2,-6,-14,-22,-30,-37,-42,-47,-51,-54,-57,-60,-62,-64,-66,-68,-70,-73,-76,-80,-85,-90,-97,-105,-114,-124,-137,-150,-166,-271,-262,-252,-240,-226,-211,-195,-179,-161,-144,-127,-110,-94,-78,-64,-52,-41,-32,-24,-18,-13,-9,-5,-2,2,6,11,15,19,21,23,23,22,18,13,6,-2,-10,-19,-27,-35,-41,-47,-52,-56,-59,-62,-64,-66,-68,-69,-71,-73,-75,-78,-81,-85,-90,-96,-104,-113,-123,-135,-149,-164,-273,-265,-254,-242,-229,-214,-198,-181,-164,-146,-129,-112,-96,-80,-66,-53,-42,-32,-25,-18,-13,-9,-5,-1,3,7,11,15,18,20,22,21,19,15,9,2,-7,-15,-24,-32,-40,-47,-52,-57,-60,-64,-66,-68,-70,-72,-73,-75,-77,-79,-82,-85,-89,-94,-100,-106,-115,-124,-135,-148,-162,-274,-268,-259,-247,-234,-219,-203,-186,-169,-151,-133,-115,-98,-82,-67,-53,-41,-31,-23,-17,-11,-7,-3,1,5,9,12,16,19,21,21,20,18,13,6,-2,-11,-20,-29,-38,-46,-52,-57,-62,-65,-68,-70,-72,-73,-75,-77,-79,-81,-84,-87,-91,-95,-100,-105,-112,-119,-128,-138,-148,-160,-276,-271,-264,-254,-242,-227,-211,-194,-176,-158,-139,-120,-102,-84,-68,-53,-41,-30,-21,-14,-8,-4,0,4,8,11,15,18,20,22,22,20,17,11,3,-5,-15,-25,-35,-44,-52,-58,-63,-67,-69,-71,-73,-75,-76,-78,-81,-83,-86,-90,-94,-98,-103,-108,-113,-120,-126,-133,-141,-149,-158,-276,-275,-270,-262,-251,-237,-221,-204,-185,-165,-146,-126,-106,-87,-70,-54,-40,-28,-19,-11,-5,0,4,7,11,14,17,20,22,23,22,20,16,9,1,-9,-19,-30,-40,-49,-57,-63,-68,-71,-73,-75,-76,-77,-79,-81,-84,-88,-92,-96,-101,-106,-112,-117,-123,-129,-134,-140,-146,-151,-156,-277,-279,-276,-270,-260,-247,-232,-214,-195,-174,-153,-132,-111,-91,-72,-55,-40,-27,-17,-9,-3,2,7,10,13,16,19,22,23,23,22,19,14,7,-2,-12,-23,-34,-45,-54,-62,-68,-72,-75,-76,-77,-78,-80,-81,-84,-88,-92,-97,-103,-109,-115,-121,-127,-133,-138,-143,-147,-151,-153,-154,-277,-282,-283,-278,-270,-258,-242,-225,-205,-184,-162,-139,-117,-96,-75,-57,-41,-28,-17,-8,-1,4,8,12,15,18,20,22,23,23,21,18,12,4,-5,-16,-27,-38,-49,-59,-66,-72,-75,-77,-79,-79,-80,-81,-83,-87,-91,-97,-103,-110,-117,-124,-130,-137,-143,-148,-152,-154,-156,-155,-153,-277,-285,-288,-286,-278,-267,-253,-235,-215,-193,-171,-147,-124,-102,-80,-61,-44,-30,-18,-9,-2,4,8,12,15,17,19,21,21,21,18,14,8,0,-9,-20,-31,-42,-53,-62,-69,-74,-77,-79,-80,-80,-81,-82,-85,-89,-94,-100,-108,-115,-124,-131,-139,-146,-152,-157,-160,-161,-160,-157,-151,-276,-287,-292,-291,-286,-275,-261,-244,-224,-202,-179,-156,-132,-109,-87,-67,-49,-34,-22,-12,-5,1,6,9,12,14,16,17,17,16,13,9,3,-5,-14,-25,-35,-46,-56,-64,-71,-75,-78,-79,-80,-80,-81,-83,-85,-90,-96,-104,-112,-121,-129,-138,-146,-154,-160,-164,-167,-167,-164,-159,-150,-276,-289,-295,-295,-291,-281,-268,-251,-232,-211,-188,-164,-141,-117,-95,-75,-57,-41,-29,-19,-11,-5,0,3,6,8,10,10,10,8,6,1,-4,-12,-20,-30,-39,-49,-57,-65,-71,-75,-77,-78,-79,-79,-80,-82,-86,-91,-98,-106,-115,-124,-134,-143,-152,-159,-165,-169,-171,-171,-167,-161,-150,-275,-289,-296,-298,-294,-286,-273,-257,-239,-218,-196,-173,-150,-127,-105,-85,-67,-51,-38,-28,-20,-13,-8,-5,-2,0,1,1,0,-2,-4,-8,-14,-20,-28,-35,-43,-51,-58,-65,-70,-73,-75,-76,-77,-78,-79,-82,-86,-92,-99,-108,-117,-127,-137,-147,-155,-163,-169,-173,-175,-174,-170,-162,-151,-275,-289,-297,-299,-296,-288,-277,-262,-245,-225,-204,-182,-159,-137,-116,-96,-78,-63,-50,-39,-31,-24,-19,-15,-12,-10,-10,-10,-11,-13,-16,-20,-24,-30,-36,-42,-48,-54,-60,-64,-68,-70,-72,-73,-74,-75,-77,-80,-85,-92,-100,-109,-119,-129,-139,-149,-158,-165,-172,-176,-177,-176,-172,-164,-152,-275,-289,-297,-299,-297,-290,-280,-266,-250,-231,-211,-190,-169,-148,-127,-108,-90,-75,-62,-51,-42,-35,-30,-26,-23,-22,-21,-22,-24,-26,-29,-32,-36,-40,-45,-49,-53,-57,-61,-64,-67,-68,-69,-70,-71,-73,-75,-79,-84,-91,-100,-109,-119,-130,-140,-150,-159,-167,-173,-178,-179,-178,-174,-166,-155,-276,-289,-297,-300,-298,-292,-282,-269,-254,-237,-218,-198,-178,-158,-138,-120,-103,-88,-75,-64,-55,-48,-42,-38,-35,-34,-34,-35,-36,-39,-42,-45,-48,-51,-54,-57,-59,-62,-63,-65,-66,-67,-67,-68,-69,-71,-73,-77,-83,-90,-99,-109,-119,-130,-141,-151,-160,-168,-175,-179,-182,-181,-177,-170,-158,-278,-291,-298,-300,-298,-293,-284,-272,-258,-242,-224,-206,-187,-168,-149,-131,-115,-100,-87,-76,-67,-59,-53,-49,-47,-45,-46,-47,-49,-52,-55,-58,-60,-63,-64,-66,-66,-67,-67,-67,-67,-67,-67,-67,-68,-69,-72,-76,-82,-89,-98,-108,-119,-130,-141,-152,-161,-170,-177,-182,-185,-184,-181,-174,-164,-281,-293,-299,-302,-300,-295,-286,-275,-262,-247,-230,-213,-195,-177,-159,-142,-126,-111,-99,-88,-78,-70,-64,-60,-57,-56,-57,-59,-61,-64,-67,-70,-72,-74,-75,-75,-75,-74,-73,-72,-70,-69,-68,-67,-67,-68,-71,-74,-80,-87,-97,-107,-118,-129,-141,-152,-163,-172,-180,-185,-189,-189,-187,-181,-171,-286,-297,-302,-304,-302,-297,-289,-278,-266,-251,-235,-219,-201,-184,-167,-150,-135,-121,-108,-97,-88,-80,-74,-69,-67,-66,-67,-69,-71,-74,-78,-81,-83,-85,-85,-85,-84,-83,-81,-79,-77,-74,-72,-70,-69,-69,-70,-73,-78,-86,-95,-105,-117,-129,-141,-153,-165,-175,-184,-190,-195,-196,-195,-189,-180,-293,-302,-307,-308,-306,-301,-292,-282,-269,-255,-240,-223,-207,-190,-173,-157,-142,-128,-115,-104,-95,-87,-81,-77,-74,-74,-74,-77,-80,-83,-87,-90,-93,-95,-96,-96,-95,-94,-92,-89,-86,-83,-79,-75,-72,-71,-71,-72,-77,-83,-92,-103,-115,-128,-142,-155,-167,-179,-189,-197,-203,-206,-205,-200,-191,-301,-309,-314,-314,-311,-305,-297,-286,-274,-259,-244,-228,-211,-194,-177,-161,-146,-133,-120,-110,-100,-93,-87,-82,-80,-79,-81,-83,-86,-90,-94,-98,-101,-104,-106,-107,-108,-107,-105,-103,-99,-94,-88,-83,-78,-74,-72,-72,-75,-81,-90,-101,-114,-128,-143,-157,-172,-185,-197,-206,-213,-217,-217,-213,-204,-310,-318,-321,-321,-318,-311,-302,-291,-278,-263,-248,-231,-214,-197,-181,-165,-150,-136,-124,-113,-104,-97,-91,-87,-85,-84,-86,-88,-91,-96,-100,-105,-109,-113,-117,-119,-121,-121,-120,-118,-114,-107,-100,-93,-85,-79,-75,-73,-74,-79,-88,-99,-113,-128,-144,-161,-177,-192,-205,-217,-225,-230,-231,-227,-218,-321,-327,-330,-329,-325,-318,-308,-296,-283,-268,-252,-235,-218,-200,-184,-168,-153,-139,-127,-117,-108,-101,-95,-91,-89,-89,-90,-93,-96,-101,-106,-111,-117,-122,-127,-132,-135,-137,-137,-135,-130,-123,-114,-104,-94,-85,-78,-74,-74,-78,-87,-99,-113,-129,-147,-165,-183,-200,-215,-228,-238,-245,-247,-243,-234,-332,-338,-340,-338,-333,-325,-315,-302,-288,-272,-256,-238,-221,-203,-186,-170,-155,-142,-130,-120,-111,-104,-99,-95,-93,-93,-94,-97,-101,-105,-111,-117,-124,-131,-138,-144,-149,-153,-154,-153,-148,-140,-129,-117,-104,-93,-83,-77,-75,-79,-87,-99,-114,-132,-151,-171,-190,-209,-227,-241,-253,-260,-263,-260,-250,-344,-349,-350,-347,-341,-333,-322,-308,-293,-277,-260,-242,-224,-207,-189,-173,-158,-145,-134,-124,-115,-109,-104,-100,-98,-98,-99,-101,-105,-110,-116,-123,-131,-140,-149,-157,-164,-169,-172,-171,-166,-157,-145,-130,-116,-102,-90,-81,-78,-80,-88,-100,-116,-135,-156,-177,-199,-220,-239,-255,-268,-277,-280,-277,-268,-357,-361,-361,-357,-350,-341,-329,-315,-300,-283,-265,-247,-229,-211,-193,-177,-162,-149,-138,-128,-121,-114,-110,-106,-104,-104,-105,-107,-111,-115,-122,-129,-138,-148,-159,-169,-178,-185,-189,-189,-185,-175,-161,-145,-128,-111,-97,-87,-82,-84,-91,-104,-121,-140,-162,-185,-208,-231,-252,-270,-284,-293,-298,-295,-285,-369,-372,-371,-367,-360,-349,-337,-322,-306,-289,-271,-253,-234,-216,-199,-183,-168,-155,-144,-135,-128,-122,-117,-114,-112,-111,-112,-114,-117,-122,-128,-136,-146,-157,-170,-181,-192,-201,-206,-207,-202,-192,-177,-159,-141,-123,-107,-95,-89,-90,-97,-110,-127,-148,-171,-195,-219,-243,-265,-284,-300,-310,-315,-312,-302,-382,-384,-382,-377,-369,-358,-345,-330,-314,-296,-278,-260,-241,-223,-206,-190,-176,-163,-153,-144,-137,-131,-127,-124,-122,-121,-121,-122,-125,-130,-136,-144,-155,-167,-180,-193,-205,-215,-221,-223,-219,-208,-193,-174,-154,-135,-117,-105,-98,-98,-105,-118,-136,-157,-181,-206,-231,-256,-279,-299,-315,-326,-331,-329,-319,-394,-395,-392,-386,-378,-367,-353,-338,-322,-304,-286,-268,-250,-232,-216,-200,-186,-174,-164,-156,-149,-144,-139,-136,-134,-133,-133,-134,-136,-140,-146,-154,-164,-176,-190,-204,-217,-228,-235,-237,-233,-223,-207,-188,-168,-148,-130,-117,-109,-110,-117,-130,-147,-169,-193,-218,-244,-270,-293,-314,-330,-342,-347,-346,-336,-406,-406,-402,-396,-386,-375,-362,-347,-331,-314,-296,-278,-261,-244,-228,-213,-200,-189,-179,-171,-165,-160,-156,-152,-150,-148,-147,-147,-149,-152,-157,-165,-175,-187,-201,-215,-228,-239,-246,-249,-245,-235,-220,-202,-182,-162,-144,-131,-124,-124,-131,-144,-162,-183,-207,-233,-259,-284,-307,-328,-345,-356,-362,-361,-351,-417,-415,-411,-404,-394,-383,-370,-356,-340,-324,-308,-291,-275,-259,-244,-230,-218,-207,-198,-191,-185,-180,-176,-172,-169,-167,-165,-165,-165,-168,-172,-178,-187,-198,-211,-224,-237,-247,-254,-257,-254,-245,-231,-214,-195,-177,-161,-148,-142,-143,-150,-163,-180,-201,-224,-249,-274,-298,-321,-341,-358,-369,-375,-374,-365,-427,-424,-419,-411,-402,-391,-378,-365,-351,-336,-321,-306,-291,-277,-263,-251,-240,-230,-222,-215,-210,-205,-200,-197,-193,-190,-188,-186,-185,-186,-189,-193,-200,-210,-221,-233,-244,-253,-259,-262,-260,-252,-240,-225,-208,-193,-179,-169,-164,-165,-173,-186,-202,-222,-244,-267,-291,-314,-335,-354,-369,-380,-386,-385,-378,-436,-431,-425,-417,-408,-398,-386,-374,-362,-349,-336,-324,-311,-299,-288,-277,-267,-259,-252,-245,-240,-235,-230,-226,-222,-218,-214,-211,-209,-209,-209,-212,-216,-223,-231,-240,-248,-255,-261,-263,-261,-255,-245,-234,-221,-209,-199,-192,-189,-192,-200,-213,-228,-246,-266,-287,-309,-329,-348,-365,-379,-389,-395,-395,-388,-444,-437,-430,-422,-413,-404,-394,-384,-374,-364,-354,-344,-335,-325,-316,-308,-300,-293,-287,-281,-276,-270,-265,-261,-256,-251,-246,-242,-238,-235,-233,-233,-234,-237,-241,-246,-250,-255,-257,-259,-257,-254,-248,-240,-233,-226,-221,-219,-219,-224,-233,-245,-259,-275,-292,-310,-328,-345,-361,-375,-387,-395,-400,-401,-397,-450,-441,-433,-425,-417,-409,-402,-395,-388,-381,-375,-369,-362,-356,-351,-345,-339,-334,-329,-323,-318,-313,-307,-302,-296,-290,-284,-278,-272,-267,-262,-258,-255,-252,-251,-250,-250,-250,-249,-249,-248,-247,-246,-245,-244,-244,-246,-249,-254,-261,-271,-282,-294,-307,-321,-334,-348,-361,-373,-383,-392,-399,-403,-405,-403],NJ=64,U0=0.06890,U1=0.87297,V0=-0.00246,V1=0.95011,PM=[71.0051182, 329.6031713, -75.2113593, 278.6412333, -54.9074407, 64.5463106, -313.9854371, 528.3368402, -0.2850439, 0.3384762, -0.1604862, 1.0],OX=72,OY=103;
(function(){
var cv=document.getElementById('surf');var SS=2;var W=cv.width,H=cv.height;
var ctx=cv.getContext('2d');var img=ctx.createImageData(W,H);var D=img.data;
var zb=new Float32Array(W*H);for(var k=0;k<W*H;k++)zb[k]=1e9;
var zb2=new Float32Array(W*H);
var C=[[49,54,149],[69,117,180],[116,173,209],[171,217,233],[224,243,248],[255,255,191],[254,224,144],[253,174,97],[244,109,67],[215,48,39],[165,0,38]];
var ZMIN=-0.5975,ZMAX=0.1403;
var n=NJ+1,px=new Float32Array(n*n),py=new Float32Array(n*n),pd=new Float32Array(n*n),pz=new Float32Array(n*n);
for(var i=0;i<n;i++)for(var j=0;j<n;j++){var id=i*n+j;var z=ZG[id]/1000;var u=U0+(U1-U0)*i/NJ,v=V0+(V1-V0)*j/NJ,w=(z+1)/2;
var hx=PM[0]*u+PM[1]*v+PM[2]*w+PM[3],hy=PM[4]*u+PM[5]*v+PM[6]*w+PM[7],hw=PM[8]*u+PM[9]*v+PM[10]*w+PM[11];
px[id]=(hx/hw-OX)*SS;py[id]=(hy/hw-OY)*SS;pd[id]=hw;pz[id]=z;}
function tri(a,b,c){
var x0=px[a],y0=py[a],x1=px[b],y1=py[b],x2=px[c],y2=py[c];
var area=(x1-x0)*(y2-y0)-(x2-x0)*(y1-y0);if(area===0)return;
var minx=Math.max(0,Math.floor(Math.min(x0,x1,x2))),maxx=Math.min(W-1,Math.ceil(Math.max(x0,x1,x2)));
var miny=Math.max(0,Math.floor(Math.min(y0,y1,y2))),maxy=Math.min(H-1,Math.ceil(Math.max(y0,y1,y2)));
for(var y=miny;y<=maxy;y++){var sy=y+0.5;for(var x=minx;x<=maxx;x++){var sx=x+0.5;
var w0=((x1-sx)*(y2-sy)-(x2-sx)*(y1-sy))/area,w1=((x2-sx)*(y0-sy)-(x0-sx)*(y2-sy))/area,w2=1-w0-w1;
if(w0<-1e-6||w1<-1e-6||w2<-1e-6)continue;
var d=w0*pd[a]+w1*pd[b]+w2*pd[c];var k=y*W+x;if(d>=zb[k])continue;zb[k]=d;
zb2[k]=w0*pz[a]+w1*pz[b]+w2*pz[c];D[k*4+3]=255;}}}
for(var i=0;i<NJ;i++)for(var j=0;j<NJ;j++){var a=i*n+j,b=(i+1)*n+j,c=(i+1)*n+j+1,e=i*n+j+1;tri(a,b,c);tri(a,c,e);}
for(var k=0;k<W*H;k++){if(!D[k*4+3])continue;var t=(zb2[k]-ZMIN)/(ZMAX-ZMIN);t=Math.max(0,Math.min(1,t))*10;var ii=Math.min(9,Math.floor(t)),fr=t-ii;
var c0=C[ii],c1=C[ii+1];D[k*4]=c0[0]+(c1[0]-c0[0])*fr;D[k*4+1]=c0[1]+(c1[1]-c0[1])*fr;D[k*4+2]=c0[2]+(c1[2]-c0[2])*fr;}
ctx.putImageData(img,0,0);
document.getElementById('fallback').style.display='none';
})();
</script></div>
</div>

<div class="card" style="left:877px;top:61px;width:387px;height:471px">
  <div class="chead"></div>
  <svg class="ic" style="left:16.0px;top:10.0px;width:24px;height:24px" viewBox="0 0 24 24"><path fill="#d4d4d4" d="M3 11H11V3H3M5 5H9V9H5M13 21H21V13H13M15 15H19V19H15M3 21H11V13H3M5 15H9V19H5M13 3V11H21V3M19 9H15V5H19Z"/></svg>
  <div class="htxt" style="left:44px;top:11px">Bed Mesh Controls</div>
  <div class="abs t12b" style="left:16px;top:59px">Name</div>
  <div class="abs t12b" style="left:217px;top:59px">Variance</div>
  <div class="abs" style="left:0;top:89px;width:387px;height:1px;background:#3b3b3e"></div>
  <div class="abs" style="left:16px;top:102px;font-size:14px;color:#d6d6d6">default</div>
  <div class="abs" style="left:109px;top:98px;width:56px;height:24px;border-radius:12px;background:#555557;font-size:12px;line-height:24px;text-align:center;color:#dedede">active</div>
  <div class="abs" style="left:217px;top:102px;font-size:14px;color:#bdbdbd">0.5363</div>
  <svg class="ic" style="left:345.5px;top:100.5px;width:19px;height:19px" viewBox="0 0 24 24"><path fill="#dedede" d="M19,6.41L17.59,5L12,10.59L6.41,5L5,6.41L10.59,12L5,17.59L6.41,19L12,13.41L17.59,19L19,17.59L13.41,12L19,6.41Z"/></svg>
  <div class="abs" style="left:0;top:130px;width:387px;height:1px;background:#3b3b3e"></div>
  <div class="btn" style="left:16px;top:147px;width:170px;background:#4a4a4d;color:#e0e0e0"><span>CLEAR PROFILE</span></div>
  <div class="btn" style="left:16px;top:183px;width:170px;background:#3e3e41;color:#79797b"><span>CALIBRATE</span></div>
  <div class="btn" style="left:16px;top:219px;width:170px;background:#2196f3;color:#e8f3fd"><span>SAVE AS</span></div>
  <div class="btn" style="left:202px;top:147px;width:169px;background:#2196f3;color:#e8f3fd"><svg style="display:inline-block;vertical-align:-2px;width:15px;height:15px;margin-right:6px" viewBox="0 0 24 24"><path fill="#e8f3fd" d="M10,20V14H14V20H19V12H22L12,3L2,12H5V20H10Z"/></svg><span>ALL</span></div>
  <div class="radio" style="left:18px;top:269px"></div>
  <div class="lbl16" style="left:49px;top:271px">Probed matrix</div>
  <div class="radio" style="left:18px;top:301px;border-color:#2196f3"><div class="abs" style="left:3px;top:3px;width:10px;height:10px;border-radius:50%;background:#2196f3"></div></div>
  <div class="lbl16" style="left:49px;top:303px">Mesh matrix</div>
  <div class="cb" style="left:205px;top:270px"></div>
  <div class="lbl16" style="left:234px;top:271px">Wireframe</div>
  <div class="cb" style="left:205px;top:302px"></div>
  <div class="lbl16" style="left:234px;top:303px;white-space:nowrap">app.bedmesh.label.flat</div>
  <div class="lbl16" style="left:16px;top:355px">Color scale</div>
  <div class="track" style="left:118px;top:362px;width:245px"></div>
  <div class="tick" style="left:116px;top:361px"></div>
  <div class="tick" style="left:239px;top:361px"></div>
  <div class="thumb" style="left:357px;top:357px"></div>
  <div class="lbl14" style="left:116px;top:373px">min</div>
  <div class="lbl14" style="left:228px;top:373px">0.1</div>
  <div class="lbl14" style="left:339px;top:373px">0.2</div>
  <div class="lbl16" style="left:16px;top:409px">Box scale</div>
  <div class="track" style="left:118px;top:416px;width:245px"></div>
  <div class="tick" style="left:116px;top:415px"></div>
  <div class="tick" style="left:239px;top:415px"></div>
  <div class="thumb" style="left:357px;top:411px"></div>
  <div class="lbl14" style="left:116px;top:427px">1.0</div>
  <div class="lbl14" style="left:228px;top:427px">1.5</div>
  <div class="lbl14" style="left:339px;top:427px">2.0</div>
</div>

<div class="card" style="left:877px;top:548px;width:387px;height:80px">
  <div class="chead"></div>
  <svg class="ic" style="left:16.0px;top:10.0px;width:24px;height:24px" viewBox="0 0 24 24"><path fill="#d4d4d4" d="M9,11H15V8L19,12L15,16V13H9V16L5,12L9,8V11M2,20V4H4V20H2M20,20V4H22V20H20Z"/></svg>
  <div class="htxt" style="left:44px;top:11px">Endstops</div>
  <svg class="ic" style="left:346.0px;top:12.0px;width:18px;height:18px" viewBox="0 0 24 24"><path fill="#dedede" d="M17.65,6.35C16.2,4.9 14.21,4 12,4A8,8 0 0,0 4,12A8,8 0 0,0 12,20C15.73,20 18.84,17.45 19.73,14H17.65C16.83,16.33 14.61,18 12,18A6,6 0 0,1 6,12A6,6 0 0,1 12,6C13.66,6 15.14,6.69 16.22,7.78L13,11H20V4L17.65,6.35Z"/></svg>
  <div class="abs" style="left:16px;top:53px;font-size:14.2px;color:#d0d0d0">Use the refresh button to update endstop status.</div>
  <div class="abs" style="left:0;top:79px;width:387px;height:1px;background:#36363a"></div>
</div>
</body></html>
